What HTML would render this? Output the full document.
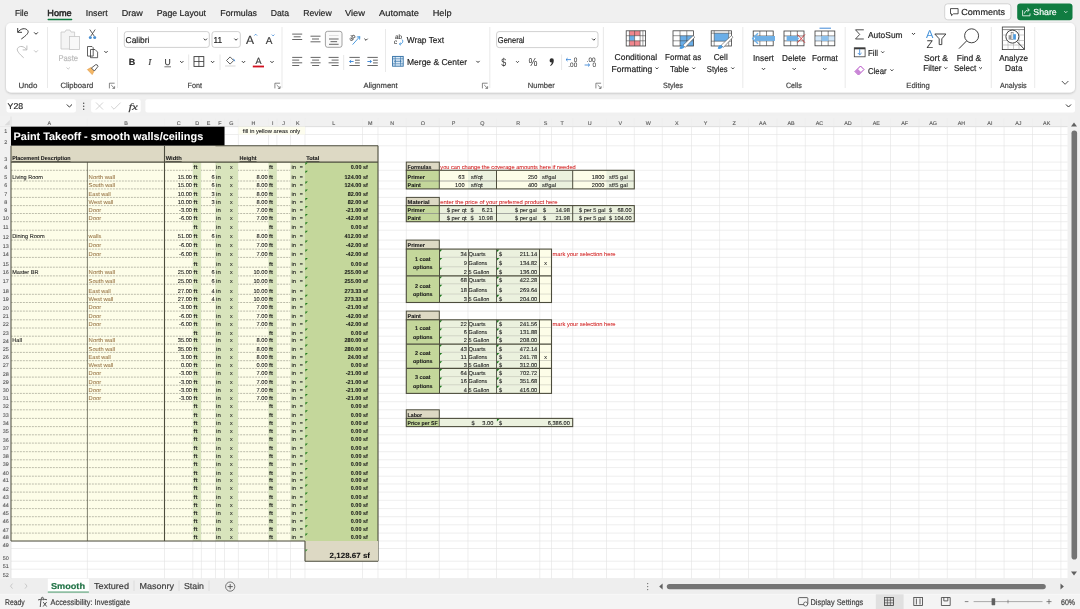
<!DOCTYPE html>
<html><head><meta charset="utf-8"><style>
html,body{margin:0;padding:0;width:1080px;height:609px;overflow:hidden;background:#f0f0f0;}
svg{display:block;font-family:'Liberation Sans', sans-serif;will-change:transform;text-rendering:geometricPrecision;}
</style></head><body>
<svg width="1080" height="609" viewBox="0 0 1080 609">
<rect x="0.00" y="0.00" width="1080.00" height="609.00" fill="#f0f0f0" />
<rect x="11.00" y="126.50" width="1056.50" height="452.20" fill="#ffffff" />
<line x1="87.40" y1="126.50" x2="87.40" y2="578.70" stroke="#e2e2e2" stroke-width="0.6" />
<line x1="164.50" y1="126.50" x2="164.50" y2="578.70" stroke="#e2e2e2" stroke-width="0.6" />
<line x1="192.80" y1="126.50" x2="192.80" y2="578.70" stroke="#e2e2e2" stroke-width="0.6" />
<line x1="201.40" y1="126.50" x2="201.40" y2="578.70" stroke="#e2e2e2" stroke-width="0.6" />
<line x1="215.50" y1="126.50" x2="215.50" y2="578.70" stroke="#e2e2e2" stroke-width="0.6" />
<line x1="224.50" y1="126.50" x2="224.50" y2="578.70" stroke="#e2e2e2" stroke-width="0.6" />
<line x1="238.40" y1="126.50" x2="238.40" y2="578.70" stroke="#e2e2e2" stroke-width="0.6" />
<line x1="268.50" y1="126.50" x2="268.50" y2="578.70" stroke="#e2e2e2" stroke-width="0.6" />
<line x1="276.90" y1="126.50" x2="276.90" y2="578.70" stroke="#e2e2e2" stroke-width="0.6" />
<line x1="290.50" y1="126.50" x2="290.50" y2="578.70" stroke="#e2e2e2" stroke-width="0.6" />
<line x1="305.00" y1="126.50" x2="305.00" y2="578.70" stroke="#e2e2e2" stroke-width="0.6" />
<line x1="362.50" y1="126.50" x2="362.50" y2="578.70" stroke="#e2e2e2" stroke-width="0.6" />
<line x1="378.00" y1="126.50" x2="378.00" y2="578.70" stroke="#e2e2e2" stroke-width="0.6" />
<line x1="406.30" y1="126.50" x2="406.30" y2="578.70" stroke="#e2e2e2" stroke-width="0.6" />
<line x1="439.30" y1="126.50" x2="439.30" y2="578.70" stroke="#e2e2e2" stroke-width="0.6" />
<line x1="468.00" y1="126.50" x2="468.00" y2="578.70" stroke="#e2e2e2" stroke-width="0.6" />
<line x1="496.50" y1="126.50" x2="496.50" y2="578.70" stroke="#e2e2e2" stroke-width="0.6" />
<line x1="539.80" y1="126.50" x2="539.80" y2="578.70" stroke="#e2e2e2" stroke-width="0.6" />
<line x1="551.50" y1="126.50" x2="551.50" y2="578.70" stroke="#e2e2e2" stroke-width="0.6" />
<line x1="572.70" y1="126.50" x2="572.70" y2="578.70" stroke="#e2e2e2" stroke-width="0.6" />
<line x1="606.50" y1="126.50" x2="606.50" y2="578.70" stroke="#e2e2e2" stroke-width="0.6" />
<line x1="634.30" y1="126.50" x2="634.30" y2="578.70" stroke="#e2e2e2" stroke-width="0.6" />
<line x1="662.30" y1="126.50" x2="662.30" y2="578.70" stroke="#e2e2e2" stroke-width="0.6" />
<line x1="691.50" y1="126.50" x2="691.50" y2="578.70" stroke="#e2e2e2" stroke-width="0.6" />
<line x1="719.60" y1="126.50" x2="719.60" y2="578.70" stroke="#e2e2e2" stroke-width="0.6" />
<line x1="748.50" y1="126.50" x2="748.50" y2="578.70" stroke="#e2e2e2" stroke-width="0.6" />
<line x1="776.90" y1="126.50" x2="776.90" y2="578.70" stroke="#e2e2e2" stroke-width="0.6" />
<line x1="805.30" y1="126.50" x2="805.30" y2="578.70" stroke="#e2e2e2" stroke-width="0.6" />
<line x1="833.70" y1="126.50" x2="833.70" y2="578.70" stroke="#e2e2e2" stroke-width="0.6" />
<line x1="862.10" y1="126.50" x2="862.10" y2="578.70" stroke="#e2e2e2" stroke-width="0.6" />
<line x1="890.50" y1="126.50" x2="890.50" y2="578.70" stroke="#e2e2e2" stroke-width="0.6" />
<line x1="918.90" y1="126.50" x2="918.90" y2="578.70" stroke="#e2e2e2" stroke-width="0.6" />
<line x1="947.30" y1="126.50" x2="947.30" y2="578.70" stroke="#e2e2e2" stroke-width="0.6" />
<line x1="975.70" y1="126.50" x2="975.70" y2="578.70" stroke="#e2e2e2" stroke-width="0.6" />
<line x1="1004.10" y1="126.50" x2="1004.10" y2="578.70" stroke="#e2e2e2" stroke-width="0.6" />
<line x1="1032.50" y1="126.50" x2="1032.50" y2="578.70" stroke="#e2e2e2" stroke-width="0.6" />
<line x1="1060.90" y1="126.50" x2="1060.90" y2="578.70" stroke="#e2e2e2" stroke-width="0.6" />
<line x1="11.00" y1="126.70" x2="1067.50" y2="126.70" stroke="#e2e2e2" stroke-width="0.6" />
<line x1="11.00" y1="134.50" x2="1067.50" y2="134.50" stroke="#e2e2e2" stroke-width="0.6" />
<line x1="11.00" y1="145.80" x2="1067.50" y2="145.80" stroke="#e2e2e2" stroke-width="0.6" />
<line x1="11.00" y1="162.10" x2="1067.50" y2="162.10" stroke="#e2e2e2" stroke-width="0.6" />
<line x1="11.00" y1="170.30" x2="1067.50" y2="170.30" stroke="#e2e2e2" stroke-width="0.6" />
<line x1="11.00" y1="181.00" x2="1067.50" y2="181.00" stroke="#e2e2e2" stroke-width="0.6" />
<line x1="11.00" y1="188.90" x2="1067.50" y2="188.90" stroke="#e2e2e2" stroke-width="0.6" />
<line x1="11.00" y1="197.40" x2="1067.50" y2="197.40" stroke="#e2e2e2" stroke-width="0.6" />
<line x1="11.00" y1="205.60" x2="1067.50" y2="205.60" stroke="#e2e2e2" stroke-width="0.6" />
<line x1="11.00" y1="213.50" x2="1067.50" y2="213.50" stroke="#e2e2e2" stroke-width="0.6" />
<line x1="11.00" y1="221.70" x2="1067.50" y2="221.70" stroke="#e2e2e2" stroke-width="0.6" />
<line x1="11.00" y1="230.20" x2="1067.50" y2="230.20" stroke="#e2e2e2" stroke-width="0.6" />
<line x1="11.00" y1="240.10" x2="1067.50" y2="240.10" stroke="#e2e2e2" stroke-width="0.6" />
<line x1="11.00" y1="249.10" x2="1067.50" y2="249.10" stroke="#e2e2e2" stroke-width="0.6" />
<line x1="11.00" y1="257.40" x2="1067.50" y2="257.40" stroke="#e2e2e2" stroke-width="0.6" />
<line x1="11.00" y1="267.20" x2="1067.50" y2="267.20" stroke="#e2e2e2" stroke-width="0.6" />
<line x1="11.00" y1="275.90" x2="1067.50" y2="275.90" stroke="#e2e2e2" stroke-width="0.6" />
<line x1="11.00" y1="284.20" x2="1067.50" y2="284.20" stroke="#e2e2e2" stroke-width="0.6" />
<line x1="11.00" y1="294.30" x2="1067.50" y2="294.30" stroke="#e2e2e2" stroke-width="0.6" />
<line x1="11.00" y1="302.50" x2="1067.50" y2="302.50" stroke="#e2e2e2" stroke-width="0.6" />
<line x1="11.00" y1="311.10" x2="1067.50" y2="311.10" stroke="#e2e2e2" stroke-width="0.6" />
<line x1="11.00" y1="319.80" x2="1067.50" y2="319.80" stroke="#e2e2e2" stroke-width="0.6" />
<line x1="11.00" y1="328.00" x2="1067.50" y2="328.00" stroke="#e2e2e2" stroke-width="0.6" />
<line x1="11.00" y1="336.20" x2="1067.50" y2="336.20" stroke="#e2e2e2" stroke-width="0.6" />
<line x1="11.00" y1="344.10" x2="1067.50" y2="344.10" stroke="#e2e2e2" stroke-width="0.6" />
<line x1="11.00" y1="352.40" x2="1067.50" y2="352.40" stroke="#e2e2e2" stroke-width="0.6" />
<line x1="11.00" y1="360.70" x2="1067.50" y2="360.70" stroke="#e2e2e2" stroke-width="0.6" />
<line x1="11.00" y1="368.40" x2="1067.50" y2="368.40" stroke="#e2e2e2" stroke-width="0.6" />
<line x1="11.00" y1="377.10" x2="1067.50" y2="377.10" stroke="#e2e2e2" stroke-width="0.6" />
<line x1="11.00" y1="385.20" x2="1067.50" y2="385.20" stroke="#e2e2e2" stroke-width="0.6" />
<line x1="11.00" y1="393.40" x2="1067.50" y2="393.40" stroke="#e2e2e2" stroke-width="0.6" />
<line x1="11.00" y1="401.70" x2="1067.50" y2="401.70" stroke="#e2e2e2" stroke-width="0.6" />
<line x1="11.00" y1="409.80" x2="1067.50" y2="409.80" stroke="#e2e2e2" stroke-width="0.6" />
<line x1="11.00" y1="418.40" x2="1067.50" y2="418.40" stroke="#e2e2e2" stroke-width="0.6" />
<line x1="11.00" y1="426.60" x2="1067.50" y2="426.60" stroke="#e2e2e2" stroke-width="0.6" />
<line x1="11.00" y1="434.80" x2="1067.50" y2="434.80" stroke="#e2e2e2" stroke-width="0.6" />
<line x1="11.00" y1="443.10" x2="1067.50" y2="443.10" stroke="#e2e2e2" stroke-width="0.6" />
<line x1="11.00" y1="451.70" x2="1067.50" y2="451.70" stroke="#e2e2e2" stroke-width="0.6" />
<line x1="11.00" y1="459.80" x2="1067.50" y2="459.80" stroke="#e2e2e2" stroke-width="0.6" />
<line x1="11.00" y1="467.60" x2="1067.50" y2="467.60" stroke="#e2e2e2" stroke-width="0.6" />
<line x1="11.00" y1="476.20" x2="1067.50" y2="476.20" stroke="#e2e2e2" stroke-width="0.6" />
<line x1="11.00" y1="484.00" x2="1067.50" y2="484.00" stroke="#e2e2e2" stroke-width="0.6" />
<line x1="11.00" y1="492.10" x2="1067.50" y2="492.10" stroke="#e2e2e2" stroke-width="0.6" />
<line x1="11.00" y1="500.30" x2="1067.50" y2="500.30" stroke="#e2e2e2" stroke-width="0.6" />
<line x1="11.00" y1="508.60" x2="1067.50" y2="508.60" stroke="#e2e2e2" stroke-width="0.6" />
<line x1="11.00" y1="516.70" x2="1067.50" y2="516.70" stroke="#e2e2e2" stroke-width="0.6" />
<line x1="11.00" y1="524.80" x2="1067.50" y2="524.80" stroke="#e2e2e2" stroke-width="0.6" />
<line x1="11.00" y1="533.10" x2="1067.50" y2="533.10" stroke="#e2e2e2" stroke-width="0.6" />
<line x1="11.00" y1="541.00" x2="1067.50" y2="541.00" stroke="#e2e2e2" stroke-width="0.6" />
<line x1="11.00" y1="548.50" x2="1067.50" y2="548.50" stroke="#e2e2e2" stroke-width="0.6" />
<line x1="11.00" y1="561.20" x2="1067.50" y2="561.20" stroke="#e2e2e2" stroke-width="0.6" />
<line x1="11.00" y1="569.20" x2="1067.50" y2="569.20" stroke="#e2e2e2" stroke-width="0.6" />
<line x1="11.00" y1="578.70" x2="1067.50" y2="578.70" stroke="#e2e2e2" stroke-width="0.6" />
<rect x="0.00" y="116.50" width="1067.50" height="10.00" fill="#f1f1f1" />
<line x1="0.00" y1="126.50" x2="1067.50" y2="126.50" stroke="#d6d6d6" stroke-width="0.6" />
<text x="49.20" y="124.60" font-size="5.4" fill="#5a5a5a" stroke="#5a5a5a" stroke-width="0.12" text-anchor="middle">A</text>
<line x1="87.40" y1="118.50" x2="87.40" y2="126.50" stroke="#ececec" stroke-width="0.5" />
<text x="125.95" y="124.60" font-size="5.4" fill="#5a5a5a" stroke="#5a5a5a" stroke-width="0.12" text-anchor="middle">B</text>
<line x1="164.50" y1="118.50" x2="164.50" y2="126.50" stroke="#ececec" stroke-width="0.5" />
<text x="178.65" y="124.60" font-size="5.4" fill="#5a5a5a" stroke="#5a5a5a" stroke-width="0.12" text-anchor="middle">C</text>
<line x1="192.80" y1="118.50" x2="192.80" y2="126.50" stroke="#ececec" stroke-width="0.5" />
<text x="197.10" y="124.60" font-size="5.4" fill="#5a5a5a" stroke="#5a5a5a" stroke-width="0.12" text-anchor="middle">D</text>
<line x1="201.40" y1="118.50" x2="201.40" y2="126.50" stroke="#ececec" stroke-width="0.5" />
<text x="208.45" y="124.60" font-size="5.4" fill="#5a5a5a" stroke="#5a5a5a" stroke-width="0.12" text-anchor="middle">E</text>
<line x1="215.50" y1="118.50" x2="215.50" y2="126.50" stroke="#ececec" stroke-width="0.5" />
<text x="220.00" y="124.60" font-size="5.4" fill="#5a5a5a" stroke="#5a5a5a" stroke-width="0.12" text-anchor="middle">F</text>
<line x1="224.50" y1="118.50" x2="224.50" y2="126.50" stroke="#ececec" stroke-width="0.5" />
<text x="231.45" y="124.60" font-size="5.4" fill="#5a5a5a" stroke="#5a5a5a" stroke-width="0.12" text-anchor="middle">G</text>
<line x1="238.40" y1="118.50" x2="238.40" y2="126.50" stroke="#ececec" stroke-width="0.5" />
<text x="253.45" y="124.60" font-size="5.4" fill="#5a5a5a" stroke="#5a5a5a" stroke-width="0.12" text-anchor="middle">H</text>
<line x1="268.50" y1="118.50" x2="268.50" y2="126.50" stroke="#ececec" stroke-width="0.5" />
<text x="272.70" y="124.60" font-size="5.4" fill="#5a5a5a" stroke="#5a5a5a" stroke-width="0.12" text-anchor="middle">I</text>
<line x1="276.90" y1="118.50" x2="276.90" y2="126.50" stroke="#ececec" stroke-width="0.5" />
<text x="283.70" y="124.60" font-size="5.4" fill="#5a5a5a" stroke="#5a5a5a" stroke-width="0.12" text-anchor="middle">J</text>
<line x1="290.50" y1="118.50" x2="290.50" y2="126.50" stroke="#ececec" stroke-width="0.5" />
<text x="297.75" y="124.60" font-size="5.4" fill="#5a5a5a" stroke="#5a5a5a" stroke-width="0.12" text-anchor="middle">K</text>
<line x1="305.00" y1="118.50" x2="305.00" y2="126.50" stroke="#ececec" stroke-width="0.5" />
<text x="333.75" y="124.60" font-size="5.4" fill="#5a5a5a" stroke="#5a5a5a" stroke-width="0.12" text-anchor="middle">L</text>
<line x1="362.50" y1="118.50" x2="362.50" y2="126.50" stroke="#ececec" stroke-width="0.5" />
<text x="370.25" y="124.60" font-size="5.4" fill="#5a5a5a" stroke="#5a5a5a" stroke-width="0.12" text-anchor="middle">M</text>
<line x1="378.00" y1="118.50" x2="378.00" y2="126.50" stroke="#ececec" stroke-width="0.5" />
<text x="392.15" y="124.60" font-size="5.4" fill="#5a5a5a" stroke="#5a5a5a" stroke-width="0.12" text-anchor="middle">N</text>
<line x1="406.30" y1="118.50" x2="406.30" y2="126.50" stroke="#ececec" stroke-width="0.5" />
<text x="422.80" y="124.60" font-size="5.4" fill="#5a5a5a" stroke="#5a5a5a" stroke-width="0.12" text-anchor="middle">O</text>
<line x1="439.30" y1="118.50" x2="439.30" y2="126.50" stroke="#ececec" stroke-width="0.5" />
<text x="453.65" y="124.60" font-size="5.4" fill="#5a5a5a" stroke="#5a5a5a" stroke-width="0.12" text-anchor="middle">P</text>
<line x1="468.00" y1="118.50" x2="468.00" y2="126.50" stroke="#ececec" stroke-width="0.5" />
<text x="482.25" y="124.60" font-size="5.4" fill="#5a5a5a" stroke="#5a5a5a" stroke-width="0.12" text-anchor="middle">Q</text>
<line x1="496.50" y1="118.50" x2="496.50" y2="126.50" stroke="#ececec" stroke-width="0.5" />
<text x="518.15" y="124.60" font-size="5.4" fill="#5a5a5a" stroke="#5a5a5a" stroke-width="0.12" text-anchor="middle">R</text>
<line x1="539.80" y1="118.50" x2="539.80" y2="126.50" stroke="#ececec" stroke-width="0.5" />
<text x="545.65" y="124.60" font-size="5.4" fill="#5a5a5a" stroke="#5a5a5a" stroke-width="0.12" text-anchor="middle">S</text>
<line x1="551.50" y1="118.50" x2="551.50" y2="126.50" stroke="#ececec" stroke-width="0.5" />
<text x="562.10" y="124.60" font-size="5.4" fill="#5a5a5a" stroke="#5a5a5a" stroke-width="0.12" text-anchor="middle">T</text>
<line x1="572.70" y1="118.50" x2="572.70" y2="126.50" stroke="#ececec" stroke-width="0.5" />
<text x="589.60" y="124.60" font-size="5.4" fill="#5a5a5a" stroke="#5a5a5a" stroke-width="0.12" text-anchor="middle">U</text>
<line x1="606.50" y1="118.50" x2="606.50" y2="126.50" stroke="#ececec" stroke-width="0.5" />
<text x="620.40" y="124.60" font-size="5.4" fill="#5a5a5a" stroke="#5a5a5a" stroke-width="0.12" text-anchor="middle">V</text>
<line x1="634.30" y1="118.50" x2="634.30" y2="126.50" stroke="#ececec" stroke-width="0.5" />
<text x="648.30" y="124.60" font-size="5.4" fill="#5a5a5a" stroke="#5a5a5a" stroke-width="0.12" text-anchor="middle">W</text>
<line x1="662.30" y1="118.50" x2="662.30" y2="126.50" stroke="#ececec" stroke-width="0.5" />
<text x="676.90" y="124.60" font-size="5.4" fill="#5a5a5a" stroke="#5a5a5a" stroke-width="0.12" text-anchor="middle">X</text>
<line x1="691.50" y1="118.50" x2="691.50" y2="126.50" stroke="#ececec" stroke-width="0.5" />
<text x="705.55" y="124.60" font-size="5.4" fill="#5a5a5a" stroke="#5a5a5a" stroke-width="0.12" text-anchor="middle">Y</text>
<line x1="719.60" y1="118.50" x2="719.60" y2="126.50" stroke="#ececec" stroke-width="0.5" />
<text x="734.05" y="124.60" font-size="5.4" fill="#5a5a5a" stroke="#5a5a5a" stroke-width="0.12" text-anchor="middle">Z</text>
<line x1="748.50" y1="118.50" x2="748.50" y2="126.50" stroke="#ececec" stroke-width="0.5" />
<text x="762.70" y="124.60" font-size="5.4" fill="#5a5a5a" stroke="#5a5a5a" stroke-width="0.12" text-anchor="middle">AA</text>
<line x1="776.90" y1="118.50" x2="776.90" y2="126.50" stroke="#ececec" stroke-width="0.5" />
<text x="791.10" y="124.60" font-size="5.4" fill="#5a5a5a" stroke="#5a5a5a" stroke-width="0.12" text-anchor="middle">AB</text>
<line x1="805.30" y1="118.50" x2="805.30" y2="126.50" stroke="#ececec" stroke-width="0.5" />
<text x="819.50" y="124.60" font-size="5.4" fill="#5a5a5a" stroke="#5a5a5a" stroke-width="0.12" text-anchor="middle">AC</text>
<line x1="833.70" y1="118.50" x2="833.70" y2="126.50" stroke="#ececec" stroke-width="0.5" />
<text x="847.90" y="124.60" font-size="5.4" fill="#5a5a5a" stroke="#5a5a5a" stroke-width="0.12" text-anchor="middle">AD</text>
<line x1="862.10" y1="118.50" x2="862.10" y2="126.50" stroke="#ececec" stroke-width="0.5" />
<text x="876.30" y="124.60" font-size="5.4" fill="#5a5a5a" stroke="#5a5a5a" stroke-width="0.12" text-anchor="middle">AE</text>
<line x1="890.50" y1="118.50" x2="890.50" y2="126.50" stroke="#ececec" stroke-width="0.5" />
<text x="904.70" y="124.60" font-size="5.4" fill="#5a5a5a" stroke="#5a5a5a" stroke-width="0.12" text-anchor="middle">AF</text>
<line x1="918.90" y1="118.50" x2="918.90" y2="126.50" stroke="#ececec" stroke-width="0.5" />
<text x="933.10" y="124.60" font-size="5.4" fill="#5a5a5a" stroke="#5a5a5a" stroke-width="0.12" text-anchor="middle">AG</text>
<line x1="947.30" y1="118.50" x2="947.30" y2="126.50" stroke="#ececec" stroke-width="0.5" />
<text x="961.50" y="124.60" font-size="5.4" fill="#5a5a5a" stroke="#5a5a5a" stroke-width="0.12" text-anchor="middle">AH</text>
<line x1="975.70" y1="118.50" x2="975.70" y2="126.50" stroke="#ececec" stroke-width="0.5" />
<text x="989.90" y="124.60" font-size="5.4" fill="#5a5a5a" stroke="#5a5a5a" stroke-width="0.12" text-anchor="middle">AI</text>
<line x1="1004.10" y1="118.50" x2="1004.10" y2="126.50" stroke="#ececec" stroke-width="0.5" />
<text x="1018.30" y="124.60" font-size="5.4" fill="#5a5a5a" stroke="#5a5a5a" stroke-width="0.12" text-anchor="middle">AJ</text>
<line x1="1032.50" y1="118.50" x2="1032.50" y2="126.50" stroke="#ececec" stroke-width="0.5" />
<text x="1046.70" y="124.60" font-size="5.4" fill="#5a5a5a" stroke="#5a5a5a" stroke-width="0.12" text-anchor="middle">AK</text>
<line x1="1060.90" y1="118.50" x2="1060.90" y2="126.50" stroke="#ececec" stroke-width="0.5" />
<rect x="0.00" y="126.50" width="11.00" height="452.20" fill="#f1f1f1" />
<line x1="11.00" y1="116.50" x2="11.00" y2="578.70" stroke="#d6d6d6" stroke-width="0.6" />
<text x="5.80" y="132.90" font-size="5.4" fill="#555555" stroke="#555555" stroke-width="0.1" text-anchor="middle">1</text>
<text x="5.80" y="144.20" font-size="5.4" fill="#555555" stroke="#555555" stroke-width="0.1" text-anchor="middle">2</text>
<text x="5.80" y="160.50" font-size="5.4" fill="#555555" stroke="#555555" stroke-width="0.1" text-anchor="middle">3</text>
<text x="5.80" y="168.70" font-size="5.4" fill="#555555" stroke="#555555" stroke-width="0.1" text-anchor="middle">4</text>
<text x="5.80" y="179.40" font-size="5.4" fill="#555555" stroke="#555555" stroke-width="0.1" text-anchor="middle">5</text>
<text x="5.80" y="187.30" font-size="5.4" fill="#555555" stroke="#555555" stroke-width="0.1" text-anchor="middle">6</text>
<text x="5.80" y="195.80" font-size="5.4" fill="#555555" stroke="#555555" stroke-width="0.1" text-anchor="middle">7</text>
<text x="5.80" y="204.00" font-size="5.4" fill="#555555" stroke="#555555" stroke-width="0.1" text-anchor="middle">8</text>
<text x="5.80" y="211.90" font-size="5.4" fill="#555555" stroke="#555555" stroke-width="0.1" text-anchor="middle">9</text>
<text x="5.80" y="220.10" font-size="5.4" fill="#555555" stroke="#555555" stroke-width="0.1" text-anchor="middle">10</text>
<text x="5.80" y="228.60" font-size="5.4" fill="#555555" stroke="#555555" stroke-width="0.1" text-anchor="middle">11</text>
<text x="5.80" y="238.50" font-size="5.4" fill="#555555" stroke="#555555" stroke-width="0.1" text-anchor="middle">12</text>
<text x="5.80" y="247.50" font-size="5.4" fill="#555555" stroke="#555555" stroke-width="0.1" text-anchor="middle">13</text>
<text x="5.80" y="255.80" font-size="5.4" fill="#555555" stroke="#555555" stroke-width="0.1" text-anchor="middle">14</text>
<text x="5.80" y="265.60" font-size="5.4" fill="#555555" stroke="#555555" stroke-width="0.1" text-anchor="middle">15</text>
<text x="5.80" y="274.30" font-size="5.4" fill="#555555" stroke="#555555" stroke-width="0.1" text-anchor="middle">16</text>
<text x="5.80" y="282.60" font-size="5.4" fill="#555555" stroke="#555555" stroke-width="0.1" text-anchor="middle">17</text>
<text x="5.80" y="292.70" font-size="5.4" fill="#555555" stroke="#555555" stroke-width="0.1" text-anchor="middle">18</text>
<text x="5.80" y="300.90" font-size="5.4" fill="#555555" stroke="#555555" stroke-width="0.1" text-anchor="middle">19</text>
<text x="5.80" y="309.50" font-size="5.4" fill="#555555" stroke="#555555" stroke-width="0.1" text-anchor="middle">20</text>
<text x="5.80" y="318.20" font-size="5.4" fill="#555555" stroke="#555555" stroke-width="0.1" text-anchor="middle">21</text>
<text x="5.80" y="326.40" font-size="5.4" fill="#555555" stroke="#555555" stroke-width="0.1" text-anchor="middle">22</text>
<text x="5.80" y="334.60" font-size="5.4" fill="#555555" stroke="#555555" stroke-width="0.1" text-anchor="middle">23</text>
<text x="5.80" y="342.50" font-size="5.4" fill="#555555" stroke="#555555" stroke-width="0.1" text-anchor="middle">24</text>
<text x="5.80" y="350.80" font-size="5.4" fill="#555555" stroke="#555555" stroke-width="0.1" text-anchor="middle">25</text>
<text x="5.80" y="359.10" font-size="5.4" fill="#555555" stroke="#555555" stroke-width="0.1" text-anchor="middle">26</text>
<text x="5.80" y="366.80" font-size="5.4" fill="#555555" stroke="#555555" stroke-width="0.1" text-anchor="middle">27</text>
<text x="5.80" y="375.50" font-size="5.4" fill="#555555" stroke="#555555" stroke-width="0.1" text-anchor="middle">28</text>
<text x="5.80" y="383.60" font-size="5.4" fill="#555555" stroke="#555555" stroke-width="0.1" text-anchor="middle">29</text>
<text x="5.80" y="391.80" font-size="5.4" fill="#555555" stroke="#555555" stroke-width="0.1" text-anchor="middle">30</text>
<text x="5.80" y="400.10" font-size="5.4" fill="#555555" stroke="#555555" stroke-width="0.1" text-anchor="middle">31</text>
<text x="5.80" y="408.20" font-size="5.4" fill="#555555" stroke="#555555" stroke-width="0.1" text-anchor="middle">32</text>
<text x="5.80" y="416.80" font-size="5.4" fill="#555555" stroke="#555555" stroke-width="0.1" text-anchor="middle">33</text>
<text x="5.80" y="425.00" font-size="5.4" fill="#555555" stroke="#555555" stroke-width="0.1" text-anchor="middle">34</text>
<text x="5.80" y="433.20" font-size="5.4" fill="#555555" stroke="#555555" stroke-width="0.1" text-anchor="middle">35</text>
<text x="5.80" y="441.50" font-size="5.4" fill="#555555" stroke="#555555" stroke-width="0.1" text-anchor="middle">36</text>
<text x="5.80" y="450.10" font-size="5.4" fill="#555555" stroke="#555555" stroke-width="0.1" text-anchor="middle">37</text>
<text x="5.80" y="458.20" font-size="5.4" fill="#555555" stroke="#555555" stroke-width="0.1" text-anchor="middle">38</text>
<text x="5.80" y="466.00" font-size="5.4" fill="#555555" stroke="#555555" stroke-width="0.1" text-anchor="middle">39</text>
<text x="5.80" y="474.60" font-size="5.4" fill="#555555" stroke="#555555" stroke-width="0.1" text-anchor="middle">40</text>
<text x="5.80" y="482.40" font-size="5.4" fill="#555555" stroke="#555555" stroke-width="0.1" text-anchor="middle">41</text>
<text x="5.80" y="490.50" font-size="5.4" fill="#555555" stroke="#555555" stroke-width="0.1" text-anchor="middle">42</text>
<text x="5.80" y="498.70" font-size="5.4" fill="#555555" stroke="#555555" stroke-width="0.1" text-anchor="middle">43</text>
<text x="5.80" y="507.00" font-size="5.4" fill="#555555" stroke="#555555" stroke-width="0.1" text-anchor="middle">44</text>
<text x="5.80" y="515.10" font-size="5.4" fill="#555555" stroke="#555555" stroke-width="0.1" text-anchor="middle">45</text>
<text x="5.80" y="523.20" font-size="5.4" fill="#555555" stroke="#555555" stroke-width="0.1" text-anchor="middle">46</text>
<text x="5.80" y="531.50" font-size="5.4" fill="#555555" stroke="#555555" stroke-width="0.1" text-anchor="middle">47</text>
<text x="5.80" y="539.40" font-size="5.4" fill="#555555" stroke="#555555" stroke-width="0.1" text-anchor="middle">48</text>
<text x="5.80" y="546.90" font-size="5.4" fill="#555555" stroke="#555555" stroke-width="0.1" text-anchor="middle">49</text>
<text x="5.80" y="559.60" font-size="5.4" fill="#555555" stroke="#555555" stroke-width="0.1" text-anchor="middle">50</text>
<text x="5.80" y="567.60" font-size="5.4" fill="#555555" stroke="#555555" stroke-width="0.1" text-anchor="middle">51</text>
<text x="5.80" y="577.10" font-size="5.4" fill="#555555" stroke="#555555" stroke-width="0.1" text-anchor="middle">52</text>
<path d="M9.8 120 L9.8 125.2 L4.6 125.2 Z" fill="#dcdcdc"/>
<rect x="11.00" y="126.70" width="213.50" height="19.10" fill="#000000" />
<text x="13.60" y="140.00" font-size="10.9" fill="#ffffff" stroke="#ffffff" stroke-width="0.05" font-weight="bold" textLength="189.6" lengthAdjust="spacingAndGlyphs">Paint Takeoff - smooth walls/ceilings</text>
<rect x="238.40" y="126.70" width="66.60" height="7.80" fill="#fdfdee" />
<text x="242.80" y="133.30" font-size="5.5" fill="#222" stroke="#222" stroke-width="0.08" textLength="57.42" lengthAdjust="spacingAndGlyphs">fill in yellow areas only</text>
<rect x="11.00" y="145.80" width="367.00" height="16.30" fill="#ddd9c4" />
<text x="12.20" y="160.30" font-size="5.6" fill="#1a1a1a" stroke="#1a1a1a" stroke-width="0.08" font-weight="bold" textLength="58.31" lengthAdjust="spacingAndGlyphs" text-decoration="underline">Placement Description</text>
<text x="165.70" y="160.30" font-size="5.6" fill="#1a1a1a" stroke="#1a1a1a" stroke-width="0.08" font-weight="bold" textLength="16.0" lengthAdjust="spacingAndGlyphs" text-decoration="underline">Width</text>
<text x="239.60" y="160.30" font-size="5.6" fill="#1a1a1a" stroke="#1a1a1a" stroke-width="0.08" font-weight="bold" textLength="17.03" lengthAdjust="spacingAndGlyphs" text-decoration="underline">Height</text>
<text x="306.20" y="160.30" font-size="5.6" fill="#1a1a1a" stroke="#1a1a1a" stroke-width="0.08" font-weight="bold" textLength="13.19" lengthAdjust="spacingAndGlyphs" text-decoration="underline">Total</text>
<rect x="11.00" y="162.10" width="181.80" height="378.90" fill="#fdfde8" />
<rect x="192.80" y="162.10" width="8.60" height="378.90" fill="#d8e4bc" />
<rect x="201.40" y="162.10" width="14.10" height="378.90" fill="#fdfde8" />
<rect x="215.50" y="162.10" width="22.90" height="378.90" fill="#d8e4bc" />
<rect x="238.40" y="162.10" width="30.10" height="378.90" fill="#fdfde8" />
<rect x="268.50" y="162.10" width="8.40" height="378.90" fill="#d8e4bc" />
<rect x="276.90" y="162.10" width="13.60" height="378.90" fill="#fdfde8" />
<rect x="290.50" y="162.10" width="14.50" height="378.90" fill="#d8e4bc" />
<rect x="305.00" y="162.10" width="73.00" height="378.90" fill="#c4d79b" />
<line x1="11.00" y1="170.30" x2="192.80" y2="170.30" stroke="#6e6e60" stroke-width="0.75" stroke-dasharray="0.6 0.9"/>
<line x1="201.40" y1="170.30" x2="215.50" y2="170.30" stroke="#6e6e60" stroke-width="0.75" stroke-dasharray="0.6 0.9"/>
<line x1="238.40" y1="170.30" x2="268.50" y2="170.30" stroke="#6e6e60" stroke-width="0.75" stroke-dasharray="0.6 0.9"/>
<line x1="276.90" y1="170.30" x2="290.50" y2="170.30" stroke="#6e6e60" stroke-width="0.75" stroke-dasharray="0.6 0.9"/>
<line x1="11.00" y1="181.00" x2="192.80" y2="181.00" stroke="#6e6e60" stroke-width="0.75" stroke-dasharray="0.6 0.9"/>
<line x1="201.40" y1="181.00" x2="215.50" y2="181.00" stroke="#6e6e60" stroke-width="0.75" stroke-dasharray="0.6 0.9"/>
<line x1="238.40" y1="181.00" x2="268.50" y2="181.00" stroke="#6e6e60" stroke-width="0.75" stroke-dasharray="0.6 0.9"/>
<line x1="276.90" y1="181.00" x2="290.50" y2="181.00" stroke="#6e6e60" stroke-width="0.75" stroke-dasharray="0.6 0.9"/>
<line x1="11.00" y1="188.90" x2="192.80" y2="188.90" stroke="#6e6e60" stroke-width="0.75" stroke-dasharray="0.6 0.9"/>
<line x1="201.40" y1="188.90" x2="215.50" y2="188.90" stroke="#6e6e60" stroke-width="0.75" stroke-dasharray="0.6 0.9"/>
<line x1="238.40" y1="188.90" x2="268.50" y2="188.90" stroke="#6e6e60" stroke-width="0.75" stroke-dasharray="0.6 0.9"/>
<line x1="276.90" y1="188.90" x2="290.50" y2="188.90" stroke="#6e6e60" stroke-width="0.75" stroke-dasharray="0.6 0.9"/>
<line x1="11.00" y1="197.40" x2="192.80" y2="197.40" stroke="#6e6e60" stroke-width="0.75" stroke-dasharray="0.6 0.9"/>
<line x1="201.40" y1="197.40" x2="215.50" y2="197.40" stroke="#6e6e60" stroke-width="0.75" stroke-dasharray="0.6 0.9"/>
<line x1="238.40" y1="197.40" x2="268.50" y2="197.40" stroke="#6e6e60" stroke-width="0.75" stroke-dasharray="0.6 0.9"/>
<line x1="276.90" y1="197.40" x2="290.50" y2="197.40" stroke="#6e6e60" stroke-width="0.75" stroke-dasharray="0.6 0.9"/>
<line x1="11.00" y1="205.60" x2="192.80" y2="205.60" stroke="#6e6e60" stroke-width="0.75" stroke-dasharray="0.6 0.9"/>
<line x1="201.40" y1="205.60" x2="215.50" y2="205.60" stroke="#6e6e60" stroke-width="0.75" stroke-dasharray="0.6 0.9"/>
<line x1="238.40" y1="205.60" x2="268.50" y2="205.60" stroke="#6e6e60" stroke-width="0.75" stroke-dasharray="0.6 0.9"/>
<line x1="276.90" y1="205.60" x2="290.50" y2="205.60" stroke="#6e6e60" stroke-width="0.75" stroke-dasharray="0.6 0.9"/>
<line x1="11.00" y1="213.50" x2="192.80" y2="213.50" stroke="#6e6e60" stroke-width="0.75" stroke-dasharray="0.6 0.9"/>
<line x1="201.40" y1="213.50" x2="215.50" y2="213.50" stroke="#6e6e60" stroke-width="0.75" stroke-dasharray="0.6 0.9"/>
<line x1="238.40" y1="213.50" x2="268.50" y2="213.50" stroke="#6e6e60" stroke-width="0.75" stroke-dasharray="0.6 0.9"/>
<line x1="276.90" y1="213.50" x2="290.50" y2="213.50" stroke="#6e6e60" stroke-width="0.75" stroke-dasharray="0.6 0.9"/>
<line x1="11.00" y1="221.70" x2="192.80" y2="221.70" stroke="#6e6e60" stroke-width="0.75" stroke-dasharray="0.6 0.9"/>
<line x1="201.40" y1="221.70" x2="215.50" y2="221.70" stroke="#6e6e60" stroke-width="0.75" stroke-dasharray="0.6 0.9"/>
<line x1="238.40" y1="221.70" x2="268.50" y2="221.70" stroke="#6e6e60" stroke-width="0.75" stroke-dasharray="0.6 0.9"/>
<line x1="276.90" y1="221.70" x2="290.50" y2="221.70" stroke="#6e6e60" stroke-width="0.75" stroke-dasharray="0.6 0.9"/>
<line x1="11.00" y1="230.20" x2="192.80" y2="230.20" stroke="#6e6e60" stroke-width="0.75" stroke-dasharray="0.6 0.9"/>
<line x1="201.40" y1="230.20" x2="215.50" y2="230.20" stroke="#6e6e60" stroke-width="0.75" stroke-dasharray="0.6 0.9"/>
<line x1="238.40" y1="230.20" x2="268.50" y2="230.20" stroke="#6e6e60" stroke-width="0.75" stroke-dasharray="0.6 0.9"/>
<line x1="276.90" y1="230.20" x2="290.50" y2="230.20" stroke="#6e6e60" stroke-width="0.75" stroke-dasharray="0.6 0.9"/>
<line x1="11.00" y1="240.10" x2="192.80" y2="240.10" stroke="#6e6e60" stroke-width="0.75" stroke-dasharray="0.6 0.9"/>
<line x1="201.40" y1="240.10" x2="215.50" y2="240.10" stroke="#6e6e60" stroke-width="0.75" stroke-dasharray="0.6 0.9"/>
<line x1="238.40" y1="240.10" x2="268.50" y2="240.10" stroke="#6e6e60" stroke-width="0.75" stroke-dasharray="0.6 0.9"/>
<line x1="276.90" y1="240.10" x2="290.50" y2="240.10" stroke="#6e6e60" stroke-width="0.75" stroke-dasharray="0.6 0.9"/>
<line x1="11.00" y1="249.10" x2="192.80" y2="249.10" stroke="#6e6e60" stroke-width="0.75" stroke-dasharray="0.6 0.9"/>
<line x1="201.40" y1="249.10" x2="215.50" y2="249.10" stroke="#6e6e60" stroke-width="0.75" stroke-dasharray="0.6 0.9"/>
<line x1="238.40" y1="249.10" x2="268.50" y2="249.10" stroke="#6e6e60" stroke-width="0.75" stroke-dasharray="0.6 0.9"/>
<line x1="276.90" y1="249.10" x2="290.50" y2="249.10" stroke="#6e6e60" stroke-width="0.75" stroke-dasharray="0.6 0.9"/>
<line x1="11.00" y1="257.40" x2="192.80" y2="257.40" stroke="#6e6e60" stroke-width="0.75" stroke-dasharray="0.6 0.9"/>
<line x1="201.40" y1="257.40" x2="215.50" y2="257.40" stroke="#6e6e60" stroke-width="0.75" stroke-dasharray="0.6 0.9"/>
<line x1="238.40" y1="257.40" x2="268.50" y2="257.40" stroke="#6e6e60" stroke-width="0.75" stroke-dasharray="0.6 0.9"/>
<line x1="276.90" y1="257.40" x2="290.50" y2="257.40" stroke="#6e6e60" stroke-width="0.75" stroke-dasharray="0.6 0.9"/>
<line x1="11.00" y1="267.20" x2="192.80" y2="267.20" stroke="#6e6e60" stroke-width="0.75" stroke-dasharray="0.6 0.9"/>
<line x1="201.40" y1="267.20" x2="215.50" y2="267.20" stroke="#6e6e60" stroke-width="0.75" stroke-dasharray="0.6 0.9"/>
<line x1="238.40" y1="267.20" x2="268.50" y2="267.20" stroke="#6e6e60" stroke-width="0.75" stroke-dasharray="0.6 0.9"/>
<line x1="276.90" y1="267.20" x2="290.50" y2="267.20" stroke="#6e6e60" stroke-width="0.75" stroke-dasharray="0.6 0.9"/>
<line x1="11.00" y1="275.90" x2="192.80" y2="275.90" stroke="#6e6e60" stroke-width="0.75" stroke-dasharray="0.6 0.9"/>
<line x1="201.40" y1="275.90" x2="215.50" y2="275.90" stroke="#6e6e60" stroke-width="0.75" stroke-dasharray="0.6 0.9"/>
<line x1="238.40" y1="275.90" x2="268.50" y2="275.90" stroke="#6e6e60" stroke-width="0.75" stroke-dasharray="0.6 0.9"/>
<line x1="276.90" y1="275.90" x2="290.50" y2="275.90" stroke="#6e6e60" stroke-width="0.75" stroke-dasharray="0.6 0.9"/>
<line x1="11.00" y1="284.20" x2="192.80" y2="284.20" stroke="#6e6e60" stroke-width="0.75" stroke-dasharray="0.6 0.9"/>
<line x1="201.40" y1="284.20" x2="215.50" y2="284.20" stroke="#6e6e60" stroke-width="0.75" stroke-dasharray="0.6 0.9"/>
<line x1="238.40" y1="284.20" x2="268.50" y2="284.20" stroke="#6e6e60" stroke-width="0.75" stroke-dasharray="0.6 0.9"/>
<line x1="276.90" y1="284.20" x2="290.50" y2="284.20" stroke="#6e6e60" stroke-width="0.75" stroke-dasharray="0.6 0.9"/>
<line x1="11.00" y1="294.30" x2="192.80" y2="294.30" stroke="#6e6e60" stroke-width="0.75" stroke-dasharray="0.6 0.9"/>
<line x1="201.40" y1="294.30" x2="215.50" y2="294.30" stroke="#6e6e60" stroke-width="0.75" stroke-dasharray="0.6 0.9"/>
<line x1="238.40" y1="294.30" x2="268.50" y2="294.30" stroke="#6e6e60" stroke-width="0.75" stroke-dasharray="0.6 0.9"/>
<line x1="276.90" y1="294.30" x2="290.50" y2="294.30" stroke="#6e6e60" stroke-width="0.75" stroke-dasharray="0.6 0.9"/>
<line x1="11.00" y1="302.50" x2="192.80" y2="302.50" stroke="#6e6e60" stroke-width="0.75" stroke-dasharray="0.6 0.9"/>
<line x1="201.40" y1="302.50" x2="215.50" y2="302.50" stroke="#6e6e60" stroke-width="0.75" stroke-dasharray="0.6 0.9"/>
<line x1="238.40" y1="302.50" x2="268.50" y2="302.50" stroke="#6e6e60" stroke-width="0.75" stroke-dasharray="0.6 0.9"/>
<line x1="276.90" y1="302.50" x2="290.50" y2="302.50" stroke="#6e6e60" stroke-width="0.75" stroke-dasharray="0.6 0.9"/>
<line x1="11.00" y1="311.10" x2="192.80" y2="311.10" stroke="#6e6e60" stroke-width="0.75" stroke-dasharray="0.6 0.9"/>
<line x1="201.40" y1="311.10" x2="215.50" y2="311.10" stroke="#6e6e60" stroke-width="0.75" stroke-dasharray="0.6 0.9"/>
<line x1="238.40" y1="311.10" x2="268.50" y2="311.10" stroke="#6e6e60" stroke-width="0.75" stroke-dasharray="0.6 0.9"/>
<line x1="276.90" y1="311.10" x2="290.50" y2="311.10" stroke="#6e6e60" stroke-width="0.75" stroke-dasharray="0.6 0.9"/>
<line x1="11.00" y1="319.80" x2="192.80" y2="319.80" stroke="#6e6e60" stroke-width="0.75" stroke-dasharray="0.6 0.9"/>
<line x1="201.40" y1="319.80" x2="215.50" y2="319.80" stroke="#6e6e60" stroke-width="0.75" stroke-dasharray="0.6 0.9"/>
<line x1="238.40" y1="319.80" x2="268.50" y2="319.80" stroke="#6e6e60" stroke-width="0.75" stroke-dasharray="0.6 0.9"/>
<line x1="276.90" y1="319.80" x2="290.50" y2="319.80" stroke="#6e6e60" stroke-width="0.75" stroke-dasharray="0.6 0.9"/>
<line x1="11.00" y1="328.00" x2="192.80" y2="328.00" stroke="#6e6e60" stroke-width="0.75" stroke-dasharray="0.6 0.9"/>
<line x1="201.40" y1="328.00" x2="215.50" y2="328.00" stroke="#6e6e60" stroke-width="0.75" stroke-dasharray="0.6 0.9"/>
<line x1="238.40" y1="328.00" x2="268.50" y2="328.00" stroke="#6e6e60" stroke-width="0.75" stroke-dasharray="0.6 0.9"/>
<line x1="276.90" y1="328.00" x2="290.50" y2="328.00" stroke="#6e6e60" stroke-width="0.75" stroke-dasharray="0.6 0.9"/>
<line x1="11.00" y1="336.20" x2="192.80" y2="336.20" stroke="#6e6e60" stroke-width="0.75" stroke-dasharray="0.6 0.9"/>
<line x1="201.40" y1="336.20" x2="215.50" y2="336.20" stroke="#6e6e60" stroke-width="0.75" stroke-dasharray="0.6 0.9"/>
<line x1="238.40" y1="336.20" x2="268.50" y2="336.20" stroke="#6e6e60" stroke-width="0.75" stroke-dasharray="0.6 0.9"/>
<line x1="276.90" y1="336.20" x2="290.50" y2="336.20" stroke="#6e6e60" stroke-width="0.75" stroke-dasharray="0.6 0.9"/>
<line x1="11.00" y1="344.10" x2="192.80" y2="344.10" stroke="#6e6e60" stroke-width="0.75" stroke-dasharray="0.6 0.9"/>
<line x1="201.40" y1="344.10" x2="215.50" y2="344.10" stroke="#6e6e60" stroke-width="0.75" stroke-dasharray="0.6 0.9"/>
<line x1="238.40" y1="344.10" x2="268.50" y2="344.10" stroke="#6e6e60" stroke-width="0.75" stroke-dasharray="0.6 0.9"/>
<line x1="276.90" y1="344.10" x2="290.50" y2="344.10" stroke="#6e6e60" stroke-width="0.75" stroke-dasharray="0.6 0.9"/>
<line x1="11.00" y1="352.40" x2="192.80" y2="352.40" stroke="#6e6e60" stroke-width="0.75" stroke-dasharray="0.6 0.9"/>
<line x1="201.40" y1="352.40" x2="215.50" y2="352.40" stroke="#6e6e60" stroke-width="0.75" stroke-dasharray="0.6 0.9"/>
<line x1="238.40" y1="352.40" x2="268.50" y2="352.40" stroke="#6e6e60" stroke-width="0.75" stroke-dasharray="0.6 0.9"/>
<line x1="276.90" y1="352.40" x2="290.50" y2="352.40" stroke="#6e6e60" stroke-width="0.75" stroke-dasharray="0.6 0.9"/>
<line x1="11.00" y1="360.70" x2="192.80" y2="360.70" stroke="#6e6e60" stroke-width="0.75" stroke-dasharray="0.6 0.9"/>
<line x1="201.40" y1="360.70" x2="215.50" y2="360.70" stroke="#6e6e60" stroke-width="0.75" stroke-dasharray="0.6 0.9"/>
<line x1="238.40" y1="360.70" x2="268.50" y2="360.70" stroke="#6e6e60" stroke-width="0.75" stroke-dasharray="0.6 0.9"/>
<line x1="276.90" y1="360.70" x2="290.50" y2="360.70" stroke="#6e6e60" stroke-width="0.75" stroke-dasharray="0.6 0.9"/>
<line x1="11.00" y1="368.40" x2="192.80" y2="368.40" stroke="#6e6e60" stroke-width="0.75" stroke-dasharray="0.6 0.9"/>
<line x1="201.40" y1="368.40" x2="215.50" y2="368.40" stroke="#6e6e60" stroke-width="0.75" stroke-dasharray="0.6 0.9"/>
<line x1="238.40" y1="368.40" x2="268.50" y2="368.40" stroke="#6e6e60" stroke-width="0.75" stroke-dasharray="0.6 0.9"/>
<line x1="276.90" y1="368.40" x2="290.50" y2="368.40" stroke="#6e6e60" stroke-width="0.75" stroke-dasharray="0.6 0.9"/>
<line x1="11.00" y1="377.10" x2="192.80" y2="377.10" stroke="#6e6e60" stroke-width="0.75" stroke-dasharray="0.6 0.9"/>
<line x1="201.40" y1="377.10" x2="215.50" y2="377.10" stroke="#6e6e60" stroke-width="0.75" stroke-dasharray="0.6 0.9"/>
<line x1="238.40" y1="377.10" x2="268.50" y2="377.10" stroke="#6e6e60" stroke-width="0.75" stroke-dasharray="0.6 0.9"/>
<line x1="276.90" y1="377.10" x2="290.50" y2="377.10" stroke="#6e6e60" stroke-width="0.75" stroke-dasharray="0.6 0.9"/>
<line x1="11.00" y1="385.20" x2="192.80" y2="385.20" stroke="#6e6e60" stroke-width="0.75" stroke-dasharray="0.6 0.9"/>
<line x1="201.40" y1="385.20" x2="215.50" y2="385.20" stroke="#6e6e60" stroke-width="0.75" stroke-dasharray="0.6 0.9"/>
<line x1="238.40" y1="385.20" x2="268.50" y2="385.20" stroke="#6e6e60" stroke-width="0.75" stroke-dasharray="0.6 0.9"/>
<line x1="276.90" y1="385.20" x2="290.50" y2="385.20" stroke="#6e6e60" stroke-width="0.75" stroke-dasharray="0.6 0.9"/>
<line x1="11.00" y1="393.40" x2="192.80" y2="393.40" stroke="#6e6e60" stroke-width="0.75" stroke-dasharray="0.6 0.9"/>
<line x1="201.40" y1="393.40" x2="215.50" y2="393.40" stroke="#6e6e60" stroke-width="0.75" stroke-dasharray="0.6 0.9"/>
<line x1="238.40" y1="393.40" x2="268.50" y2="393.40" stroke="#6e6e60" stroke-width="0.75" stroke-dasharray="0.6 0.9"/>
<line x1="276.90" y1="393.40" x2="290.50" y2="393.40" stroke="#6e6e60" stroke-width="0.75" stroke-dasharray="0.6 0.9"/>
<line x1="11.00" y1="401.70" x2="192.80" y2="401.70" stroke="#6e6e60" stroke-width="0.75" stroke-dasharray="0.6 0.9"/>
<line x1="201.40" y1="401.70" x2="215.50" y2="401.70" stroke="#6e6e60" stroke-width="0.75" stroke-dasharray="0.6 0.9"/>
<line x1="238.40" y1="401.70" x2="268.50" y2="401.70" stroke="#6e6e60" stroke-width="0.75" stroke-dasharray="0.6 0.9"/>
<line x1="276.90" y1="401.70" x2="290.50" y2="401.70" stroke="#6e6e60" stroke-width="0.75" stroke-dasharray="0.6 0.9"/>
<line x1="11.00" y1="409.80" x2="192.80" y2="409.80" stroke="#6e6e60" stroke-width="0.75" stroke-dasharray="0.6 0.9"/>
<line x1="201.40" y1="409.80" x2="215.50" y2="409.80" stroke="#6e6e60" stroke-width="0.75" stroke-dasharray="0.6 0.9"/>
<line x1="238.40" y1="409.80" x2="268.50" y2="409.80" stroke="#6e6e60" stroke-width="0.75" stroke-dasharray="0.6 0.9"/>
<line x1="276.90" y1="409.80" x2="290.50" y2="409.80" stroke="#6e6e60" stroke-width="0.75" stroke-dasharray="0.6 0.9"/>
<line x1="11.00" y1="418.40" x2="192.80" y2="418.40" stroke="#6e6e60" stroke-width="0.75" stroke-dasharray="0.6 0.9"/>
<line x1="201.40" y1="418.40" x2="215.50" y2="418.40" stroke="#6e6e60" stroke-width="0.75" stroke-dasharray="0.6 0.9"/>
<line x1="238.40" y1="418.40" x2="268.50" y2="418.40" stroke="#6e6e60" stroke-width="0.75" stroke-dasharray="0.6 0.9"/>
<line x1="276.90" y1="418.40" x2="290.50" y2="418.40" stroke="#6e6e60" stroke-width="0.75" stroke-dasharray="0.6 0.9"/>
<line x1="11.00" y1="426.60" x2="192.80" y2="426.60" stroke="#6e6e60" stroke-width="0.75" stroke-dasharray="0.6 0.9"/>
<line x1="201.40" y1="426.60" x2="215.50" y2="426.60" stroke="#6e6e60" stroke-width="0.75" stroke-dasharray="0.6 0.9"/>
<line x1="238.40" y1="426.60" x2="268.50" y2="426.60" stroke="#6e6e60" stroke-width="0.75" stroke-dasharray="0.6 0.9"/>
<line x1="276.90" y1="426.60" x2="290.50" y2="426.60" stroke="#6e6e60" stroke-width="0.75" stroke-dasharray="0.6 0.9"/>
<line x1="11.00" y1="434.80" x2="192.80" y2="434.80" stroke="#6e6e60" stroke-width="0.75" stroke-dasharray="0.6 0.9"/>
<line x1="201.40" y1="434.80" x2="215.50" y2="434.80" stroke="#6e6e60" stroke-width="0.75" stroke-dasharray="0.6 0.9"/>
<line x1="238.40" y1="434.80" x2="268.50" y2="434.80" stroke="#6e6e60" stroke-width="0.75" stroke-dasharray="0.6 0.9"/>
<line x1="276.90" y1="434.80" x2="290.50" y2="434.80" stroke="#6e6e60" stroke-width="0.75" stroke-dasharray="0.6 0.9"/>
<line x1="11.00" y1="443.10" x2="192.80" y2="443.10" stroke="#6e6e60" stroke-width="0.75" stroke-dasharray="0.6 0.9"/>
<line x1="201.40" y1="443.10" x2="215.50" y2="443.10" stroke="#6e6e60" stroke-width="0.75" stroke-dasharray="0.6 0.9"/>
<line x1="238.40" y1="443.10" x2="268.50" y2="443.10" stroke="#6e6e60" stroke-width="0.75" stroke-dasharray="0.6 0.9"/>
<line x1="276.90" y1="443.10" x2="290.50" y2="443.10" stroke="#6e6e60" stroke-width="0.75" stroke-dasharray="0.6 0.9"/>
<line x1="11.00" y1="451.70" x2="192.80" y2="451.70" stroke="#6e6e60" stroke-width="0.75" stroke-dasharray="0.6 0.9"/>
<line x1="201.40" y1="451.70" x2="215.50" y2="451.70" stroke="#6e6e60" stroke-width="0.75" stroke-dasharray="0.6 0.9"/>
<line x1="238.40" y1="451.70" x2="268.50" y2="451.70" stroke="#6e6e60" stroke-width="0.75" stroke-dasharray="0.6 0.9"/>
<line x1="276.90" y1="451.70" x2="290.50" y2="451.70" stroke="#6e6e60" stroke-width="0.75" stroke-dasharray="0.6 0.9"/>
<line x1="11.00" y1="459.80" x2="192.80" y2="459.80" stroke="#6e6e60" stroke-width="0.75" stroke-dasharray="0.6 0.9"/>
<line x1="201.40" y1="459.80" x2="215.50" y2="459.80" stroke="#6e6e60" stroke-width="0.75" stroke-dasharray="0.6 0.9"/>
<line x1="238.40" y1="459.80" x2="268.50" y2="459.80" stroke="#6e6e60" stroke-width="0.75" stroke-dasharray="0.6 0.9"/>
<line x1="276.90" y1="459.80" x2="290.50" y2="459.80" stroke="#6e6e60" stroke-width="0.75" stroke-dasharray="0.6 0.9"/>
<line x1="11.00" y1="467.60" x2="192.80" y2="467.60" stroke="#6e6e60" stroke-width="0.75" stroke-dasharray="0.6 0.9"/>
<line x1="201.40" y1="467.60" x2="215.50" y2="467.60" stroke="#6e6e60" stroke-width="0.75" stroke-dasharray="0.6 0.9"/>
<line x1="238.40" y1="467.60" x2="268.50" y2="467.60" stroke="#6e6e60" stroke-width="0.75" stroke-dasharray="0.6 0.9"/>
<line x1="276.90" y1="467.60" x2="290.50" y2="467.60" stroke="#6e6e60" stroke-width="0.75" stroke-dasharray="0.6 0.9"/>
<line x1="11.00" y1="476.20" x2="192.80" y2="476.20" stroke="#6e6e60" stroke-width="0.75" stroke-dasharray="0.6 0.9"/>
<line x1="201.40" y1="476.20" x2="215.50" y2="476.20" stroke="#6e6e60" stroke-width="0.75" stroke-dasharray="0.6 0.9"/>
<line x1="238.40" y1="476.20" x2="268.50" y2="476.20" stroke="#6e6e60" stroke-width="0.75" stroke-dasharray="0.6 0.9"/>
<line x1="276.90" y1="476.20" x2="290.50" y2="476.20" stroke="#6e6e60" stroke-width="0.75" stroke-dasharray="0.6 0.9"/>
<line x1="11.00" y1="484.00" x2="192.80" y2="484.00" stroke="#6e6e60" stroke-width="0.75" stroke-dasharray="0.6 0.9"/>
<line x1="201.40" y1="484.00" x2="215.50" y2="484.00" stroke="#6e6e60" stroke-width="0.75" stroke-dasharray="0.6 0.9"/>
<line x1="238.40" y1="484.00" x2="268.50" y2="484.00" stroke="#6e6e60" stroke-width="0.75" stroke-dasharray="0.6 0.9"/>
<line x1="276.90" y1="484.00" x2="290.50" y2="484.00" stroke="#6e6e60" stroke-width="0.75" stroke-dasharray="0.6 0.9"/>
<line x1="11.00" y1="492.10" x2="192.80" y2="492.10" stroke="#6e6e60" stroke-width="0.75" stroke-dasharray="0.6 0.9"/>
<line x1="201.40" y1="492.10" x2="215.50" y2="492.10" stroke="#6e6e60" stroke-width="0.75" stroke-dasharray="0.6 0.9"/>
<line x1="238.40" y1="492.10" x2="268.50" y2="492.10" stroke="#6e6e60" stroke-width="0.75" stroke-dasharray="0.6 0.9"/>
<line x1="276.90" y1="492.10" x2="290.50" y2="492.10" stroke="#6e6e60" stroke-width="0.75" stroke-dasharray="0.6 0.9"/>
<line x1="11.00" y1="500.30" x2="192.80" y2="500.30" stroke="#6e6e60" stroke-width="0.75" stroke-dasharray="0.6 0.9"/>
<line x1="201.40" y1="500.30" x2="215.50" y2="500.30" stroke="#6e6e60" stroke-width="0.75" stroke-dasharray="0.6 0.9"/>
<line x1="238.40" y1="500.30" x2="268.50" y2="500.30" stroke="#6e6e60" stroke-width="0.75" stroke-dasharray="0.6 0.9"/>
<line x1="276.90" y1="500.30" x2="290.50" y2="500.30" stroke="#6e6e60" stroke-width="0.75" stroke-dasharray="0.6 0.9"/>
<line x1="11.00" y1="508.60" x2="192.80" y2="508.60" stroke="#6e6e60" stroke-width="0.75" stroke-dasharray="0.6 0.9"/>
<line x1="201.40" y1="508.60" x2="215.50" y2="508.60" stroke="#6e6e60" stroke-width="0.75" stroke-dasharray="0.6 0.9"/>
<line x1="238.40" y1="508.60" x2="268.50" y2="508.60" stroke="#6e6e60" stroke-width="0.75" stroke-dasharray="0.6 0.9"/>
<line x1="276.90" y1="508.60" x2="290.50" y2="508.60" stroke="#6e6e60" stroke-width="0.75" stroke-dasharray="0.6 0.9"/>
<line x1="11.00" y1="516.70" x2="192.80" y2="516.70" stroke="#6e6e60" stroke-width="0.75" stroke-dasharray="0.6 0.9"/>
<line x1="201.40" y1="516.70" x2="215.50" y2="516.70" stroke="#6e6e60" stroke-width="0.75" stroke-dasharray="0.6 0.9"/>
<line x1="238.40" y1="516.70" x2="268.50" y2="516.70" stroke="#6e6e60" stroke-width="0.75" stroke-dasharray="0.6 0.9"/>
<line x1="276.90" y1="516.70" x2="290.50" y2="516.70" stroke="#6e6e60" stroke-width="0.75" stroke-dasharray="0.6 0.9"/>
<line x1="11.00" y1="524.80" x2="192.80" y2="524.80" stroke="#6e6e60" stroke-width="0.75" stroke-dasharray="0.6 0.9"/>
<line x1="201.40" y1="524.80" x2="215.50" y2="524.80" stroke="#6e6e60" stroke-width="0.75" stroke-dasharray="0.6 0.9"/>
<line x1="238.40" y1="524.80" x2="268.50" y2="524.80" stroke="#6e6e60" stroke-width="0.75" stroke-dasharray="0.6 0.9"/>
<line x1="276.90" y1="524.80" x2="290.50" y2="524.80" stroke="#6e6e60" stroke-width="0.75" stroke-dasharray="0.6 0.9"/>
<line x1="11.00" y1="533.10" x2="192.80" y2="533.10" stroke="#6e6e60" stroke-width="0.75" stroke-dasharray="0.6 0.9"/>
<line x1="201.40" y1="533.10" x2="215.50" y2="533.10" stroke="#6e6e60" stroke-width="0.75" stroke-dasharray="0.6 0.9"/>
<line x1="238.40" y1="533.10" x2="268.50" y2="533.10" stroke="#6e6e60" stroke-width="0.75" stroke-dasharray="0.6 0.9"/>
<line x1="276.90" y1="533.10" x2="290.50" y2="533.10" stroke="#6e6e60" stroke-width="0.75" stroke-dasharray="0.6 0.9"/>
<line x1="87.40" y1="162.10" x2="87.40" y2="541.00" stroke="#4d4d3d" stroke-width="0.7" />
<line x1="164.50" y1="145.80" x2="164.50" y2="541.00" stroke="#4d4d3d" stroke-width="1.1" />
<line x1="11.00" y1="145.80" x2="11.00" y2="541.00" stroke="#4d4d3d" stroke-width="1.0" />
<line x1="215.50" y1="145.80" x2="378.00" y2="145.80" stroke="#4d4d3d" stroke-width="1.1" />
<line x1="11.00" y1="162.10" x2="378.00" y2="162.10" stroke="#4d4d3d" stroke-width="1.1" />
<line x1="378.00" y1="145.80" x2="378.00" y2="561.20" stroke="#4d4d3d" stroke-width="1.1" />
<line x1="11.00" y1="541.00" x2="305.00" y2="541.00" stroke="#4d4d3d" stroke-width="1.1" />
<rect x="305.00" y="541.00" width="73.00" height="20.20" fill="#ddd9c4" />
<line x1="305.00" y1="541.00" x2="305.00" y2="561.20" stroke="#4d4d3d" stroke-width="1.1" />
<line x1="305.00" y1="561.20" x2="378.00" y2="561.20" stroke="#4d4d3d" stroke-width="1.1" />
<text x="370.00" y="557.70" font-size="7.6" fill="#111" stroke="#111" stroke-width="0.08" font-weight="bold" text-anchor="end" textLength="40.4" lengthAdjust="spacingAndGlyphs">2,128.67 sf</text>
<path d="M305.50 549.50 l2.2 0 l-2.2 2.2z" fill="#2a8a2a"/>
<text x="193.60" y="168.65" font-size="5.6" fill="#1a1a1a" stroke="#1a1a1a" stroke-width="0.08" textLength="3.98" lengthAdjust="spacingAndGlyphs">ft</text>
<text x="216.10" y="168.65" font-size="5.6" fill="#1a1a1a" stroke="#1a1a1a" stroke-width="0.08" textLength="4.69" lengthAdjust="spacingAndGlyphs">in</text>
<text x="231.30" y="168.65" font-size="5.6" fill="#1a1a1a" stroke="#1a1a1a" stroke-width="0.08" text-anchor="middle" textLength="2.69" lengthAdjust="spacingAndGlyphs">x</text>
<text x="269.10" y="168.65" font-size="5.6" fill="#1a1a1a" stroke="#1a1a1a" stroke-width="0.08" textLength="3.98" lengthAdjust="spacingAndGlyphs">ft</text>
<text x="291.40" y="168.65" font-size="5.6" fill="#1a1a1a" stroke="#1a1a1a" stroke-width="0.08" textLength="4.69" lengthAdjust="spacingAndGlyphs">in</text>
<text x="299.70" y="168.65" font-size="5.6" fill="#1a1a1a" stroke="#1a1a1a" stroke-width="0.08" textLength="3.1" lengthAdjust="spacingAndGlyphs">=</text>
<text x="367.80" y="168.65" font-size="5.6" fill="#1a1a1a" stroke="#1a1a1a" stroke-width="0.08" font-weight="bold" text-anchor="end" textLength="16.97" lengthAdjust="spacingAndGlyphs">0.00 sf</text>
<path d="M305.40 162.60 l2.5 0 l-2.5 2.5z" fill="#1f7a1f"/>
<text x="12.20" y="179.35" font-size="5.6" fill="#1a1a1a" stroke="#1a1a1a" stroke-width="0.08" textLength="30.78" lengthAdjust="spacingAndGlyphs">Living Room</text>
<text x="88.60" y="179.35" font-size="5.6" fill="#9c7a4c" stroke="#9c7a4c" stroke-width="0.08" textLength="26.5" lengthAdjust="spacingAndGlyphs">North wall</text>
<text x="192.00" y="179.35" font-size="5.6" fill="#1a1a1a" stroke="#1a1a1a" stroke-width="0.08" text-anchor="end" textLength="14.18" lengthAdjust="spacingAndGlyphs">15.00</text>
<text x="193.60" y="179.35" font-size="5.6" fill="#1a1a1a" stroke="#1a1a1a" stroke-width="0.08" textLength="3.98" lengthAdjust="spacingAndGlyphs">ft</text>
<text x="214.70" y="179.35" font-size="5.6" fill="#1a1a1a" stroke="#1a1a1a" stroke-width="0.08" text-anchor="end" textLength="3.15" lengthAdjust="spacingAndGlyphs">6</text>
<text x="216.10" y="179.35" font-size="5.6" fill="#1a1a1a" stroke="#1a1a1a" stroke-width="0.08" textLength="4.69" lengthAdjust="spacingAndGlyphs">in</text>
<text x="231.30" y="179.35" font-size="5.6" fill="#1a1a1a" stroke="#1a1a1a" stroke-width="0.08" text-anchor="middle" textLength="2.69" lengthAdjust="spacingAndGlyphs">x</text>
<text x="267.60" y="179.35" font-size="5.6" fill="#1a1a1a" stroke="#1a1a1a" stroke-width="0.08" text-anchor="end" textLength="11.03" lengthAdjust="spacingAndGlyphs">8.00</text>
<text x="269.10" y="179.35" font-size="5.6" fill="#1a1a1a" stroke="#1a1a1a" stroke-width="0.08" textLength="3.98" lengthAdjust="spacingAndGlyphs">ft</text>
<text x="291.40" y="179.35" font-size="5.6" fill="#1a1a1a" stroke="#1a1a1a" stroke-width="0.08" textLength="4.69" lengthAdjust="spacingAndGlyphs">in</text>
<text x="299.70" y="179.35" font-size="5.6" fill="#1a1a1a" stroke="#1a1a1a" stroke-width="0.08" textLength="3.1" lengthAdjust="spacingAndGlyphs">=</text>
<text x="367.80" y="179.35" font-size="5.6" fill="#1a1a1a" stroke="#1a1a1a" stroke-width="0.08" font-weight="bold" text-anchor="end" textLength="23.28" lengthAdjust="spacingAndGlyphs">124.00 sf</text>
<path d="M305.40 170.80 l2.5 0 l-2.5 2.5z" fill="#1f7a1f"/>
<text x="88.60" y="187.25" font-size="5.6" fill="#9c7a4c" stroke="#9c7a4c" stroke-width="0.08" textLength="26.43" lengthAdjust="spacingAndGlyphs">South wall</text>
<text x="192.00" y="187.25" font-size="5.6" fill="#1a1a1a" stroke="#1a1a1a" stroke-width="0.08" text-anchor="end" textLength="14.18" lengthAdjust="spacingAndGlyphs">15.00</text>
<text x="193.60" y="187.25" font-size="5.6" fill="#1a1a1a" stroke="#1a1a1a" stroke-width="0.08" textLength="3.98" lengthAdjust="spacingAndGlyphs">ft</text>
<text x="214.70" y="187.25" font-size="5.6" fill="#1a1a1a" stroke="#1a1a1a" stroke-width="0.08" text-anchor="end" textLength="3.15" lengthAdjust="spacingAndGlyphs">6</text>
<text x="216.10" y="187.25" font-size="5.6" fill="#1a1a1a" stroke="#1a1a1a" stroke-width="0.08" textLength="4.69" lengthAdjust="spacingAndGlyphs">in</text>
<text x="231.30" y="187.25" font-size="5.6" fill="#1a1a1a" stroke="#1a1a1a" stroke-width="0.08" text-anchor="middle" textLength="2.69" lengthAdjust="spacingAndGlyphs">x</text>
<text x="267.60" y="187.25" font-size="5.6" fill="#1a1a1a" stroke="#1a1a1a" stroke-width="0.08" text-anchor="end" textLength="11.03" lengthAdjust="spacingAndGlyphs">8.00</text>
<text x="269.10" y="187.25" font-size="5.6" fill="#1a1a1a" stroke="#1a1a1a" stroke-width="0.08" textLength="3.98" lengthAdjust="spacingAndGlyphs">ft</text>
<text x="291.40" y="187.25" font-size="5.6" fill="#1a1a1a" stroke="#1a1a1a" stroke-width="0.08" textLength="4.69" lengthAdjust="spacingAndGlyphs">in</text>
<text x="299.70" y="187.25" font-size="5.6" fill="#1a1a1a" stroke="#1a1a1a" stroke-width="0.08" textLength="3.1" lengthAdjust="spacingAndGlyphs">=</text>
<text x="367.80" y="187.25" font-size="5.6" fill="#1a1a1a" stroke="#1a1a1a" stroke-width="0.08" font-weight="bold" text-anchor="end" textLength="23.28" lengthAdjust="spacingAndGlyphs">124.00 sf</text>
<path d="M305.40 181.50 l2.5 0 l-2.5 2.5z" fill="#1f7a1f"/>
<text x="88.60" y="195.75" font-size="5.6" fill="#9c7a4c" stroke="#9c7a4c" stroke-width="0.08" textLength="22.21" lengthAdjust="spacingAndGlyphs">East wall</text>
<text x="192.00" y="195.75" font-size="5.6" fill="#1a1a1a" stroke="#1a1a1a" stroke-width="0.08" text-anchor="end" textLength="14.18" lengthAdjust="spacingAndGlyphs">10.00</text>
<text x="193.60" y="195.75" font-size="5.6" fill="#1a1a1a" stroke="#1a1a1a" stroke-width="0.08" textLength="3.98" lengthAdjust="spacingAndGlyphs">ft</text>
<text x="214.70" y="195.75" font-size="5.6" fill="#1a1a1a" stroke="#1a1a1a" stroke-width="0.08" text-anchor="end" textLength="3.15" lengthAdjust="spacingAndGlyphs">3</text>
<text x="216.10" y="195.75" font-size="5.6" fill="#1a1a1a" stroke="#1a1a1a" stroke-width="0.08" textLength="4.69" lengthAdjust="spacingAndGlyphs">in</text>
<text x="231.30" y="195.75" font-size="5.6" fill="#1a1a1a" stroke="#1a1a1a" stroke-width="0.08" text-anchor="middle" textLength="2.69" lengthAdjust="spacingAndGlyphs">x</text>
<text x="267.60" y="195.75" font-size="5.6" fill="#1a1a1a" stroke="#1a1a1a" stroke-width="0.08" text-anchor="end" textLength="11.03" lengthAdjust="spacingAndGlyphs">8.00</text>
<text x="269.10" y="195.75" font-size="5.6" fill="#1a1a1a" stroke="#1a1a1a" stroke-width="0.08" textLength="3.98" lengthAdjust="spacingAndGlyphs">ft</text>
<text x="291.40" y="195.75" font-size="5.6" fill="#1a1a1a" stroke="#1a1a1a" stroke-width="0.08" textLength="4.69" lengthAdjust="spacingAndGlyphs">in</text>
<text x="299.70" y="195.75" font-size="5.6" fill="#1a1a1a" stroke="#1a1a1a" stroke-width="0.08" textLength="3.1" lengthAdjust="spacingAndGlyphs">=</text>
<text x="367.80" y="195.75" font-size="5.6" fill="#1a1a1a" stroke="#1a1a1a" stroke-width="0.08" font-weight="bold" text-anchor="end" textLength="20.13" lengthAdjust="spacingAndGlyphs">82.00 sf</text>
<path d="M305.40 189.40 l2.5 0 l-2.5 2.5z" fill="#1f7a1f"/>
<text x="88.60" y="203.95" font-size="5.6" fill="#9c7a4c" stroke="#9c7a4c" stroke-width="0.08" textLength="24.83" lengthAdjust="spacingAndGlyphs">West wall</text>
<text x="192.00" y="203.95" font-size="5.6" fill="#1a1a1a" stroke="#1a1a1a" stroke-width="0.08" text-anchor="end" textLength="14.18" lengthAdjust="spacingAndGlyphs">10.00</text>
<text x="193.60" y="203.95" font-size="5.6" fill="#1a1a1a" stroke="#1a1a1a" stroke-width="0.08" textLength="3.98" lengthAdjust="spacingAndGlyphs">ft</text>
<text x="214.70" y="203.95" font-size="5.6" fill="#1a1a1a" stroke="#1a1a1a" stroke-width="0.08" text-anchor="end" textLength="3.15" lengthAdjust="spacingAndGlyphs">3</text>
<text x="216.10" y="203.95" font-size="5.6" fill="#1a1a1a" stroke="#1a1a1a" stroke-width="0.08" textLength="4.69" lengthAdjust="spacingAndGlyphs">in</text>
<text x="231.30" y="203.95" font-size="5.6" fill="#1a1a1a" stroke="#1a1a1a" stroke-width="0.08" text-anchor="middle" textLength="2.69" lengthAdjust="spacingAndGlyphs">x</text>
<text x="267.60" y="203.95" font-size="5.6" fill="#1a1a1a" stroke="#1a1a1a" stroke-width="0.08" text-anchor="end" textLength="11.03" lengthAdjust="spacingAndGlyphs">8.00</text>
<text x="269.10" y="203.95" font-size="5.6" fill="#1a1a1a" stroke="#1a1a1a" stroke-width="0.08" textLength="3.98" lengthAdjust="spacingAndGlyphs">ft</text>
<text x="291.40" y="203.95" font-size="5.6" fill="#1a1a1a" stroke="#1a1a1a" stroke-width="0.08" textLength="4.69" lengthAdjust="spacingAndGlyphs">in</text>
<text x="299.70" y="203.95" font-size="5.6" fill="#1a1a1a" stroke="#1a1a1a" stroke-width="0.08" textLength="3.1" lengthAdjust="spacingAndGlyphs">=</text>
<text x="367.80" y="203.95" font-size="5.6" fill="#1a1a1a" stroke="#1a1a1a" stroke-width="0.08" font-weight="bold" text-anchor="end" textLength="20.13" lengthAdjust="spacingAndGlyphs">82.00 sf</text>
<path d="M305.40 197.90 l2.5 0 l-2.5 2.5z" fill="#1f7a1f"/>
<text x="88.60" y="211.85" font-size="5.6" fill="#9c7a4c" stroke="#9c7a4c" stroke-width="0.08" textLength="12.55" lengthAdjust="spacingAndGlyphs">Door</text>
<text x="192.00" y="211.85" font-size="5.6" fill="#1a1a1a" stroke="#1a1a1a" stroke-width="0.08" text-anchor="end" textLength="12.93" lengthAdjust="spacingAndGlyphs">-3.00</text>
<text x="193.60" y="211.85" font-size="5.6" fill="#1a1a1a" stroke="#1a1a1a" stroke-width="0.08" textLength="3.98" lengthAdjust="spacingAndGlyphs">ft</text>
<text x="216.10" y="211.85" font-size="5.6" fill="#1a1a1a" stroke="#1a1a1a" stroke-width="0.08" textLength="4.69" lengthAdjust="spacingAndGlyphs">in</text>
<text x="231.30" y="211.85" font-size="5.6" fill="#1a1a1a" stroke="#1a1a1a" stroke-width="0.08" text-anchor="middle" textLength="2.69" lengthAdjust="spacingAndGlyphs">x</text>
<text x="267.60" y="211.85" font-size="5.6" fill="#1a1a1a" stroke="#1a1a1a" stroke-width="0.08" text-anchor="end" textLength="11.03" lengthAdjust="spacingAndGlyphs">7.00</text>
<text x="269.10" y="211.85" font-size="5.6" fill="#1a1a1a" stroke="#1a1a1a" stroke-width="0.08" textLength="3.98" lengthAdjust="spacingAndGlyphs">ft</text>
<text x="291.40" y="211.85" font-size="5.6" fill="#1a1a1a" stroke="#1a1a1a" stroke-width="0.08" textLength="4.69" lengthAdjust="spacingAndGlyphs">in</text>
<text x="299.70" y="211.85" font-size="5.6" fill="#1a1a1a" stroke="#1a1a1a" stroke-width="0.08" textLength="3.1" lengthAdjust="spacingAndGlyphs">=</text>
<text x="367.80" y="211.85" font-size="5.6" fill="#1a1a1a" stroke="#1a1a1a" stroke-width="0.08" font-weight="bold" text-anchor="end" textLength="22.03" lengthAdjust="spacingAndGlyphs">-21.00 sf</text>
<path d="M305.40 206.10 l2.5 0 l-2.5 2.5z" fill="#1f7a1f"/>
<text x="88.60" y="220.05" font-size="5.6" fill="#9c7a4c" stroke="#9c7a4c" stroke-width="0.08" textLength="12.55" lengthAdjust="spacingAndGlyphs">Door</text>
<text x="192.00" y="220.05" font-size="5.6" fill="#1a1a1a" stroke="#1a1a1a" stroke-width="0.08" text-anchor="end" textLength="12.93" lengthAdjust="spacingAndGlyphs">-6.00</text>
<text x="193.60" y="220.05" font-size="5.6" fill="#1a1a1a" stroke="#1a1a1a" stroke-width="0.08" textLength="3.98" lengthAdjust="spacingAndGlyphs">ft</text>
<text x="216.10" y="220.05" font-size="5.6" fill="#1a1a1a" stroke="#1a1a1a" stroke-width="0.08" textLength="4.69" lengthAdjust="spacingAndGlyphs">in</text>
<text x="231.30" y="220.05" font-size="5.6" fill="#1a1a1a" stroke="#1a1a1a" stroke-width="0.08" text-anchor="middle" textLength="2.69" lengthAdjust="spacingAndGlyphs">x</text>
<text x="267.60" y="220.05" font-size="5.6" fill="#1a1a1a" stroke="#1a1a1a" stroke-width="0.08" text-anchor="end" textLength="11.03" lengthAdjust="spacingAndGlyphs">7.00</text>
<text x="269.10" y="220.05" font-size="5.6" fill="#1a1a1a" stroke="#1a1a1a" stroke-width="0.08" textLength="3.98" lengthAdjust="spacingAndGlyphs">ft</text>
<text x="291.40" y="220.05" font-size="5.6" fill="#1a1a1a" stroke="#1a1a1a" stroke-width="0.08" textLength="4.69" lengthAdjust="spacingAndGlyphs">in</text>
<text x="299.70" y="220.05" font-size="5.6" fill="#1a1a1a" stroke="#1a1a1a" stroke-width="0.08" textLength="3.1" lengthAdjust="spacingAndGlyphs">=</text>
<text x="367.80" y="220.05" font-size="5.6" fill="#1a1a1a" stroke="#1a1a1a" stroke-width="0.08" font-weight="bold" text-anchor="end" textLength="22.03" lengthAdjust="spacingAndGlyphs">-42.00 sf</text>
<path d="M305.40 214.00 l2.5 0 l-2.5 2.5z" fill="#1f7a1f"/>
<text x="193.60" y="228.55" font-size="5.6" fill="#1a1a1a" stroke="#1a1a1a" stroke-width="0.08" textLength="3.98" lengthAdjust="spacingAndGlyphs">ft</text>
<text x="216.10" y="228.55" font-size="5.6" fill="#1a1a1a" stroke="#1a1a1a" stroke-width="0.08" textLength="4.69" lengthAdjust="spacingAndGlyphs">in</text>
<text x="231.30" y="228.55" font-size="5.6" fill="#1a1a1a" stroke="#1a1a1a" stroke-width="0.08" text-anchor="middle" textLength="2.69" lengthAdjust="spacingAndGlyphs">x</text>
<text x="269.10" y="228.55" font-size="5.6" fill="#1a1a1a" stroke="#1a1a1a" stroke-width="0.08" textLength="3.98" lengthAdjust="spacingAndGlyphs">ft</text>
<text x="291.40" y="228.55" font-size="5.6" fill="#1a1a1a" stroke="#1a1a1a" stroke-width="0.08" textLength="4.69" lengthAdjust="spacingAndGlyphs">in</text>
<text x="299.70" y="228.55" font-size="5.6" fill="#1a1a1a" stroke="#1a1a1a" stroke-width="0.08" textLength="3.1" lengthAdjust="spacingAndGlyphs">=</text>
<text x="367.80" y="228.55" font-size="5.6" fill="#1a1a1a" stroke="#1a1a1a" stroke-width="0.08" font-weight="bold" text-anchor="end" textLength="16.97" lengthAdjust="spacingAndGlyphs">0.00 sf</text>
<path d="M305.40 222.20 l2.5 0 l-2.5 2.5z" fill="#1f7a1f"/>
<text x="12.20" y="238.45" font-size="5.6" fill="#1a1a1a" stroke="#1a1a1a" stroke-width="0.08" textLength="32.44" lengthAdjust="spacingAndGlyphs">Dining Room</text>
<text x="88.60" y="238.45" font-size="5.6" fill="#9c7a4c" stroke="#9c7a4c" stroke-width="0.08" textLength="12.71" lengthAdjust="spacingAndGlyphs">walls</text>
<text x="192.00" y="238.45" font-size="5.6" fill="#1a1a1a" stroke="#1a1a1a" stroke-width="0.08" text-anchor="end" textLength="14.18" lengthAdjust="spacingAndGlyphs">51.00</text>
<text x="193.60" y="238.45" font-size="5.6" fill="#1a1a1a" stroke="#1a1a1a" stroke-width="0.08" textLength="3.98" lengthAdjust="spacingAndGlyphs">ft</text>
<text x="214.70" y="238.45" font-size="5.6" fill="#1a1a1a" stroke="#1a1a1a" stroke-width="0.08" text-anchor="end" textLength="3.15" lengthAdjust="spacingAndGlyphs">6</text>
<text x="216.10" y="238.45" font-size="5.6" fill="#1a1a1a" stroke="#1a1a1a" stroke-width="0.08" textLength="4.69" lengthAdjust="spacingAndGlyphs">in</text>
<text x="231.30" y="238.45" font-size="5.6" fill="#1a1a1a" stroke="#1a1a1a" stroke-width="0.08" text-anchor="middle" textLength="2.69" lengthAdjust="spacingAndGlyphs">x</text>
<text x="267.60" y="238.45" font-size="5.6" fill="#1a1a1a" stroke="#1a1a1a" stroke-width="0.08" text-anchor="end" textLength="11.03" lengthAdjust="spacingAndGlyphs">8.00</text>
<text x="269.10" y="238.45" font-size="5.6" fill="#1a1a1a" stroke="#1a1a1a" stroke-width="0.08" textLength="3.98" lengthAdjust="spacingAndGlyphs">ft</text>
<text x="291.40" y="238.45" font-size="5.6" fill="#1a1a1a" stroke="#1a1a1a" stroke-width="0.08" textLength="4.69" lengthAdjust="spacingAndGlyphs">in</text>
<text x="299.70" y="238.45" font-size="5.6" fill="#1a1a1a" stroke="#1a1a1a" stroke-width="0.08" textLength="3.1" lengthAdjust="spacingAndGlyphs">=</text>
<text x="367.80" y="238.45" font-size="5.6" fill="#1a1a1a" stroke="#1a1a1a" stroke-width="0.08" font-weight="bold" text-anchor="end" textLength="23.28" lengthAdjust="spacingAndGlyphs">412.00 sf</text>
<path d="M305.40 230.70 l2.5 0 l-2.5 2.5z" fill="#1f7a1f"/>
<text x="88.60" y="247.45" font-size="5.6" fill="#9c7a4c" stroke="#9c7a4c" stroke-width="0.08" textLength="12.55" lengthAdjust="spacingAndGlyphs">Door</text>
<text x="192.00" y="247.45" font-size="5.6" fill="#1a1a1a" stroke="#1a1a1a" stroke-width="0.08" text-anchor="end" textLength="12.93" lengthAdjust="spacingAndGlyphs">-6.00</text>
<text x="193.60" y="247.45" font-size="5.6" fill="#1a1a1a" stroke="#1a1a1a" stroke-width="0.08" textLength="3.98" lengthAdjust="spacingAndGlyphs">ft</text>
<text x="216.10" y="247.45" font-size="5.6" fill="#1a1a1a" stroke="#1a1a1a" stroke-width="0.08" textLength="4.69" lengthAdjust="spacingAndGlyphs">in</text>
<text x="231.30" y="247.45" font-size="5.6" fill="#1a1a1a" stroke="#1a1a1a" stroke-width="0.08" text-anchor="middle" textLength="2.69" lengthAdjust="spacingAndGlyphs">x</text>
<text x="267.60" y="247.45" font-size="5.6" fill="#1a1a1a" stroke="#1a1a1a" stroke-width="0.08" text-anchor="end" textLength="11.03" lengthAdjust="spacingAndGlyphs">7.00</text>
<text x="269.10" y="247.45" font-size="5.6" fill="#1a1a1a" stroke="#1a1a1a" stroke-width="0.08" textLength="3.98" lengthAdjust="spacingAndGlyphs">ft</text>
<text x="291.40" y="247.45" font-size="5.6" fill="#1a1a1a" stroke="#1a1a1a" stroke-width="0.08" textLength="4.69" lengthAdjust="spacingAndGlyphs">in</text>
<text x="299.70" y="247.45" font-size="5.6" fill="#1a1a1a" stroke="#1a1a1a" stroke-width="0.08" textLength="3.1" lengthAdjust="spacingAndGlyphs">=</text>
<text x="367.80" y="247.45" font-size="5.6" fill="#1a1a1a" stroke="#1a1a1a" stroke-width="0.08" font-weight="bold" text-anchor="end" textLength="22.03" lengthAdjust="spacingAndGlyphs">-42.00 sf</text>
<path d="M305.40 240.60 l2.5 0 l-2.5 2.5z" fill="#1f7a1f"/>
<text x="88.60" y="255.75" font-size="5.6" fill="#9c7a4c" stroke="#9c7a4c" stroke-width="0.08" textLength="12.55" lengthAdjust="spacingAndGlyphs">Door</text>
<text x="192.00" y="255.75" font-size="5.6" fill="#1a1a1a" stroke="#1a1a1a" stroke-width="0.08" text-anchor="end" textLength="12.93" lengthAdjust="spacingAndGlyphs">-6.00</text>
<text x="193.60" y="255.75" font-size="5.6" fill="#1a1a1a" stroke="#1a1a1a" stroke-width="0.08" textLength="3.98" lengthAdjust="spacingAndGlyphs">ft</text>
<text x="216.10" y="255.75" font-size="5.6" fill="#1a1a1a" stroke="#1a1a1a" stroke-width="0.08" textLength="4.69" lengthAdjust="spacingAndGlyphs">in</text>
<text x="231.30" y="255.75" font-size="5.6" fill="#1a1a1a" stroke="#1a1a1a" stroke-width="0.08" text-anchor="middle" textLength="2.69" lengthAdjust="spacingAndGlyphs">x</text>
<text x="267.60" y="255.75" font-size="5.6" fill="#1a1a1a" stroke="#1a1a1a" stroke-width="0.08" text-anchor="end" textLength="11.03" lengthAdjust="spacingAndGlyphs">7.00</text>
<text x="269.10" y="255.75" font-size="5.6" fill="#1a1a1a" stroke="#1a1a1a" stroke-width="0.08" textLength="3.98" lengthAdjust="spacingAndGlyphs">ft</text>
<text x="291.40" y="255.75" font-size="5.6" fill="#1a1a1a" stroke="#1a1a1a" stroke-width="0.08" textLength="4.69" lengthAdjust="spacingAndGlyphs">in</text>
<text x="299.70" y="255.75" font-size="5.6" fill="#1a1a1a" stroke="#1a1a1a" stroke-width="0.08" textLength="3.1" lengthAdjust="spacingAndGlyphs">=</text>
<text x="367.80" y="255.75" font-size="5.6" fill="#1a1a1a" stroke="#1a1a1a" stroke-width="0.08" font-weight="bold" text-anchor="end" textLength="22.03" lengthAdjust="spacingAndGlyphs">-42.00 sf</text>
<path d="M305.40 249.60 l2.5 0 l-2.5 2.5z" fill="#1f7a1f"/>
<text x="193.60" y="265.55" font-size="5.6" fill="#1a1a1a" stroke="#1a1a1a" stroke-width="0.08" textLength="3.98" lengthAdjust="spacingAndGlyphs">ft</text>
<text x="216.10" y="265.55" font-size="5.6" fill="#1a1a1a" stroke="#1a1a1a" stroke-width="0.08" textLength="4.69" lengthAdjust="spacingAndGlyphs">in</text>
<text x="231.30" y="265.55" font-size="5.6" fill="#1a1a1a" stroke="#1a1a1a" stroke-width="0.08" text-anchor="middle" textLength="2.69" lengthAdjust="spacingAndGlyphs">x</text>
<text x="269.10" y="265.55" font-size="5.6" fill="#1a1a1a" stroke="#1a1a1a" stroke-width="0.08" textLength="3.98" lengthAdjust="spacingAndGlyphs">ft</text>
<text x="291.40" y="265.55" font-size="5.6" fill="#1a1a1a" stroke="#1a1a1a" stroke-width="0.08" textLength="4.69" lengthAdjust="spacingAndGlyphs">in</text>
<text x="299.70" y="265.55" font-size="5.6" fill="#1a1a1a" stroke="#1a1a1a" stroke-width="0.08" textLength="3.1" lengthAdjust="spacingAndGlyphs">=</text>
<text x="367.80" y="265.55" font-size="5.6" fill="#1a1a1a" stroke="#1a1a1a" stroke-width="0.08" font-weight="bold" text-anchor="end" textLength="16.97" lengthAdjust="spacingAndGlyphs">0.00 sf</text>
<path d="M305.40 257.90 l2.5 0 l-2.5 2.5z" fill="#1f7a1f"/>
<text x="12.20" y="274.25" font-size="5.6" fill="#1a1a1a" stroke="#1a1a1a" stroke-width="0.08" textLength="26.25" lengthAdjust="spacingAndGlyphs">Master BR</text>
<text x="88.60" y="274.25" font-size="5.6" fill="#9c7a4c" stroke="#9c7a4c" stroke-width="0.08" textLength="26.5" lengthAdjust="spacingAndGlyphs">North wall</text>
<text x="192.00" y="274.25" font-size="5.6" fill="#1a1a1a" stroke="#1a1a1a" stroke-width="0.08" text-anchor="end" textLength="14.18" lengthAdjust="spacingAndGlyphs">25.00</text>
<text x="193.60" y="274.25" font-size="5.6" fill="#1a1a1a" stroke="#1a1a1a" stroke-width="0.08" textLength="3.98" lengthAdjust="spacingAndGlyphs">ft</text>
<text x="214.70" y="274.25" font-size="5.6" fill="#1a1a1a" stroke="#1a1a1a" stroke-width="0.08" text-anchor="end" textLength="3.15" lengthAdjust="spacingAndGlyphs">6</text>
<text x="216.10" y="274.25" font-size="5.6" fill="#1a1a1a" stroke="#1a1a1a" stroke-width="0.08" textLength="4.69" lengthAdjust="spacingAndGlyphs">in</text>
<text x="231.30" y="274.25" font-size="5.6" fill="#1a1a1a" stroke="#1a1a1a" stroke-width="0.08" text-anchor="middle" textLength="2.69" lengthAdjust="spacingAndGlyphs">x</text>
<text x="267.60" y="274.25" font-size="5.6" fill="#1a1a1a" stroke="#1a1a1a" stroke-width="0.08" text-anchor="end" textLength="14.18" lengthAdjust="spacingAndGlyphs">10.00</text>
<text x="269.10" y="274.25" font-size="5.6" fill="#1a1a1a" stroke="#1a1a1a" stroke-width="0.08" textLength="3.98" lengthAdjust="spacingAndGlyphs">ft</text>
<text x="291.40" y="274.25" font-size="5.6" fill="#1a1a1a" stroke="#1a1a1a" stroke-width="0.08" textLength="4.69" lengthAdjust="spacingAndGlyphs">in</text>
<text x="299.70" y="274.25" font-size="5.6" fill="#1a1a1a" stroke="#1a1a1a" stroke-width="0.08" textLength="3.1" lengthAdjust="spacingAndGlyphs">=</text>
<text x="367.80" y="274.25" font-size="5.6" fill="#1a1a1a" stroke="#1a1a1a" stroke-width="0.08" font-weight="bold" text-anchor="end" textLength="23.28" lengthAdjust="spacingAndGlyphs">255.00 sf</text>
<path d="M305.40 267.70 l2.5 0 l-2.5 2.5z" fill="#1f7a1f"/>
<text x="88.60" y="282.55" font-size="5.6" fill="#9c7a4c" stroke="#9c7a4c" stroke-width="0.08" textLength="26.43" lengthAdjust="spacingAndGlyphs">South wall</text>
<text x="192.00" y="282.55" font-size="5.6" fill="#1a1a1a" stroke="#1a1a1a" stroke-width="0.08" text-anchor="end" textLength="14.18" lengthAdjust="spacingAndGlyphs">25.00</text>
<text x="193.60" y="282.55" font-size="5.6" fill="#1a1a1a" stroke="#1a1a1a" stroke-width="0.08" textLength="3.98" lengthAdjust="spacingAndGlyphs">ft</text>
<text x="214.70" y="282.55" font-size="5.6" fill="#1a1a1a" stroke="#1a1a1a" stroke-width="0.08" text-anchor="end" textLength="3.15" lengthAdjust="spacingAndGlyphs">6</text>
<text x="216.10" y="282.55" font-size="5.6" fill="#1a1a1a" stroke="#1a1a1a" stroke-width="0.08" textLength="4.69" lengthAdjust="spacingAndGlyphs">in</text>
<text x="231.30" y="282.55" font-size="5.6" fill="#1a1a1a" stroke="#1a1a1a" stroke-width="0.08" text-anchor="middle" textLength="2.69" lengthAdjust="spacingAndGlyphs">x</text>
<text x="267.60" y="282.55" font-size="5.6" fill="#1a1a1a" stroke="#1a1a1a" stroke-width="0.08" text-anchor="end" textLength="14.18" lengthAdjust="spacingAndGlyphs">10.00</text>
<text x="269.10" y="282.55" font-size="5.6" fill="#1a1a1a" stroke="#1a1a1a" stroke-width="0.08" textLength="3.98" lengthAdjust="spacingAndGlyphs">ft</text>
<text x="291.40" y="282.55" font-size="5.6" fill="#1a1a1a" stroke="#1a1a1a" stroke-width="0.08" textLength="4.69" lengthAdjust="spacingAndGlyphs">in</text>
<text x="299.70" y="282.55" font-size="5.6" fill="#1a1a1a" stroke="#1a1a1a" stroke-width="0.08" textLength="3.1" lengthAdjust="spacingAndGlyphs">=</text>
<text x="367.80" y="282.55" font-size="5.6" fill="#1a1a1a" stroke="#1a1a1a" stroke-width="0.08" font-weight="bold" text-anchor="end" textLength="23.28" lengthAdjust="spacingAndGlyphs">255.00 sf</text>
<path d="M305.40 276.40 l2.5 0 l-2.5 2.5z" fill="#1f7a1f"/>
<text x="88.60" y="292.65" font-size="5.6" fill="#9c7a4c" stroke="#9c7a4c" stroke-width="0.08" textLength="22.21" lengthAdjust="spacingAndGlyphs">East wall</text>
<text x="192.00" y="292.65" font-size="5.6" fill="#1a1a1a" stroke="#1a1a1a" stroke-width="0.08" text-anchor="end" textLength="14.18" lengthAdjust="spacingAndGlyphs">27.00</text>
<text x="193.60" y="292.65" font-size="5.6" fill="#1a1a1a" stroke="#1a1a1a" stroke-width="0.08" textLength="3.98" lengthAdjust="spacingAndGlyphs">ft</text>
<text x="214.70" y="292.65" font-size="5.6" fill="#1a1a1a" stroke="#1a1a1a" stroke-width="0.08" text-anchor="end" textLength="3.15" lengthAdjust="spacingAndGlyphs">4</text>
<text x="216.10" y="292.65" font-size="5.6" fill="#1a1a1a" stroke="#1a1a1a" stroke-width="0.08" textLength="4.69" lengthAdjust="spacingAndGlyphs">in</text>
<text x="231.30" y="292.65" font-size="5.6" fill="#1a1a1a" stroke="#1a1a1a" stroke-width="0.08" text-anchor="middle" textLength="2.69" lengthAdjust="spacingAndGlyphs">x</text>
<text x="267.60" y="292.65" font-size="5.6" fill="#1a1a1a" stroke="#1a1a1a" stroke-width="0.08" text-anchor="end" textLength="14.18" lengthAdjust="spacingAndGlyphs">10.00</text>
<text x="269.10" y="292.65" font-size="5.6" fill="#1a1a1a" stroke="#1a1a1a" stroke-width="0.08" textLength="3.98" lengthAdjust="spacingAndGlyphs">ft</text>
<text x="291.40" y="292.65" font-size="5.6" fill="#1a1a1a" stroke="#1a1a1a" stroke-width="0.08" textLength="4.69" lengthAdjust="spacingAndGlyphs">in</text>
<text x="299.70" y="292.65" font-size="5.6" fill="#1a1a1a" stroke="#1a1a1a" stroke-width="0.08" textLength="3.1" lengthAdjust="spacingAndGlyphs">=</text>
<text x="367.80" y="292.65" font-size="5.6" fill="#1a1a1a" stroke="#1a1a1a" stroke-width="0.08" font-weight="bold" text-anchor="end" textLength="23.28" lengthAdjust="spacingAndGlyphs">273.33 sf</text>
<path d="M305.40 284.70 l2.5 0 l-2.5 2.5z" fill="#1f7a1f"/>
<text x="88.60" y="300.85" font-size="5.6" fill="#9c7a4c" stroke="#9c7a4c" stroke-width="0.08" textLength="24.83" lengthAdjust="spacingAndGlyphs">West wall</text>
<text x="192.00" y="300.85" font-size="5.6" fill="#1a1a1a" stroke="#1a1a1a" stroke-width="0.08" text-anchor="end" textLength="14.18" lengthAdjust="spacingAndGlyphs">27.00</text>
<text x="193.60" y="300.85" font-size="5.6" fill="#1a1a1a" stroke="#1a1a1a" stroke-width="0.08" textLength="3.98" lengthAdjust="spacingAndGlyphs">ft</text>
<text x="214.70" y="300.85" font-size="5.6" fill="#1a1a1a" stroke="#1a1a1a" stroke-width="0.08" text-anchor="end" textLength="3.15" lengthAdjust="spacingAndGlyphs">4</text>
<text x="216.10" y="300.85" font-size="5.6" fill="#1a1a1a" stroke="#1a1a1a" stroke-width="0.08" textLength="4.69" lengthAdjust="spacingAndGlyphs">in</text>
<text x="231.30" y="300.85" font-size="5.6" fill="#1a1a1a" stroke="#1a1a1a" stroke-width="0.08" text-anchor="middle" textLength="2.69" lengthAdjust="spacingAndGlyphs">x</text>
<text x="267.60" y="300.85" font-size="5.6" fill="#1a1a1a" stroke="#1a1a1a" stroke-width="0.08" text-anchor="end" textLength="14.18" lengthAdjust="spacingAndGlyphs">10.00</text>
<text x="269.10" y="300.85" font-size="5.6" fill="#1a1a1a" stroke="#1a1a1a" stroke-width="0.08" textLength="3.98" lengthAdjust="spacingAndGlyphs">ft</text>
<text x="291.40" y="300.85" font-size="5.6" fill="#1a1a1a" stroke="#1a1a1a" stroke-width="0.08" textLength="4.69" lengthAdjust="spacingAndGlyphs">in</text>
<text x="299.70" y="300.85" font-size="5.6" fill="#1a1a1a" stroke="#1a1a1a" stroke-width="0.08" textLength="3.1" lengthAdjust="spacingAndGlyphs">=</text>
<text x="367.80" y="300.85" font-size="5.6" fill="#1a1a1a" stroke="#1a1a1a" stroke-width="0.08" font-weight="bold" text-anchor="end" textLength="23.28" lengthAdjust="spacingAndGlyphs">273.33 sf</text>
<path d="M305.40 294.80 l2.5 0 l-2.5 2.5z" fill="#1f7a1f"/>
<text x="88.60" y="309.45" font-size="5.6" fill="#9c7a4c" stroke="#9c7a4c" stroke-width="0.08" textLength="12.55" lengthAdjust="spacingAndGlyphs">Door</text>
<text x="192.00" y="309.45" font-size="5.6" fill="#1a1a1a" stroke="#1a1a1a" stroke-width="0.08" text-anchor="end" textLength="12.93" lengthAdjust="spacingAndGlyphs">-3.00</text>
<text x="193.60" y="309.45" font-size="5.6" fill="#1a1a1a" stroke="#1a1a1a" stroke-width="0.08" textLength="3.98" lengthAdjust="spacingAndGlyphs">ft</text>
<text x="216.10" y="309.45" font-size="5.6" fill="#1a1a1a" stroke="#1a1a1a" stroke-width="0.08" textLength="4.69" lengthAdjust="spacingAndGlyphs">in</text>
<text x="231.30" y="309.45" font-size="5.6" fill="#1a1a1a" stroke="#1a1a1a" stroke-width="0.08" text-anchor="middle" textLength="2.69" lengthAdjust="spacingAndGlyphs">x</text>
<text x="267.60" y="309.45" font-size="5.6" fill="#1a1a1a" stroke="#1a1a1a" stroke-width="0.08" text-anchor="end" textLength="11.03" lengthAdjust="spacingAndGlyphs">7.00</text>
<text x="269.10" y="309.45" font-size="5.6" fill="#1a1a1a" stroke="#1a1a1a" stroke-width="0.08" textLength="3.98" lengthAdjust="spacingAndGlyphs">ft</text>
<text x="291.40" y="309.45" font-size="5.6" fill="#1a1a1a" stroke="#1a1a1a" stroke-width="0.08" textLength="4.69" lengthAdjust="spacingAndGlyphs">in</text>
<text x="299.70" y="309.45" font-size="5.6" fill="#1a1a1a" stroke="#1a1a1a" stroke-width="0.08" textLength="3.1" lengthAdjust="spacingAndGlyphs">=</text>
<text x="367.80" y="309.45" font-size="5.6" fill="#1a1a1a" stroke="#1a1a1a" stroke-width="0.08" font-weight="bold" text-anchor="end" textLength="22.03" lengthAdjust="spacingAndGlyphs">-21.00 sf</text>
<path d="M305.40 303.00 l2.5 0 l-2.5 2.5z" fill="#1f7a1f"/>
<text x="88.60" y="318.15" font-size="5.6" fill="#9c7a4c" stroke="#9c7a4c" stroke-width="0.08" textLength="12.55" lengthAdjust="spacingAndGlyphs">Door</text>
<text x="192.00" y="318.15" font-size="5.6" fill="#1a1a1a" stroke="#1a1a1a" stroke-width="0.08" text-anchor="end" textLength="12.93" lengthAdjust="spacingAndGlyphs">-6.00</text>
<text x="193.60" y="318.15" font-size="5.6" fill="#1a1a1a" stroke="#1a1a1a" stroke-width="0.08" textLength="3.98" lengthAdjust="spacingAndGlyphs">ft</text>
<text x="216.10" y="318.15" font-size="5.6" fill="#1a1a1a" stroke="#1a1a1a" stroke-width="0.08" textLength="4.69" lengthAdjust="spacingAndGlyphs">in</text>
<text x="231.30" y="318.15" font-size="5.6" fill="#1a1a1a" stroke="#1a1a1a" stroke-width="0.08" text-anchor="middle" textLength="2.69" lengthAdjust="spacingAndGlyphs">x</text>
<text x="267.60" y="318.15" font-size="5.6" fill="#1a1a1a" stroke="#1a1a1a" stroke-width="0.08" text-anchor="end" textLength="11.03" lengthAdjust="spacingAndGlyphs">7.00</text>
<text x="269.10" y="318.15" font-size="5.6" fill="#1a1a1a" stroke="#1a1a1a" stroke-width="0.08" textLength="3.98" lengthAdjust="spacingAndGlyphs">ft</text>
<text x="291.40" y="318.15" font-size="5.6" fill="#1a1a1a" stroke="#1a1a1a" stroke-width="0.08" textLength="4.69" lengthAdjust="spacingAndGlyphs">in</text>
<text x="299.70" y="318.15" font-size="5.6" fill="#1a1a1a" stroke="#1a1a1a" stroke-width="0.08" textLength="3.1" lengthAdjust="spacingAndGlyphs">=</text>
<text x="367.80" y="318.15" font-size="5.6" fill="#1a1a1a" stroke="#1a1a1a" stroke-width="0.08" font-weight="bold" text-anchor="end" textLength="22.03" lengthAdjust="spacingAndGlyphs">-42.00 sf</text>
<path d="M305.40 311.60 l2.5 0 l-2.5 2.5z" fill="#1f7a1f"/>
<text x="88.60" y="326.35" font-size="5.6" fill="#9c7a4c" stroke="#9c7a4c" stroke-width="0.08" textLength="12.55" lengthAdjust="spacingAndGlyphs">Door</text>
<text x="192.00" y="326.35" font-size="5.6" fill="#1a1a1a" stroke="#1a1a1a" stroke-width="0.08" text-anchor="end" textLength="12.93" lengthAdjust="spacingAndGlyphs">-6.00</text>
<text x="193.60" y="326.35" font-size="5.6" fill="#1a1a1a" stroke="#1a1a1a" stroke-width="0.08" textLength="3.98" lengthAdjust="spacingAndGlyphs">ft</text>
<text x="216.10" y="326.35" font-size="5.6" fill="#1a1a1a" stroke="#1a1a1a" stroke-width="0.08" textLength="4.69" lengthAdjust="spacingAndGlyphs">in</text>
<text x="231.30" y="326.35" font-size="5.6" fill="#1a1a1a" stroke="#1a1a1a" stroke-width="0.08" text-anchor="middle" textLength="2.69" lengthAdjust="spacingAndGlyphs">x</text>
<text x="267.60" y="326.35" font-size="5.6" fill="#1a1a1a" stroke="#1a1a1a" stroke-width="0.08" text-anchor="end" textLength="11.03" lengthAdjust="spacingAndGlyphs">7.00</text>
<text x="269.10" y="326.35" font-size="5.6" fill="#1a1a1a" stroke="#1a1a1a" stroke-width="0.08" textLength="3.98" lengthAdjust="spacingAndGlyphs">ft</text>
<text x="291.40" y="326.35" font-size="5.6" fill="#1a1a1a" stroke="#1a1a1a" stroke-width="0.08" textLength="4.69" lengthAdjust="spacingAndGlyphs">in</text>
<text x="299.70" y="326.35" font-size="5.6" fill="#1a1a1a" stroke="#1a1a1a" stroke-width="0.08" textLength="3.1" lengthAdjust="spacingAndGlyphs">=</text>
<text x="367.80" y="326.35" font-size="5.6" fill="#1a1a1a" stroke="#1a1a1a" stroke-width="0.08" font-weight="bold" text-anchor="end" textLength="22.03" lengthAdjust="spacingAndGlyphs">-42.00 sf</text>
<path d="M305.40 320.30 l2.5 0 l-2.5 2.5z" fill="#1f7a1f"/>
<text x="193.60" y="334.55" font-size="5.6" fill="#1a1a1a" stroke="#1a1a1a" stroke-width="0.08" textLength="3.98" lengthAdjust="spacingAndGlyphs">ft</text>
<text x="216.10" y="334.55" font-size="5.6" fill="#1a1a1a" stroke="#1a1a1a" stroke-width="0.08" textLength="4.69" lengthAdjust="spacingAndGlyphs">in</text>
<text x="231.30" y="334.55" font-size="5.6" fill="#1a1a1a" stroke="#1a1a1a" stroke-width="0.08" text-anchor="middle" textLength="2.69" lengthAdjust="spacingAndGlyphs">x</text>
<text x="269.10" y="334.55" font-size="5.6" fill="#1a1a1a" stroke="#1a1a1a" stroke-width="0.08" textLength="3.98" lengthAdjust="spacingAndGlyphs">ft</text>
<text x="291.40" y="334.55" font-size="5.6" fill="#1a1a1a" stroke="#1a1a1a" stroke-width="0.08" textLength="4.69" lengthAdjust="spacingAndGlyphs">in</text>
<text x="299.70" y="334.55" font-size="5.6" fill="#1a1a1a" stroke="#1a1a1a" stroke-width="0.08" textLength="3.1" lengthAdjust="spacingAndGlyphs">=</text>
<text x="367.80" y="334.55" font-size="5.6" fill="#1a1a1a" stroke="#1a1a1a" stroke-width="0.08" font-weight="bold" text-anchor="end" textLength="16.97" lengthAdjust="spacingAndGlyphs">0.00 sf</text>
<path d="M305.40 328.50 l2.5 0 l-2.5 2.5z" fill="#1f7a1f"/>
<text x="12.20" y="342.45" font-size="5.6" fill="#1a1a1a" stroke="#1a1a1a" stroke-width="0.08" textLength="9.7" lengthAdjust="spacingAndGlyphs">Hall</text>
<text x="88.60" y="342.45" font-size="5.6" fill="#9c7a4c" stroke="#9c7a4c" stroke-width="0.08" textLength="26.5" lengthAdjust="spacingAndGlyphs">North wall</text>
<text x="192.00" y="342.45" font-size="5.6" fill="#1a1a1a" stroke="#1a1a1a" stroke-width="0.08" text-anchor="end" textLength="14.18" lengthAdjust="spacingAndGlyphs">35.00</text>
<text x="193.60" y="342.45" font-size="5.6" fill="#1a1a1a" stroke="#1a1a1a" stroke-width="0.08" textLength="3.98" lengthAdjust="spacingAndGlyphs">ft</text>
<text x="216.10" y="342.45" font-size="5.6" fill="#1a1a1a" stroke="#1a1a1a" stroke-width="0.08" textLength="4.69" lengthAdjust="spacingAndGlyphs">in</text>
<text x="231.30" y="342.45" font-size="5.6" fill="#1a1a1a" stroke="#1a1a1a" stroke-width="0.08" text-anchor="middle" textLength="2.69" lengthAdjust="spacingAndGlyphs">x</text>
<text x="267.60" y="342.45" font-size="5.6" fill="#1a1a1a" stroke="#1a1a1a" stroke-width="0.08" text-anchor="end" textLength="11.03" lengthAdjust="spacingAndGlyphs">8.00</text>
<text x="269.10" y="342.45" font-size="5.6" fill="#1a1a1a" stroke="#1a1a1a" stroke-width="0.08" textLength="3.98" lengthAdjust="spacingAndGlyphs">ft</text>
<text x="291.40" y="342.45" font-size="5.6" fill="#1a1a1a" stroke="#1a1a1a" stroke-width="0.08" textLength="4.69" lengthAdjust="spacingAndGlyphs">in</text>
<text x="299.70" y="342.45" font-size="5.6" fill="#1a1a1a" stroke="#1a1a1a" stroke-width="0.08" textLength="3.1" lengthAdjust="spacingAndGlyphs">=</text>
<text x="367.80" y="342.45" font-size="5.6" fill="#1a1a1a" stroke="#1a1a1a" stroke-width="0.08" font-weight="bold" text-anchor="end" textLength="23.28" lengthAdjust="spacingAndGlyphs">280.00 sf</text>
<path d="M305.40 336.70 l2.5 0 l-2.5 2.5z" fill="#1f7a1f"/>
<text x="88.60" y="350.75" font-size="5.6" fill="#9c7a4c" stroke="#9c7a4c" stroke-width="0.08" textLength="26.43" lengthAdjust="spacingAndGlyphs">South wall</text>
<text x="192.00" y="350.75" font-size="5.6" fill="#1a1a1a" stroke="#1a1a1a" stroke-width="0.08" text-anchor="end" textLength="14.18" lengthAdjust="spacingAndGlyphs">35.00</text>
<text x="193.60" y="350.75" font-size="5.6" fill="#1a1a1a" stroke="#1a1a1a" stroke-width="0.08" textLength="3.98" lengthAdjust="spacingAndGlyphs">ft</text>
<text x="216.10" y="350.75" font-size="5.6" fill="#1a1a1a" stroke="#1a1a1a" stroke-width="0.08" textLength="4.69" lengthAdjust="spacingAndGlyphs">in</text>
<text x="231.30" y="350.75" font-size="5.6" fill="#1a1a1a" stroke="#1a1a1a" stroke-width="0.08" text-anchor="middle" textLength="2.69" lengthAdjust="spacingAndGlyphs">x</text>
<text x="267.60" y="350.75" font-size="5.6" fill="#1a1a1a" stroke="#1a1a1a" stroke-width="0.08" text-anchor="end" textLength="11.03" lengthAdjust="spacingAndGlyphs">8.00</text>
<text x="269.10" y="350.75" font-size="5.6" fill="#1a1a1a" stroke="#1a1a1a" stroke-width="0.08" textLength="3.98" lengthAdjust="spacingAndGlyphs">ft</text>
<text x="291.40" y="350.75" font-size="5.6" fill="#1a1a1a" stroke="#1a1a1a" stroke-width="0.08" textLength="4.69" lengthAdjust="spacingAndGlyphs">in</text>
<text x="299.70" y="350.75" font-size="5.6" fill="#1a1a1a" stroke="#1a1a1a" stroke-width="0.08" textLength="3.1" lengthAdjust="spacingAndGlyphs">=</text>
<text x="367.80" y="350.75" font-size="5.6" fill="#1a1a1a" stroke="#1a1a1a" stroke-width="0.08" font-weight="bold" text-anchor="end" textLength="23.28" lengthAdjust="spacingAndGlyphs">280.00 sf</text>
<path d="M305.40 344.60 l2.5 0 l-2.5 2.5z" fill="#1f7a1f"/>
<text x="88.60" y="359.05" font-size="5.6" fill="#9c7a4c" stroke="#9c7a4c" stroke-width="0.08" textLength="22.21" lengthAdjust="spacingAndGlyphs">East wall</text>
<text x="192.00" y="359.05" font-size="5.6" fill="#1a1a1a" stroke="#1a1a1a" stroke-width="0.08" text-anchor="end" textLength="11.03" lengthAdjust="spacingAndGlyphs">3.00</text>
<text x="193.60" y="359.05" font-size="5.6" fill="#1a1a1a" stroke="#1a1a1a" stroke-width="0.08" textLength="3.98" lengthAdjust="spacingAndGlyphs">ft</text>
<text x="216.10" y="359.05" font-size="5.6" fill="#1a1a1a" stroke="#1a1a1a" stroke-width="0.08" textLength="4.69" lengthAdjust="spacingAndGlyphs">in</text>
<text x="231.30" y="359.05" font-size="5.6" fill="#1a1a1a" stroke="#1a1a1a" stroke-width="0.08" text-anchor="middle" textLength="2.69" lengthAdjust="spacingAndGlyphs">x</text>
<text x="267.60" y="359.05" font-size="5.6" fill="#1a1a1a" stroke="#1a1a1a" stroke-width="0.08" text-anchor="end" textLength="11.03" lengthAdjust="spacingAndGlyphs">8.00</text>
<text x="269.10" y="359.05" font-size="5.6" fill="#1a1a1a" stroke="#1a1a1a" stroke-width="0.08" textLength="3.98" lengthAdjust="spacingAndGlyphs">ft</text>
<text x="291.40" y="359.05" font-size="5.6" fill="#1a1a1a" stroke="#1a1a1a" stroke-width="0.08" textLength="4.69" lengthAdjust="spacingAndGlyphs">in</text>
<text x="299.70" y="359.05" font-size="5.6" fill="#1a1a1a" stroke="#1a1a1a" stroke-width="0.08" textLength="3.1" lengthAdjust="spacingAndGlyphs">=</text>
<text x="367.80" y="359.05" font-size="5.6" fill="#1a1a1a" stroke="#1a1a1a" stroke-width="0.08" font-weight="bold" text-anchor="end" textLength="20.13" lengthAdjust="spacingAndGlyphs">24.00 sf</text>
<path d="M305.40 352.90 l2.5 0 l-2.5 2.5z" fill="#1f7a1f"/>
<text x="88.60" y="366.75" font-size="5.6" fill="#9c7a4c" stroke="#9c7a4c" stroke-width="0.08" textLength="24.83" lengthAdjust="spacingAndGlyphs">West wall</text>
<text x="192.00" y="366.75" font-size="5.6" fill="#1a1a1a" stroke="#1a1a1a" stroke-width="0.08" text-anchor="end" textLength="11.03" lengthAdjust="spacingAndGlyphs">0.00</text>
<text x="193.60" y="366.75" font-size="5.6" fill="#1a1a1a" stroke="#1a1a1a" stroke-width="0.08" textLength="3.98" lengthAdjust="spacingAndGlyphs">ft</text>
<text x="216.10" y="366.75" font-size="5.6" fill="#1a1a1a" stroke="#1a1a1a" stroke-width="0.08" textLength="4.69" lengthAdjust="spacingAndGlyphs">in</text>
<text x="231.30" y="366.75" font-size="5.6" fill="#1a1a1a" stroke="#1a1a1a" stroke-width="0.08" text-anchor="middle" textLength="2.69" lengthAdjust="spacingAndGlyphs">x</text>
<text x="267.60" y="366.75" font-size="5.6" fill="#1a1a1a" stroke="#1a1a1a" stroke-width="0.08" text-anchor="end" textLength="11.03" lengthAdjust="spacingAndGlyphs">0.00</text>
<text x="269.10" y="366.75" font-size="5.6" fill="#1a1a1a" stroke="#1a1a1a" stroke-width="0.08" textLength="3.98" lengthAdjust="spacingAndGlyphs">ft</text>
<text x="291.40" y="366.75" font-size="5.6" fill="#1a1a1a" stroke="#1a1a1a" stroke-width="0.08" textLength="4.69" lengthAdjust="spacingAndGlyphs">in</text>
<text x="299.70" y="366.75" font-size="5.6" fill="#1a1a1a" stroke="#1a1a1a" stroke-width="0.08" textLength="3.1" lengthAdjust="spacingAndGlyphs">=</text>
<text x="367.80" y="366.75" font-size="5.6" fill="#1a1a1a" stroke="#1a1a1a" stroke-width="0.08" font-weight="bold" text-anchor="end" textLength="16.97" lengthAdjust="spacingAndGlyphs">0.00 sf</text>
<path d="M305.40 361.20 l2.5 0 l-2.5 2.5z" fill="#1f7a1f"/>
<text x="88.60" y="375.45" font-size="5.6" fill="#9c7a4c" stroke="#9c7a4c" stroke-width="0.08" textLength="12.55" lengthAdjust="spacingAndGlyphs">Door</text>
<text x="192.00" y="375.45" font-size="5.6" fill="#1a1a1a" stroke="#1a1a1a" stroke-width="0.08" text-anchor="end" textLength="12.93" lengthAdjust="spacingAndGlyphs">-3.00</text>
<text x="193.60" y="375.45" font-size="5.6" fill="#1a1a1a" stroke="#1a1a1a" stroke-width="0.08" textLength="3.98" lengthAdjust="spacingAndGlyphs">ft</text>
<text x="216.10" y="375.45" font-size="5.6" fill="#1a1a1a" stroke="#1a1a1a" stroke-width="0.08" textLength="4.69" lengthAdjust="spacingAndGlyphs">in</text>
<text x="231.30" y="375.45" font-size="5.6" fill="#1a1a1a" stroke="#1a1a1a" stroke-width="0.08" text-anchor="middle" textLength="2.69" lengthAdjust="spacingAndGlyphs">x</text>
<text x="267.60" y="375.45" font-size="5.6" fill="#1a1a1a" stroke="#1a1a1a" stroke-width="0.08" text-anchor="end" textLength="11.03" lengthAdjust="spacingAndGlyphs">7.00</text>
<text x="269.10" y="375.45" font-size="5.6" fill="#1a1a1a" stroke="#1a1a1a" stroke-width="0.08" textLength="3.98" lengthAdjust="spacingAndGlyphs">ft</text>
<text x="291.40" y="375.45" font-size="5.6" fill="#1a1a1a" stroke="#1a1a1a" stroke-width="0.08" textLength="4.69" lengthAdjust="spacingAndGlyphs">in</text>
<text x="299.70" y="375.45" font-size="5.6" fill="#1a1a1a" stroke="#1a1a1a" stroke-width="0.08" textLength="3.1" lengthAdjust="spacingAndGlyphs">=</text>
<text x="367.80" y="375.45" font-size="5.6" fill="#1a1a1a" stroke="#1a1a1a" stroke-width="0.08" font-weight="bold" text-anchor="end" textLength="22.03" lengthAdjust="spacingAndGlyphs">-21.00 sf</text>
<path d="M305.40 368.90 l2.5 0 l-2.5 2.5z" fill="#1f7a1f"/>
<text x="88.60" y="383.55" font-size="5.6" fill="#9c7a4c" stroke="#9c7a4c" stroke-width="0.08" textLength="12.55" lengthAdjust="spacingAndGlyphs">Door</text>
<text x="192.00" y="383.55" font-size="5.6" fill="#1a1a1a" stroke="#1a1a1a" stroke-width="0.08" text-anchor="end" textLength="12.93" lengthAdjust="spacingAndGlyphs">-3.00</text>
<text x="193.60" y="383.55" font-size="5.6" fill="#1a1a1a" stroke="#1a1a1a" stroke-width="0.08" textLength="3.98" lengthAdjust="spacingAndGlyphs">ft</text>
<text x="216.10" y="383.55" font-size="5.6" fill="#1a1a1a" stroke="#1a1a1a" stroke-width="0.08" textLength="4.69" lengthAdjust="spacingAndGlyphs">in</text>
<text x="231.30" y="383.55" font-size="5.6" fill="#1a1a1a" stroke="#1a1a1a" stroke-width="0.08" text-anchor="middle" textLength="2.69" lengthAdjust="spacingAndGlyphs">x</text>
<text x="267.60" y="383.55" font-size="5.6" fill="#1a1a1a" stroke="#1a1a1a" stroke-width="0.08" text-anchor="end" textLength="11.03" lengthAdjust="spacingAndGlyphs">7.00</text>
<text x="269.10" y="383.55" font-size="5.6" fill="#1a1a1a" stroke="#1a1a1a" stroke-width="0.08" textLength="3.98" lengthAdjust="spacingAndGlyphs">ft</text>
<text x="291.40" y="383.55" font-size="5.6" fill="#1a1a1a" stroke="#1a1a1a" stroke-width="0.08" textLength="4.69" lengthAdjust="spacingAndGlyphs">in</text>
<text x="299.70" y="383.55" font-size="5.6" fill="#1a1a1a" stroke="#1a1a1a" stroke-width="0.08" textLength="3.1" lengthAdjust="spacingAndGlyphs">=</text>
<text x="367.80" y="383.55" font-size="5.6" fill="#1a1a1a" stroke="#1a1a1a" stroke-width="0.08" font-weight="bold" text-anchor="end" textLength="22.03" lengthAdjust="spacingAndGlyphs">-21.00 sf</text>
<path d="M305.40 377.60 l2.5 0 l-2.5 2.5z" fill="#1f7a1f"/>
<text x="88.60" y="391.75" font-size="5.6" fill="#9c7a4c" stroke="#9c7a4c" stroke-width="0.08" textLength="12.55" lengthAdjust="spacingAndGlyphs">Door</text>
<text x="192.00" y="391.75" font-size="5.6" fill="#1a1a1a" stroke="#1a1a1a" stroke-width="0.08" text-anchor="end" textLength="12.93" lengthAdjust="spacingAndGlyphs">-3.00</text>
<text x="193.60" y="391.75" font-size="5.6" fill="#1a1a1a" stroke="#1a1a1a" stroke-width="0.08" textLength="3.98" lengthAdjust="spacingAndGlyphs">ft</text>
<text x="216.10" y="391.75" font-size="5.6" fill="#1a1a1a" stroke="#1a1a1a" stroke-width="0.08" textLength="4.69" lengthAdjust="spacingAndGlyphs">in</text>
<text x="231.30" y="391.75" font-size="5.6" fill="#1a1a1a" stroke="#1a1a1a" stroke-width="0.08" text-anchor="middle" textLength="2.69" lengthAdjust="spacingAndGlyphs">x</text>
<text x="267.60" y="391.75" font-size="5.6" fill="#1a1a1a" stroke="#1a1a1a" stroke-width="0.08" text-anchor="end" textLength="11.03" lengthAdjust="spacingAndGlyphs">7.00</text>
<text x="269.10" y="391.75" font-size="5.6" fill="#1a1a1a" stroke="#1a1a1a" stroke-width="0.08" textLength="3.98" lengthAdjust="spacingAndGlyphs">ft</text>
<text x="291.40" y="391.75" font-size="5.6" fill="#1a1a1a" stroke="#1a1a1a" stroke-width="0.08" textLength="4.69" lengthAdjust="spacingAndGlyphs">in</text>
<text x="299.70" y="391.75" font-size="5.6" fill="#1a1a1a" stroke="#1a1a1a" stroke-width="0.08" textLength="3.1" lengthAdjust="spacingAndGlyphs">=</text>
<text x="367.80" y="391.75" font-size="5.6" fill="#1a1a1a" stroke="#1a1a1a" stroke-width="0.08" font-weight="bold" text-anchor="end" textLength="22.03" lengthAdjust="spacingAndGlyphs">-21.00 sf</text>
<path d="M305.40 385.70 l2.5 0 l-2.5 2.5z" fill="#1f7a1f"/>
<text x="88.60" y="400.05" font-size="5.6" fill="#9c7a4c" stroke="#9c7a4c" stroke-width="0.08" textLength="12.55" lengthAdjust="spacingAndGlyphs">Door</text>
<text x="192.00" y="400.05" font-size="5.6" fill="#1a1a1a" stroke="#1a1a1a" stroke-width="0.08" text-anchor="end" textLength="12.93" lengthAdjust="spacingAndGlyphs">-3.00</text>
<text x="193.60" y="400.05" font-size="5.6" fill="#1a1a1a" stroke="#1a1a1a" stroke-width="0.08" textLength="3.98" lengthAdjust="spacingAndGlyphs">ft</text>
<text x="216.10" y="400.05" font-size="5.6" fill="#1a1a1a" stroke="#1a1a1a" stroke-width="0.08" textLength="4.69" lengthAdjust="spacingAndGlyphs">in</text>
<text x="231.30" y="400.05" font-size="5.6" fill="#1a1a1a" stroke="#1a1a1a" stroke-width="0.08" text-anchor="middle" textLength="2.69" lengthAdjust="spacingAndGlyphs">x</text>
<text x="267.60" y="400.05" font-size="5.6" fill="#1a1a1a" stroke="#1a1a1a" stroke-width="0.08" text-anchor="end" textLength="11.03" lengthAdjust="spacingAndGlyphs">7.00</text>
<text x="269.10" y="400.05" font-size="5.6" fill="#1a1a1a" stroke="#1a1a1a" stroke-width="0.08" textLength="3.98" lengthAdjust="spacingAndGlyphs">ft</text>
<text x="291.40" y="400.05" font-size="5.6" fill="#1a1a1a" stroke="#1a1a1a" stroke-width="0.08" textLength="4.69" lengthAdjust="spacingAndGlyphs">in</text>
<text x="299.70" y="400.05" font-size="5.6" fill="#1a1a1a" stroke="#1a1a1a" stroke-width="0.08" textLength="3.1" lengthAdjust="spacingAndGlyphs">=</text>
<text x="367.80" y="400.05" font-size="5.6" fill="#1a1a1a" stroke="#1a1a1a" stroke-width="0.08" font-weight="bold" text-anchor="end" textLength="22.03" lengthAdjust="spacingAndGlyphs">-21.00 sf</text>
<path d="M305.40 393.90 l2.5 0 l-2.5 2.5z" fill="#1f7a1f"/>
<text x="193.60" y="408.15" font-size="5.6" fill="#1a1a1a" stroke="#1a1a1a" stroke-width="0.08" textLength="3.98" lengthAdjust="spacingAndGlyphs">ft</text>
<text x="216.10" y="408.15" font-size="5.6" fill="#1a1a1a" stroke="#1a1a1a" stroke-width="0.08" textLength="4.69" lengthAdjust="spacingAndGlyphs">in</text>
<text x="231.30" y="408.15" font-size="5.6" fill="#1a1a1a" stroke="#1a1a1a" stroke-width="0.08" text-anchor="middle" textLength="2.69" lengthAdjust="spacingAndGlyphs">x</text>
<text x="269.10" y="408.15" font-size="5.6" fill="#1a1a1a" stroke="#1a1a1a" stroke-width="0.08" textLength="3.98" lengthAdjust="spacingAndGlyphs">ft</text>
<text x="291.40" y="408.15" font-size="5.6" fill="#1a1a1a" stroke="#1a1a1a" stroke-width="0.08" textLength="4.69" lengthAdjust="spacingAndGlyphs">in</text>
<text x="299.70" y="408.15" font-size="5.6" fill="#1a1a1a" stroke="#1a1a1a" stroke-width="0.08" textLength="3.1" lengthAdjust="spacingAndGlyphs">=</text>
<text x="367.80" y="408.15" font-size="5.6" fill="#1a1a1a" stroke="#1a1a1a" stroke-width="0.08" font-weight="bold" text-anchor="end" textLength="16.97" lengthAdjust="spacingAndGlyphs">0.00 sf</text>
<path d="M305.40 402.20 l2.5 0 l-2.5 2.5z" fill="#1f7a1f"/>
<text x="193.60" y="416.75" font-size="5.6" fill="#1a1a1a" stroke="#1a1a1a" stroke-width="0.08" textLength="3.98" lengthAdjust="spacingAndGlyphs">ft</text>
<text x="216.10" y="416.75" font-size="5.6" fill="#1a1a1a" stroke="#1a1a1a" stroke-width="0.08" textLength="4.69" lengthAdjust="spacingAndGlyphs">in</text>
<text x="231.30" y="416.75" font-size="5.6" fill="#1a1a1a" stroke="#1a1a1a" stroke-width="0.08" text-anchor="middle" textLength="2.69" lengthAdjust="spacingAndGlyphs">x</text>
<text x="269.10" y="416.75" font-size="5.6" fill="#1a1a1a" stroke="#1a1a1a" stroke-width="0.08" textLength="3.98" lengthAdjust="spacingAndGlyphs">ft</text>
<text x="291.40" y="416.75" font-size="5.6" fill="#1a1a1a" stroke="#1a1a1a" stroke-width="0.08" textLength="4.69" lengthAdjust="spacingAndGlyphs">in</text>
<text x="299.70" y="416.75" font-size="5.6" fill="#1a1a1a" stroke="#1a1a1a" stroke-width="0.08" textLength="3.1" lengthAdjust="spacingAndGlyphs">=</text>
<text x="367.80" y="416.75" font-size="5.6" fill="#1a1a1a" stroke="#1a1a1a" stroke-width="0.08" font-weight="bold" text-anchor="end" textLength="16.97" lengthAdjust="spacingAndGlyphs">0.00 sf</text>
<path d="M305.40 410.30 l2.5 0 l-2.5 2.5z" fill="#1f7a1f"/>
<text x="193.60" y="424.95" font-size="5.6" fill="#1a1a1a" stroke="#1a1a1a" stroke-width="0.08" textLength="3.98" lengthAdjust="spacingAndGlyphs">ft</text>
<text x="216.10" y="424.95" font-size="5.6" fill="#1a1a1a" stroke="#1a1a1a" stroke-width="0.08" textLength="4.69" lengthAdjust="spacingAndGlyphs">in</text>
<text x="231.30" y="424.95" font-size="5.6" fill="#1a1a1a" stroke="#1a1a1a" stroke-width="0.08" text-anchor="middle" textLength="2.69" lengthAdjust="spacingAndGlyphs">x</text>
<text x="269.10" y="424.95" font-size="5.6" fill="#1a1a1a" stroke="#1a1a1a" stroke-width="0.08" textLength="3.98" lengthAdjust="spacingAndGlyphs">ft</text>
<text x="291.40" y="424.95" font-size="5.6" fill="#1a1a1a" stroke="#1a1a1a" stroke-width="0.08" textLength="4.69" lengthAdjust="spacingAndGlyphs">in</text>
<text x="299.70" y="424.95" font-size="5.6" fill="#1a1a1a" stroke="#1a1a1a" stroke-width="0.08" textLength="3.1" lengthAdjust="spacingAndGlyphs">=</text>
<text x="367.80" y="424.95" font-size="5.6" fill="#1a1a1a" stroke="#1a1a1a" stroke-width="0.08" font-weight="bold" text-anchor="end" textLength="16.97" lengthAdjust="spacingAndGlyphs">0.00 sf</text>
<path d="M305.40 418.90 l2.5 0 l-2.5 2.5z" fill="#1f7a1f"/>
<text x="193.60" y="433.15" font-size="5.6" fill="#1a1a1a" stroke="#1a1a1a" stroke-width="0.08" textLength="3.98" lengthAdjust="spacingAndGlyphs">ft</text>
<text x="216.10" y="433.15" font-size="5.6" fill="#1a1a1a" stroke="#1a1a1a" stroke-width="0.08" textLength="4.69" lengthAdjust="spacingAndGlyphs">in</text>
<text x="231.30" y="433.15" font-size="5.6" fill="#1a1a1a" stroke="#1a1a1a" stroke-width="0.08" text-anchor="middle" textLength="2.69" lengthAdjust="spacingAndGlyphs">x</text>
<text x="269.10" y="433.15" font-size="5.6" fill="#1a1a1a" stroke="#1a1a1a" stroke-width="0.08" textLength="3.98" lengthAdjust="spacingAndGlyphs">ft</text>
<text x="291.40" y="433.15" font-size="5.6" fill="#1a1a1a" stroke="#1a1a1a" stroke-width="0.08" textLength="4.69" lengthAdjust="spacingAndGlyphs">in</text>
<text x="299.70" y="433.15" font-size="5.6" fill="#1a1a1a" stroke="#1a1a1a" stroke-width="0.08" textLength="3.1" lengthAdjust="spacingAndGlyphs">=</text>
<text x="367.80" y="433.15" font-size="5.6" fill="#1a1a1a" stroke="#1a1a1a" stroke-width="0.08" font-weight="bold" text-anchor="end" textLength="16.97" lengthAdjust="spacingAndGlyphs">0.00 sf</text>
<path d="M305.40 427.10 l2.5 0 l-2.5 2.5z" fill="#1f7a1f"/>
<text x="193.60" y="441.45" font-size="5.6" fill="#1a1a1a" stroke="#1a1a1a" stroke-width="0.08" textLength="3.98" lengthAdjust="spacingAndGlyphs">ft</text>
<text x="216.10" y="441.45" font-size="5.6" fill="#1a1a1a" stroke="#1a1a1a" stroke-width="0.08" textLength="4.69" lengthAdjust="spacingAndGlyphs">in</text>
<text x="231.30" y="441.45" font-size="5.6" fill="#1a1a1a" stroke="#1a1a1a" stroke-width="0.08" text-anchor="middle" textLength="2.69" lengthAdjust="spacingAndGlyphs">x</text>
<text x="269.10" y="441.45" font-size="5.6" fill="#1a1a1a" stroke="#1a1a1a" stroke-width="0.08" textLength="3.98" lengthAdjust="spacingAndGlyphs">ft</text>
<text x="291.40" y="441.45" font-size="5.6" fill="#1a1a1a" stroke="#1a1a1a" stroke-width="0.08" textLength="4.69" lengthAdjust="spacingAndGlyphs">in</text>
<text x="299.70" y="441.45" font-size="5.6" fill="#1a1a1a" stroke="#1a1a1a" stroke-width="0.08" textLength="3.1" lengthAdjust="spacingAndGlyphs">=</text>
<text x="367.80" y="441.45" font-size="5.6" fill="#1a1a1a" stroke="#1a1a1a" stroke-width="0.08" font-weight="bold" text-anchor="end" textLength="16.97" lengthAdjust="spacingAndGlyphs">0.00 sf</text>
<path d="M305.40 435.30 l2.5 0 l-2.5 2.5z" fill="#1f7a1f"/>
<text x="193.60" y="450.05" font-size="5.6" fill="#1a1a1a" stroke="#1a1a1a" stroke-width="0.08" textLength="3.98" lengthAdjust="spacingAndGlyphs">ft</text>
<text x="216.10" y="450.05" font-size="5.6" fill="#1a1a1a" stroke="#1a1a1a" stroke-width="0.08" textLength="4.69" lengthAdjust="spacingAndGlyphs">in</text>
<text x="231.30" y="450.05" font-size="5.6" fill="#1a1a1a" stroke="#1a1a1a" stroke-width="0.08" text-anchor="middle" textLength="2.69" lengthAdjust="spacingAndGlyphs">x</text>
<text x="269.10" y="450.05" font-size="5.6" fill="#1a1a1a" stroke="#1a1a1a" stroke-width="0.08" textLength="3.98" lengthAdjust="spacingAndGlyphs">ft</text>
<text x="291.40" y="450.05" font-size="5.6" fill="#1a1a1a" stroke="#1a1a1a" stroke-width="0.08" textLength="4.69" lengthAdjust="spacingAndGlyphs">in</text>
<text x="299.70" y="450.05" font-size="5.6" fill="#1a1a1a" stroke="#1a1a1a" stroke-width="0.08" textLength="3.1" lengthAdjust="spacingAndGlyphs">=</text>
<text x="367.80" y="450.05" font-size="5.6" fill="#1a1a1a" stroke="#1a1a1a" stroke-width="0.08" font-weight="bold" text-anchor="end" textLength="16.97" lengthAdjust="spacingAndGlyphs">0.00 sf</text>
<path d="M305.40 443.60 l2.5 0 l-2.5 2.5z" fill="#1f7a1f"/>
<text x="193.60" y="458.15" font-size="5.6" fill="#1a1a1a" stroke="#1a1a1a" stroke-width="0.08" textLength="3.98" lengthAdjust="spacingAndGlyphs">ft</text>
<text x="216.10" y="458.15" font-size="5.6" fill="#1a1a1a" stroke="#1a1a1a" stroke-width="0.08" textLength="4.69" lengthAdjust="spacingAndGlyphs">in</text>
<text x="231.30" y="458.15" font-size="5.6" fill="#1a1a1a" stroke="#1a1a1a" stroke-width="0.08" text-anchor="middle" textLength="2.69" lengthAdjust="spacingAndGlyphs">x</text>
<text x="269.10" y="458.15" font-size="5.6" fill="#1a1a1a" stroke="#1a1a1a" stroke-width="0.08" textLength="3.98" lengthAdjust="spacingAndGlyphs">ft</text>
<text x="291.40" y="458.15" font-size="5.6" fill="#1a1a1a" stroke="#1a1a1a" stroke-width="0.08" textLength="4.69" lengthAdjust="spacingAndGlyphs">in</text>
<text x="299.70" y="458.15" font-size="5.6" fill="#1a1a1a" stroke="#1a1a1a" stroke-width="0.08" textLength="3.1" lengthAdjust="spacingAndGlyphs">=</text>
<text x="367.80" y="458.15" font-size="5.6" fill="#1a1a1a" stroke="#1a1a1a" stroke-width="0.08" font-weight="bold" text-anchor="end" textLength="16.97" lengthAdjust="spacingAndGlyphs">0.00 sf</text>
<path d="M305.40 452.20 l2.5 0 l-2.5 2.5z" fill="#1f7a1f"/>
<text x="193.60" y="465.95" font-size="5.6" fill="#1a1a1a" stroke="#1a1a1a" stroke-width="0.08" textLength="3.98" lengthAdjust="spacingAndGlyphs">ft</text>
<text x="216.10" y="465.95" font-size="5.6" fill="#1a1a1a" stroke="#1a1a1a" stroke-width="0.08" textLength="4.69" lengthAdjust="spacingAndGlyphs">in</text>
<text x="231.30" y="465.95" font-size="5.6" fill="#1a1a1a" stroke="#1a1a1a" stroke-width="0.08" text-anchor="middle" textLength="2.69" lengthAdjust="spacingAndGlyphs">x</text>
<text x="269.10" y="465.95" font-size="5.6" fill="#1a1a1a" stroke="#1a1a1a" stroke-width="0.08" textLength="3.98" lengthAdjust="spacingAndGlyphs">ft</text>
<text x="291.40" y="465.95" font-size="5.6" fill="#1a1a1a" stroke="#1a1a1a" stroke-width="0.08" textLength="4.69" lengthAdjust="spacingAndGlyphs">in</text>
<text x="299.70" y="465.95" font-size="5.6" fill="#1a1a1a" stroke="#1a1a1a" stroke-width="0.08" textLength="3.1" lengthAdjust="spacingAndGlyphs">=</text>
<text x="367.80" y="465.95" font-size="5.6" fill="#1a1a1a" stroke="#1a1a1a" stroke-width="0.08" font-weight="bold" text-anchor="end" textLength="16.97" lengthAdjust="spacingAndGlyphs">0.00 sf</text>
<path d="M305.40 460.30 l2.5 0 l-2.5 2.5z" fill="#1f7a1f"/>
<text x="193.60" y="474.55" font-size="5.6" fill="#1a1a1a" stroke="#1a1a1a" stroke-width="0.08" textLength="3.98" lengthAdjust="spacingAndGlyphs">ft</text>
<text x="216.10" y="474.55" font-size="5.6" fill="#1a1a1a" stroke="#1a1a1a" stroke-width="0.08" textLength="4.69" lengthAdjust="spacingAndGlyphs">in</text>
<text x="231.30" y="474.55" font-size="5.6" fill="#1a1a1a" stroke="#1a1a1a" stroke-width="0.08" text-anchor="middle" textLength="2.69" lengthAdjust="spacingAndGlyphs">x</text>
<text x="269.10" y="474.55" font-size="5.6" fill="#1a1a1a" stroke="#1a1a1a" stroke-width="0.08" textLength="3.98" lengthAdjust="spacingAndGlyphs">ft</text>
<text x="291.40" y="474.55" font-size="5.6" fill="#1a1a1a" stroke="#1a1a1a" stroke-width="0.08" textLength="4.69" lengthAdjust="spacingAndGlyphs">in</text>
<text x="299.70" y="474.55" font-size="5.6" fill="#1a1a1a" stroke="#1a1a1a" stroke-width="0.08" textLength="3.1" lengthAdjust="spacingAndGlyphs">=</text>
<text x="367.80" y="474.55" font-size="5.6" fill="#1a1a1a" stroke="#1a1a1a" stroke-width="0.08" font-weight="bold" text-anchor="end" textLength="16.97" lengthAdjust="spacingAndGlyphs">0.00 sf</text>
<path d="M305.40 468.10 l2.5 0 l-2.5 2.5z" fill="#1f7a1f"/>
<text x="193.60" y="482.35" font-size="5.6" fill="#1a1a1a" stroke="#1a1a1a" stroke-width="0.08" textLength="3.98" lengthAdjust="spacingAndGlyphs">ft</text>
<text x="216.10" y="482.35" font-size="5.6" fill="#1a1a1a" stroke="#1a1a1a" stroke-width="0.08" textLength="4.69" lengthAdjust="spacingAndGlyphs">in</text>
<text x="231.30" y="482.35" font-size="5.6" fill="#1a1a1a" stroke="#1a1a1a" stroke-width="0.08" text-anchor="middle" textLength="2.69" lengthAdjust="spacingAndGlyphs">x</text>
<text x="269.10" y="482.35" font-size="5.6" fill="#1a1a1a" stroke="#1a1a1a" stroke-width="0.08" textLength="3.98" lengthAdjust="spacingAndGlyphs">ft</text>
<text x="291.40" y="482.35" font-size="5.6" fill="#1a1a1a" stroke="#1a1a1a" stroke-width="0.08" textLength="4.69" lengthAdjust="spacingAndGlyphs">in</text>
<text x="299.70" y="482.35" font-size="5.6" fill="#1a1a1a" stroke="#1a1a1a" stroke-width="0.08" textLength="3.1" lengthAdjust="spacingAndGlyphs">=</text>
<text x="367.80" y="482.35" font-size="5.6" fill="#1a1a1a" stroke="#1a1a1a" stroke-width="0.08" font-weight="bold" text-anchor="end" textLength="16.97" lengthAdjust="spacingAndGlyphs">0.00 sf</text>
<path d="M305.40 476.70 l2.5 0 l-2.5 2.5z" fill="#1f7a1f"/>
<text x="193.60" y="490.45" font-size="5.6" fill="#1a1a1a" stroke="#1a1a1a" stroke-width="0.08" textLength="3.98" lengthAdjust="spacingAndGlyphs">ft</text>
<text x="216.10" y="490.45" font-size="5.6" fill="#1a1a1a" stroke="#1a1a1a" stroke-width="0.08" textLength="4.69" lengthAdjust="spacingAndGlyphs">in</text>
<text x="231.30" y="490.45" font-size="5.6" fill="#1a1a1a" stroke="#1a1a1a" stroke-width="0.08" text-anchor="middle" textLength="2.69" lengthAdjust="spacingAndGlyphs">x</text>
<text x="269.10" y="490.45" font-size="5.6" fill="#1a1a1a" stroke="#1a1a1a" stroke-width="0.08" textLength="3.98" lengthAdjust="spacingAndGlyphs">ft</text>
<text x="291.40" y="490.45" font-size="5.6" fill="#1a1a1a" stroke="#1a1a1a" stroke-width="0.08" textLength="4.69" lengthAdjust="spacingAndGlyphs">in</text>
<text x="299.70" y="490.45" font-size="5.6" fill="#1a1a1a" stroke="#1a1a1a" stroke-width="0.08" textLength="3.1" lengthAdjust="spacingAndGlyphs">=</text>
<text x="367.80" y="490.45" font-size="5.6" fill="#1a1a1a" stroke="#1a1a1a" stroke-width="0.08" font-weight="bold" text-anchor="end" textLength="16.97" lengthAdjust="spacingAndGlyphs">0.00 sf</text>
<path d="M305.40 484.50 l2.5 0 l-2.5 2.5z" fill="#1f7a1f"/>
<text x="193.60" y="498.65" font-size="5.6" fill="#1a1a1a" stroke="#1a1a1a" stroke-width="0.08" textLength="3.98" lengthAdjust="spacingAndGlyphs">ft</text>
<text x="216.10" y="498.65" font-size="5.6" fill="#1a1a1a" stroke="#1a1a1a" stroke-width="0.08" textLength="4.69" lengthAdjust="spacingAndGlyphs">in</text>
<text x="231.30" y="498.65" font-size="5.6" fill="#1a1a1a" stroke="#1a1a1a" stroke-width="0.08" text-anchor="middle" textLength="2.69" lengthAdjust="spacingAndGlyphs">x</text>
<text x="269.10" y="498.65" font-size="5.6" fill="#1a1a1a" stroke="#1a1a1a" stroke-width="0.08" textLength="3.98" lengthAdjust="spacingAndGlyphs">ft</text>
<text x="291.40" y="498.65" font-size="5.6" fill="#1a1a1a" stroke="#1a1a1a" stroke-width="0.08" textLength="4.69" lengthAdjust="spacingAndGlyphs">in</text>
<text x="299.70" y="498.65" font-size="5.6" fill="#1a1a1a" stroke="#1a1a1a" stroke-width="0.08" textLength="3.1" lengthAdjust="spacingAndGlyphs">=</text>
<text x="367.80" y="498.65" font-size="5.6" fill="#1a1a1a" stroke="#1a1a1a" stroke-width="0.08" font-weight="bold" text-anchor="end" textLength="16.97" lengthAdjust="spacingAndGlyphs">0.00 sf</text>
<path d="M305.40 492.60 l2.5 0 l-2.5 2.5z" fill="#1f7a1f"/>
<text x="193.60" y="506.95" font-size="5.6" fill="#1a1a1a" stroke="#1a1a1a" stroke-width="0.08" textLength="3.98" lengthAdjust="spacingAndGlyphs">ft</text>
<text x="216.10" y="506.95" font-size="5.6" fill="#1a1a1a" stroke="#1a1a1a" stroke-width="0.08" textLength="4.69" lengthAdjust="spacingAndGlyphs">in</text>
<text x="231.30" y="506.95" font-size="5.6" fill="#1a1a1a" stroke="#1a1a1a" stroke-width="0.08" text-anchor="middle" textLength="2.69" lengthAdjust="spacingAndGlyphs">x</text>
<text x="269.10" y="506.95" font-size="5.6" fill="#1a1a1a" stroke="#1a1a1a" stroke-width="0.08" textLength="3.98" lengthAdjust="spacingAndGlyphs">ft</text>
<text x="291.40" y="506.95" font-size="5.6" fill="#1a1a1a" stroke="#1a1a1a" stroke-width="0.08" textLength="4.69" lengthAdjust="spacingAndGlyphs">in</text>
<text x="299.70" y="506.95" font-size="5.6" fill="#1a1a1a" stroke="#1a1a1a" stroke-width="0.08" textLength="3.1" lengthAdjust="spacingAndGlyphs">=</text>
<text x="367.80" y="506.95" font-size="5.6" fill="#1a1a1a" stroke="#1a1a1a" stroke-width="0.08" font-weight="bold" text-anchor="end" textLength="16.97" lengthAdjust="spacingAndGlyphs">0.00 sf</text>
<path d="M305.40 500.80 l2.5 0 l-2.5 2.5z" fill="#1f7a1f"/>
<text x="193.60" y="515.05" font-size="5.6" fill="#1a1a1a" stroke="#1a1a1a" stroke-width="0.08" textLength="3.98" lengthAdjust="spacingAndGlyphs">ft</text>
<text x="216.10" y="515.05" font-size="5.6" fill="#1a1a1a" stroke="#1a1a1a" stroke-width="0.08" textLength="4.69" lengthAdjust="spacingAndGlyphs">in</text>
<text x="231.30" y="515.05" font-size="5.6" fill="#1a1a1a" stroke="#1a1a1a" stroke-width="0.08" text-anchor="middle" textLength="2.69" lengthAdjust="spacingAndGlyphs">x</text>
<text x="269.10" y="515.05" font-size="5.6" fill="#1a1a1a" stroke="#1a1a1a" stroke-width="0.08" textLength="3.98" lengthAdjust="spacingAndGlyphs">ft</text>
<text x="291.40" y="515.05" font-size="5.6" fill="#1a1a1a" stroke="#1a1a1a" stroke-width="0.08" textLength="4.69" lengthAdjust="spacingAndGlyphs">in</text>
<text x="299.70" y="515.05" font-size="5.6" fill="#1a1a1a" stroke="#1a1a1a" stroke-width="0.08" textLength="3.1" lengthAdjust="spacingAndGlyphs">=</text>
<text x="367.80" y="515.05" font-size="5.6" fill="#1a1a1a" stroke="#1a1a1a" stroke-width="0.08" font-weight="bold" text-anchor="end" textLength="16.97" lengthAdjust="spacingAndGlyphs">0.00 sf</text>
<path d="M305.40 509.10 l2.5 0 l-2.5 2.5z" fill="#1f7a1f"/>
<text x="193.60" y="523.15" font-size="5.6" fill="#1a1a1a" stroke="#1a1a1a" stroke-width="0.08" textLength="3.98" lengthAdjust="spacingAndGlyphs">ft</text>
<text x="216.10" y="523.15" font-size="5.6" fill="#1a1a1a" stroke="#1a1a1a" stroke-width="0.08" textLength="4.69" lengthAdjust="spacingAndGlyphs">in</text>
<text x="231.30" y="523.15" font-size="5.6" fill="#1a1a1a" stroke="#1a1a1a" stroke-width="0.08" text-anchor="middle" textLength="2.69" lengthAdjust="spacingAndGlyphs">x</text>
<text x="269.10" y="523.15" font-size="5.6" fill="#1a1a1a" stroke="#1a1a1a" stroke-width="0.08" textLength="3.98" lengthAdjust="spacingAndGlyphs">ft</text>
<text x="291.40" y="523.15" font-size="5.6" fill="#1a1a1a" stroke="#1a1a1a" stroke-width="0.08" textLength="4.69" lengthAdjust="spacingAndGlyphs">in</text>
<text x="299.70" y="523.15" font-size="5.6" fill="#1a1a1a" stroke="#1a1a1a" stroke-width="0.08" textLength="3.1" lengthAdjust="spacingAndGlyphs">=</text>
<text x="367.80" y="523.15" font-size="5.6" fill="#1a1a1a" stroke="#1a1a1a" stroke-width="0.08" font-weight="bold" text-anchor="end" textLength="16.97" lengthAdjust="spacingAndGlyphs">0.00 sf</text>
<path d="M305.40 517.20 l2.5 0 l-2.5 2.5z" fill="#1f7a1f"/>
<text x="193.60" y="531.45" font-size="5.6" fill="#1a1a1a" stroke="#1a1a1a" stroke-width="0.08" textLength="3.98" lengthAdjust="spacingAndGlyphs">ft</text>
<text x="216.10" y="531.45" font-size="5.6" fill="#1a1a1a" stroke="#1a1a1a" stroke-width="0.08" textLength="4.69" lengthAdjust="spacingAndGlyphs">in</text>
<text x="231.30" y="531.45" font-size="5.6" fill="#1a1a1a" stroke="#1a1a1a" stroke-width="0.08" text-anchor="middle" textLength="2.69" lengthAdjust="spacingAndGlyphs">x</text>
<text x="269.10" y="531.45" font-size="5.6" fill="#1a1a1a" stroke="#1a1a1a" stroke-width="0.08" textLength="3.98" lengthAdjust="spacingAndGlyphs">ft</text>
<text x="291.40" y="531.45" font-size="5.6" fill="#1a1a1a" stroke="#1a1a1a" stroke-width="0.08" textLength="4.69" lengthAdjust="spacingAndGlyphs">in</text>
<text x="299.70" y="531.45" font-size="5.6" fill="#1a1a1a" stroke="#1a1a1a" stroke-width="0.08" textLength="3.1" lengthAdjust="spacingAndGlyphs">=</text>
<text x="367.80" y="531.45" font-size="5.6" fill="#1a1a1a" stroke="#1a1a1a" stroke-width="0.08" font-weight="bold" text-anchor="end" textLength="16.97" lengthAdjust="spacingAndGlyphs">0.00 sf</text>
<path d="M305.40 525.30 l2.5 0 l-2.5 2.5z" fill="#1f7a1f"/>
<text x="193.60" y="539.35" font-size="5.6" fill="#1a1a1a" stroke="#1a1a1a" stroke-width="0.08" textLength="3.98" lengthAdjust="spacingAndGlyphs">ft</text>
<text x="216.10" y="539.35" font-size="5.6" fill="#1a1a1a" stroke="#1a1a1a" stroke-width="0.08" textLength="4.69" lengthAdjust="spacingAndGlyphs">in</text>
<text x="231.30" y="539.35" font-size="5.6" fill="#1a1a1a" stroke="#1a1a1a" stroke-width="0.08" text-anchor="middle" textLength="2.69" lengthAdjust="spacingAndGlyphs">x</text>
<text x="269.10" y="539.35" font-size="5.6" fill="#1a1a1a" stroke="#1a1a1a" stroke-width="0.08" textLength="3.98" lengthAdjust="spacingAndGlyphs">ft</text>
<text x="291.40" y="539.35" font-size="5.6" fill="#1a1a1a" stroke="#1a1a1a" stroke-width="0.08" textLength="4.69" lengthAdjust="spacingAndGlyphs">in</text>
<text x="299.70" y="539.35" font-size="5.6" fill="#1a1a1a" stroke="#1a1a1a" stroke-width="0.08" textLength="3.1" lengthAdjust="spacingAndGlyphs">=</text>
<text x="367.80" y="539.35" font-size="5.6" fill="#1a1a1a" stroke="#1a1a1a" stroke-width="0.08" font-weight="bold" text-anchor="end" textLength="16.97" lengthAdjust="spacingAndGlyphs">0.00 sf</text>
<path d="M305.40 533.60 l2.5 0 l-2.5 2.5z" fill="#1f7a1f"/>
<rect x="406.30" y="162.10" width="33.00" height="8.20" fill="#ddd9c4" />
<rect x="406.30" y="162.10" width="33.00" height="8.20" fill="none" stroke="#4d4d3d" stroke-width="1.0"/>
<text x="407.50" y="168.50" font-size="5.6" fill="#1a1a1a" stroke="#1a1a1a" stroke-width="0.08" font-weight="bold" textLength="23.89" lengthAdjust="spacingAndGlyphs">Formulas</text>
<text x="440.30" y="168.90" font-size="5.6" fill="#d42a2a" stroke="#d42a2a" stroke-width="0.08" textLength="135.41" lengthAdjust="spacingAndGlyphs">you can change the coverage amounts here if needed</text>
<rect x="406.30" y="170.30" width="33.00" height="10.70" fill="#c4d79b" />
<rect x="439.30" y="170.30" width="28.70" height="10.70" fill="#fdfde8" />
<rect x="468.00" y="170.30" width="28.50" height="10.70" fill="#ebf1de" />
<rect x="496.50" y="170.30" width="43.30" height="10.70" fill="#fdfde8" />
<rect x="539.80" y="170.30" width="32.90" height="10.70" fill="#ebf1de" />
<rect x="572.70" y="170.30" width="33.80" height="10.70" fill="#fdfde8" />
<rect x="606.50" y="170.30" width="27.80" height="10.70" fill="#ebf1de" />
<text x="407.50" y="179.10" font-size="5.6" fill="#1a1a1a" stroke="#1a1a1a" stroke-width="0.08" font-weight="bold" textLength="17.44" lengthAdjust="spacingAndGlyphs">Primer</text>
<text x="464.60" y="179.10" font-size="5.6" fill="#1a1a1a" stroke="#1a1a1a" stroke-width="0.08" text-anchor="end" textLength="6.31" lengthAdjust="spacingAndGlyphs">63</text>
<text x="470.80" y="179.10" font-size="5.6" fill="#1a1a1a" stroke="#1a1a1a" stroke-width="0.08" textLength="12.08" lengthAdjust="spacingAndGlyphs">sf/qt</text>
<text x="537.40" y="179.10" font-size="5.6" fill="#1a1a1a" stroke="#1a1a1a" stroke-width="0.08" text-anchor="end" textLength="9.46" lengthAdjust="spacingAndGlyphs">250</text>
<text x="542.00" y="179.10" font-size="5.6" fill="#1a1a1a" stroke="#1a1a1a" stroke-width="0.08" textLength="14.06" lengthAdjust="spacingAndGlyphs">sf/gal</text>
<text x="604.50" y="179.10" font-size="5.6" fill="#1a1a1a" stroke="#1a1a1a" stroke-width="0.08" text-anchor="end" textLength="12.61" lengthAdjust="spacingAndGlyphs">1800</text>
<text x="609.10" y="179.10" font-size="5.6" fill="#1a1a1a" stroke="#1a1a1a" stroke-width="0.08" textLength="18.62" lengthAdjust="spacingAndGlyphs">sf/5 gal</text>
<rect x="406.30" y="181.00" width="33.00" height="7.90" fill="#c4d79b" />
<rect x="439.30" y="181.00" width="28.70" height="7.90" fill="#fdfde8" />
<rect x="468.00" y="181.00" width="28.50" height="7.90" fill="#ebf1de" />
<rect x="496.50" y="181.00" width="43.30" height="7.90" fill="#fdfde8" />
<rect x="539.80" y="181.00" width="32.90" height="7.90" fill="#ebf1de" />
<rect x="572.70" y="181.00" width="33.80" height="7.90" fill="#fdfde8" />
<rect x="606.50" y="181.00" width="27.80" height="7.90" fill="#ebf1de" />
<text x="407.50" y="187.00" font-size="5.6" fill="#1a1a1a" stroke="#1a1a1a" stroke-width="0.08" font-weight="bold" textLength="13.41" lengthAdjust="spacingAndGlyphs">Paint</text>
<text x="464.60" y="187.00" font-size="5.6" fill="#1a1a1a" stroke="#1a1a1a" stroke-width="0.08" text-anchor="end" textLength="9.46" lengthAdjust="spacingAndGlyphs">100</text>
<text x="470.80" y="187.00" font-size="5.6" fill="#1a1a1a" stroke="#1a1a1a" stroke-width="0.08" textLength="12.08" lengthAdjust="spacingAndGlyphs">sf/qt</text>
<text x="537.40" y="187.00" font-size="5.6" fill="#1a1a1a" stroke="#1a1a1a" stroke-width="0.08" text-anchor="end" textLength="9.46" lengthAdjust="spacingAndGlyphs">400</text>
<text x="542.00" y="187.00" font-size="5.6" fill="#1a1a1a" stroke="#1a1a1a" stroke-width="0.08" textLength="14.06" lengthAdjust="spacingAndGlyphs">sf/gal</text>
<text x="604.50" y="187.00" font-size="5.6" fill="#1a1a1a" stroke="#1a1a1a" stroke-width="0.08" text-anchor="end" textLength="12.61" lengthAdjust="spacingAndGlyphs">2000</text>
<text x="609.10" y="187.00" font-size="5.6" fill="#1a1a1a" stroke="#1a1a1a" stroke-width="0.08" textLength="18.62" lengthAdjust="spacingAndGlyphs">sf/5 gal</text>
<line x1="406.30" y1="181.00" x2="634.30" y2="181.00" stroke="#777" stroke-width="0.6" />
<line x1="439.30" y1="170.30" x2="439.30" y2="188.90" stroke="#4d4d3d" stroke-width="1.0" />
<line x1="496.50" y1="170.30" x2="496.50" y2="188.90" stroke="#4d4d3d" stroke-width="1.0" />
<line x1="572.70" y1="170.30" x2="572.70" y2="188.90" stroke="#4d4d3d" stroke-width="1.0" />
<rect x="406.30" y="170.30" width="228.00" height="18.60" fill="none" stroke="#4d4d3d" stroke-width="1.1"/>
<rect x="406.30" y="197.40" width="33.00" height="8.20" fill="#ddd9c4" />
<rect x="406.30" y="197.40" width="33.00" height="8.20" fill="none" stroke="#4d4d3d" stroke-width="1.0"/>
<text x="407.50" y="203.80" font-size="5.6" fill="#1a1a1a" stroke="#1a1a1a" stroke-width="0.08" font-weight="bold" textLength="22.14" lengthAdjust="spacingAndGlyphs">Material</text>
<text x="440.30" y="204.20" font-size="5.6" fill="#d42a2a" stroke="#d42a2a" stroke-width="0.08" textLength="117.12" lengthAdjust="spacingAndGlyphs">enter the price of your preferred product here</text>
<rect x="406.30" y="205.60" width="33.00" height="7.90" fill="#c4d79b" />
<rect x="439.30" y="205.60" width="195.00" height="7.90" fill="#ebf1de" />
<text x="407.50" y="211.60" font-size="5.6" fill="#1a1a1a" stroke="#1a1a1a" stroke-width="0.08" font-weight="bold" textLength="17.44" lengthAdjust="spacingAndGlyphs">Primer</text>
<text x="446.70" y="211.60" font-size="5.6" fill="#1a1a1a" stroke="#1a1a1a" stroke-width="0.08" textLength="19.85" lengthAdjust="spacingAndGlyphs">$ per qt</text>
<text x="470.60" y="211.60" font-size="5.6" fill="#1a1a1a" stroke="#1a1a1a" stroke-width="0.08" textLength="3.15" lengthAdjust="spacingAndGlyphs">$</text>
<text x="492.80" y="211.60" font-size="5.6" fill="#1a1a1a" stroke="#1a1a1a" stroke-width="0.08" text-anchor="end" textLength="11.03" lengthAdjust="spacingAndGlyphs">6.21</text>
<text x="515.00" y="211.60" font-size="5.6" fill="#1a1a1a" stroke="#1a1a1a" stroke-width="0.08" textLength="21.83" lengthAdjust="spacingAndGlyphs">$ per gal</text>
<text x="543.00" y="211.60" font-size="5.6" fill="#1a1a1a" stroke="#1a1a1a" stroke-width="0.08" textLength="3.15" lengthAdjust="spacingAndGlyphs">$</text>
<text x="569.80" y="211.60" font-size="5.6" fill="#1a1a1a" stroke="#1a1a1a" stroke-width="0.08" text-anchor="end" textLength="14.18" lengthAdjust="spacingAndGlyphs">14.98</text>
<text x="579.00" y="211.60" font-size="5.6" fill="#1a1a1a" stroke="#1a1a1a" stroke-width="0.08" textLength="26.39" lengthAdjust="spacingAndGlyphs">$ per 5 gal</text>
<text x="609.00" y="211.60" font-size="5.6" fill="#1a1a1a" stroke="#1a1a1a" stroke-width="0.08" textLength="3.15" lengthAdjust="spacingAndGlyphs">$</text>
<text x="631.60" y="211.60" font-size="5.6" fill="#1a1a1a" stroke="#1a1a1a" stroke-width="0.08" text-anchor="end" textLength="14.18" lengthAdjust="spacingAndGlyphs">68.00</text>
<rect x="406.30" y="213.50" width="33.00" height="8.20" fill="#c4d79b" />
<rect x="439.30" y="213.50" width="195.00" height="8.20" fill="#ebf1de" />
<text x="407.50" y="219.80" font-size="5.6" fill="#1a1a1a" stroke="#1a1a1a" stroke-width="0.08" font-weight="bold" textLength="13.41" lengthAdjust="spacingAndGlyphs">Paint</text>
<text x="446.70" y="219.80" font-size="5.6" fill="#1a1a1a" stroke="#1a1a1a" stroke-width="0.08" textLength="19.85" lengthAdjust="spacingAndGlyphs">$ per qt</text>
<text x="470.60" y="219.80" font-size="5.6" fill="#1a1a1a" stroke="#1a1a1a" stroke-width="0.08" textLength="3.15" lengthAdjust="spacingAndGlyphs">$</text>
<text x="492.80" y="219.80" font-size="5.6" fill="#1a1a1a" stroke="#1a1a1a" stroke-width="0.08" text-anchor="end" textLength="14.18" lengthAdjust="spacingAndGlyphs">10.98</text>
<text x="515.00" y="219.80" font-size="5.6" fill="#1a1a1a" stroke="#1a1a1a" stroke-width="0.08" textLength="21.83" lengthAdjust="spacingAndGlyphs">$ per gal</text>
<text x="543.00" y="219.80" font-size="5.6" fill="#1a1a1a" stroke="#1a1a1a" stroke-width="0.08" textLength="3.15" lengthAdjust="spacingAndGlyphs">$</text>
<text x="569.80" y="219.80" font-size="5.6" fill="#1a1a1a" stroke="#1a1a1a" stroke-width="0.08" text-anchor="end" textLength="14.18" lengthAdjust="spacingAndGlyphs">21.98</text>
<text x="579.00" y="219.80" font-size="5.6" fill="#1a1a1a" stroke="#1a1a1a" stroke-width="0.08" textLength="26.39" lengthAdjust="spacingAndGlyphs">$ per 5 gal</text>
<text x="609.00" y="219.80" font-size="5.6" fill="#1a1a1a" stroke="#1a1a1a" stroke-width="0.08" textLength="3.15" lengthAdjust="spacingAndGlyphs">$</text>
<text x="631.60" y="219.80" font-size="5.6" fill="#1a1a1a" stroke="#1a1a1a" stroke-width="0.08" text-anchor="end" textLength="17.34" lengthAdjust="spacingAndGlyphs">104.00</text>
<line x1="406.30" y1="213.50" x2="634.30" y2="213.50" stroke="#777" stroke-width="0.6" />
<line x1="439.30" y1="205.60" x2="439.30" y2="221.70" stroke="#4d4d3d" stroke-width="1.0" />
<line x1="496.50" y1="205.60" x2="496.50" y2="221.70" stroke="#4d4d3d" stroke-width="1.0" />
<line x1="572.70" y1="205.60" x2="572.70" y2="221.70" stroke="#4d4d3d" stroke-width="1.0" />
<rect x="406.30" y="205.60" width="228.00" height="16.10" fill="none" stroke="#4d4d3d" stroke-width="1.1"/>
<rect x="406.30" y="240.10" width="33.00" height="9.00" fill="#ddd9c4" />
<rect x="406.30" y="240.10" width="33.00" height="9.00" fill="none" stroke="#4d4d3d" stroke-width="1.0"/>
<text x="407.50" y="247.30" font-size="5.6" fill="#1a1a1a" stroke="#1a1a1a" stroke-width="0.08" font-weight="bold" textLength="17.44" lengthAdjust="spacingAndGlyphs">Primer</text>
<rect x="439.30" y="249.10" width="100.50" height="8.30" fill="#ebf1de" />
<rect x="539.80" y="249.10" width="11.70" height="8.30" fill="#fdfde8" />
<text x="466.80" y="255.50" font-size="5.6" fill="#1a1a1a" stroke="#1a1a1a" stroke-width="0.08" text-anchor="end" textLength="6.31" lengthAdjust="spacingAndGlyphs">34</text>
<text x="468.60" y="255.50" font-size="5.6" fill="#1a1a1a" stroke="#1a1a1a" stroke-width="0.08" textLength="17.12" lengthAdjust="spacingAndGlyphs">Quarts</text>
<text x="499.00" y="255.50" font-size="5.6" fill="#1a1a1a" stroke="#1a1a1a" stroke-width="0.08" textLength="3.15" lengthAdjust="spacingAndGlyphs">$</text>
<text x="537.20" y="255.50" font-size="5.6" fill="#1a1a1a" stroke="#1a1a1a" stroke-width="0.08" text-anchor="end" textLength="17.34" lengthAdjust="spacingAndGlyphs">211.14</text>
<path d="M439.70 249.60 l2.6 0 l-2.6 2.6z" fill="#1f7a1f"/>
<path d="M496.90 249.60 l2.6 0 l-2.6 2.6z" fill="#1f7a1f"/>
<line x1="439.30" y1="257.40" x2="551.50" y2="257.40" stroke="#8a8a80" stroke-width="0.6" />
<rect x="439.30" y="257.40" width="100.50" height="9.80" fill="#ebf1de" />
<rect x="539.80" y="257.40" width="11.70" height="9.80" fill="#fdfde8" />
<text x="466.80" y="265.30" font-size="5.6" fill="#1a1a1a" stroke="#1a1a1a" stroke-width="0.08" text-anchor="end" textLength="3.15" lengthAdjust="spacingAndGlyphs">9</text>
<text x="468.60" y="265.30" font-size="5.6" fill="#1a1a1a" stroke="#1a1a1a" stroke-width="0.08" textLength="18.73" lengthAdjust="spacingAndGlyphs">Gallons</text>
<text x="499.00" y="265.30" font-size="5.6" fill="#1a1a1a" stroke="#1a1a1a" stroke-width="0.08" textLength="3.15" lengthAdjust="spacingAndGlyphs">$</text>
<text x="537.20" y="265.30" font-size="5.6" fill="#1a1a1a" stroke="#1a1a1a" stroke-width="0.08" text-anchor="end" textLength="17.34" lengthAdjust="spacingAndGlyphs">134.82</text>
<path d="M439.70 257.90 l2.6 0 l-2.6 2.6z" fill="#1f7a1f"/>
<path d="M496.90 257.90 l2.6 0 l-2.6 2.6z" fill="#1f7a1f"/>
<line x1="439.30" y1="267.20" x2="551.50" y2="267.20" stroke="#8a8a80" stroke-width="0.6" />
<rect x="439.30" y="267.20" width="100.50" height="8.70" fill="#ebf1de" />
<rect x="539.80" y="267.20" width="11.70" height="8.70" fill="#fdfde8" />
<text x="466.80" y="274.00" font-size="5.6" fill="#1a1a1a" stroke="#1a1a1a" stroke-width="0.08" text-anchor="end" textLength="3.15" lengthAdjust="spacingAndGlyphs">2</text>
<text x="468.60" y="274.00" font-size="5.6" fill="#1a1a1a" stroke="#1a1a1a" stroke-width="0.08" textLength="20.86" lengthAdjust="spacingAndGlyphs">5 Gallon</text>
<text x="499.00" y="274.00" font-size="5.6" fill="#1a1a1a" stroke="#1a1a1a" stroke-width="0.08" textLength="3.15" lengthAdjust="spacingAndGlyphs">$</text>
<text x="537.20" y="274.00" font-size="5.6" fill="#1a1a1a" stroke="#1a1a1a" stroke-width="0.08" text-anchor="end" textLength="17.34" lengthAdjust="spacingAndGlyphs">136.00</text>
<path d="M439.70 267.70 l2.6 0 l-2.6 2.6z" fill="#1f7a1f"/>
<path d="M496.90 267.70 l2.6 0 l-2.6 2.6z" fill="#1f7a1f"/>
<rect x="406.30" y="249.10" width="33.00" height="26.80" fill="#c4d79b" />
<text x="422.80" y="260.90" font-size="5.6" fill="#1a1a1a" stroke="#1a1a1a" stroke-width="0.08" font-weight="bold" text-anchor="middle" textLength="15.74" lengthAdjust="spacingAndGlyphs">1 coat</text>
<text x="422.80" y="269.10" font-size="5.6" fill="#1a1a1a" stroke="#1a1a1a" stroke-width="0.08" font-weight="bold" text-anchor="middle" textLength="19.54" lengthAdjust="spacingAndGlyphs">options</text>
<rect x="439.30" y="275.90" width="100.50" height="8.30" fill="#ebf1de" />
<rect x="539.80" y="275.90" width="11.70" height="8.30" fill="#fdfde8" />
<text x="466.80" y="282.30" font-size="5.6" fill="#1a1a1a" stroke="#1a1a1a" stroke-width="0.08" text-anchor="end" textLength="6.31" lengthAdjust="spacingAndGlyphs">68</text>
<text x="468.60" y="282.30" font-size="5.6" fill="#1a1a1a" stroke="#1a1a1a" stroke-width="0.08" textLength="17.12" lengthAdjust="spacingAndGlyphs">Quarts</text>
<text x="499.00" y="282.30" font-size="5.6" fill="#1a1a1a" stroke="#1a1a1a" stroke-width="0.08" textLength="3.15" lengthAdjust="spacingAndGlyphs">$</text>
<text x="537.20" y="282.30" font-size="5.6" fill="#1a1a1a" stroke="#1a1a1a" stroke-width="0.08" text-anchor="end" textLength="17.34" lengthAdjust="spacingAndGlyphs">422.28</text>
<path d="M439.70 276.40 l2.6 0 l-2.6 2.6z" fill="#1f7a1f"/>
<path d="M496.90 276.40 l2.6 0 l-2.6 2.6z" fill="#1f7a1f"/>
<line x1="439.30" y1="284.20" x2="551.50" y2="284.20" stroke="#8a8a80" stroke-width="0.6" />
<rect x="439.30" y="284.20" width="100.50" height="10.10" fill="#ebf1de" />
<rect x="539.80" y="284.20" width="11.70" height="10.10" fill="#fdfde8" />
<text x="466.80" y="292.40" font-size="5.6" fill="#1a1a1a" stroke="#1a1a1a" stroke-width="0.08" text-anchor="end" textLength="6.31" lengthAdjust="spacingAndGlyphs">18</text>
<text x="468.60" y="292.40" font-size="5.6" fill="#1a1a1a" stroke="#1a1a1a" stroke-width="0.08" textLength="18.73" lengthAdjust="spacingAndGlyphs">Gallons</text>
<text x="499.00" y="292.40" font-size="5.6" fill="#1a1a1a" stroke="#1a1a1a" stroke-width="0.08" textLength="3.15" lengthAdjust="spacingAndGlyphs">$</text>
<text x="537.20" y="292.40" font-size="5.6" fill="#1a1a1a" stroke="#1a1a1a" stroke-width="0.08" text-anchor="end" textLength="17.34" lengthAdjust="spacingAndGlyphs">269.64</text>
<path d="M439.70 284.70 l2.6 0 l-2.6 2.6z" fill="#1f7a1f"/>
<path d="M496.90 284.70 l2.6 0 l-2.6 2.6z" fill="#1f7a1f"/>
<line x1="439.30" y1="294.30" x2="551.50" y2="294.30" stroke="#8a8a80" stroke-width="0.6" />
<rect x="439.30" y="294.30" width="100.50" height="8.20" fill="#ebf1de" />
<rect x="539.80" y="294.30" width="11.70" height="8.20" fill="#fdfde8" />
<text x="466.80" y="300.60" font-size="5.6" fill="#1a1a1a" stroke="#1a1a1a" stroke-width="0.08" text-anchor="end" textLength="3.15" lengthAdjust="spacingAndGlyphs">3</text>
<text x="468.60" y="300.60" font-size="5.6" fill="#1a1a1a" stroke="#1a1a1a" stroke-width="0.08" textLength="20.86" lengthAdjust="spacingAndGlyphs">5 Gallon</text>
<text x="499.00" y="300.60" font-size="5.6" fill="#1a1a1a" stroke="#1a1a1a" stroke-width="0.08" textLength="3.15" lengthAdjust="spacingAndGlyphs">$</text>
<text x="537.20" y="300.60" font-size="5.6" fill="#1a1a1a" stroke="#1a1a1a" stroke-width="0.08" text-anchor="end" textLength="17.34" lengthAdjust="spacingAndGlyphs">204.00</text>
<path d="M439.70 294.80 l2.6 0 l-2.6 2.6z" fill="#1f7a1f"/>
<path d="M496.90 294.80 l2.6 0 l-2.6 2.6z" fill="#1f7a1f"/>
<rect x="406.30" y="275.90" width="33.00" height="26.60" fill="#c4d79b" />
<text x="422.80" y="287.60" font-size="5.6" fill="#1a1a1a" stroke="#1a1a1a" stroke-width="0.08" font-weight="bold" text-anchor="middle" textLength="15.74" lengthAdjust="spacingAndGlyphs">2 coat</text>
<text x="422.80" y="295.80" font-size="5.6" fill="#1a1a1a" stroke="#1a1a1a" stroke-width="0.08" font-weight="bold" text-anchor="middle" textLength="19.54" lengthAdjust="spacingAndGlyphs">options</text>
<line x1="406.30" y1="275.90" x2="551.50" y2="275.90" stroke="#4d4d3d" stroke-width="1.3" />
<line x1="439.50" y1="249.10" x2="439.50" y2="302.50" stroke="#4d4d3d" stroke-width="1.0" />
<line x1="468.50" y1="249.10" x2="468.50" y2="302.50" stroke="#505046" stroke-width="0.9" />
<line x1="496.50" y1="249.10" x2="496.50" y2="302.50" stroke="#505046" stroke-width="0.9" />
<line x1="539.50" y1="249.10" x2="539.50" y2="302.50" stroke="#4d4d3d" stroke-width="1.0" />
<rect x="406.30" y="249.10" width="145.20" height="53.40" fill="none" stroke="#4d4d3d" stroke-width="1.1"/>
<text x="552.50" y="255.50" font-size="5.6" fill="#d42a2a" stroke="#d42a2a" stroke-width="0.08" textLength="63.06" lengthAdjust="spacingAndGlyphs">mark your selection here</text>
<text x="545.65" y="265.00" font-size="5.6" fill="#1a1a1a" stroke="#1a1a1a" stroke-width="0.08" text-anchor="middle" textLength="2.69" lengthAdjust="spacingAndGlyphs">x</text>
<rect x="406.30" y="311.10" width="33.00" height="8.70" fill="#ddd9c4" />
<rect x="406.30" y="311.10" width="33.00" height="8.70" fill="none" stroke="#4d4d3d" stroke-width="1.0"/>
<text x="407.50" y="318.00" font-size="5.6" fill="#1a1a1a" stroke="#1a1a1a" stroke-width="0.08" font-weight="bold" textLength="13.41" lengthAdjust="spacingAndGlyphs">Paint</text>
<rect x="439.30" y="319.80" width="100.50" height="8.20" fill="#ebf1de" />
<rect x="539.80" y="319.80" width="11.70" height="8.20" fill="#fdfde8" />
<text x="466.80" y="326.10" font-size="5.6" fill="#1a1a1a" stroke="#1a1a1a" stroke-width="0.08" text-anchor="end" textLength="6.31" lengthAdjust="spacingAndGlyphs">22</text>
<text x="468.60" y="326.10" font-size="5.6" fill="#1a1a1a" stroke="#1a1a1a" stroke-width="0.08" textLength="17.12" lengthAdjust="spacingAndGlyphs">Quarts</text>
<text x="499.00" y="326.10" font-size="5.6" fill="#1a1a1a" stroke="#1a1a1a" stroke-width="0.08" textLength="3.15" lengthAdjust="spacingAndGlyphs">$</text>
<text x="537.20" y="326.10" font-size="5.6" fill="#1a1a1a" stroke="#1a1a1a" stroke-width="0.08" text-anchor="end" textLength="17.34" lengthAdjust="spacingAndGlyphs">241.56</text>
<path d="M439.70 320.30 l2.6 0 l-2.6 2.6z" fill="#1f7a1f"/>
<path d="M496.90 320.30 l2.6 0 l-2.6 2.6z" fill="#1f7a1f"/>
<line x1="439.30" y1="328.00" x2="551.50" y2="328.00" stroke="#8a8a80" stroke-width="0.6" />
<rect x="439.30" y="328.00" width="100.50" height="8.20" fill="#ebf1de" />
<rect x="539.80" y="328.00" width="11.70" height="8.20" fill="#fdfde8" />
<text x="466.80" y="334.30" font-size="5.6" fill="#1a1a1a" stroke="#1a1a1a" stroke-width="0.08" text-anchor="end" textLength="3.15" lengthAdjust="spacingAndGlyphs">6</text>
<text x="468.60" y="334.30" font-size="5.6" fill="#1a1a1a" stroke="#1a1a1a" stroke-width="0.08" textLength="18.73" lengthAdjust="spacingAndGlyphs">Gallons</text>
<text x="499.00" y="334.30" font-size="5.6" fill="#1a1a1a" stroke="#1a1a1a" stroke-width="0.08" textLength="3.15" lengthAdjust="spacingAndGlyphs">$</text>
<text x="537.20" y="334.30" font-size="5.6" fill="#1a1a1a" stroke="#1a1a1a" stroke-width="0.08" text-anchor="end" textLength="17.34" lengthAdjust="spacingAndGlyphs">131.88</text>
<path d="M439.70 328.50 l2.6 0 l-2.6 2.6z" fill="#1f7a1f"/>
<path d="M496.90 328.50 l2.6 0 l-2.6 2.6z" fill="#1f7a1f"/>
<line x1="439.30" y1="336.20" x2="551.50" y2="336.20" stroke="#8a8a80" stroke-width="0.6" />
<rect x="439.30" y="336.20" width="100.50" height="7.90" fill="#ebf1de" />
<rect x="539.80" y="336.20" width="11.70" height="7.90" fill="#fdfde8" />
<text x="466.80" y="342.20" font-size="5.6" fill="#1a1a1a" stroke="#1a1a1a" stroke-width="0.08" text-anchor="end" textLength="3.15" lengthAdjust="spacingAndGlyphs">2</text>
<text x="468.60" y="342.20" font-size="5.6" fill="#1a1a1a" stroke="#1a1a1a" stroke-width="0.08" textLength="20.86" lengthAdjust="spacingAndGlyphs">5 Gallon</text>
<text x="499.00" y="342.20" font-size="5.6" fill="#1a1a1a" stroke="#1a1a1a" stroke-width="0.08" textLength="3.15" lengthAdjust="spacingAndGlyphs">$</text>
<text x="537.20" y="342.20" font-size="5.6" fill="#1a1a1a" stroke="#1a1a1a" stroke-width="0.08" text-anchor="end" textLength="17.34" lengthAdjust="spacingAndGlyphs">208.00</text>
<path d="M439.70 336.70 l2.6 0 l-2.6 2.6z" fill="#1f7a1f"/>
<path d="M496.90 336.70 l2.6 0 l-2.6 2.6z" fill="#1f7a1f"/>
<rect x="406.30" y="319.80" width="33.00" height="24.30" fill="#c4d79b" />
<text x="422.80" y="330.35" font-size="5.6" fill="#1a1a1a" stroke="#1a1a1a" stroke-width="0.08" font-weight="bold" text-anchor="middle" textLength="15.74" lengthAdjust="spacingAndGlyphs">1 coat</text>
<text x="422.80" y="338.55" font-size="5.6" fill="#1a1a1a" stroke="#1a1a1a" stroke-width="0.08" font-weight="bold" text-anchor="middle" textLength="19.54" lengthAdjust="spacingAndGlyphs">options</text>
<rect x="439.30" y="344.10" width="100.50" height="8.30" fill="#ebf1de" />
<rect x="539.80" y="344.10" width="11.70" height="8.30" fill="#fdfde8" />
<text x="466.80" y="350.50" font-size="5.6" fill="#1a1a1a" stroke="#1a1a1a" stroke-width="0.08" text-anchor="end" textLength="6.31" lengthAdjust="spacingAndGlyphs">43</text>
<text x="468.60" y="350.50" font-size="5.6" fill="#1a1a1a" stroke="#1a1a1a" stroke-width="0.08" textLength="17.12" lengthAdjust="spacingAndGlyphs">Quarts</text>
<text x="499.00" y="350.50" font-size="5.6" fill="#1a1a1a" stroke="#1a1a1a" stroke-width="0.08" textLength="3.15" lengthAdjust="spacingAndGlyphs">$</text>
<text x="537.20" y="350.50" font-size="5.6" fill="#1a1a1a" stroke="#1a1a1a" stroke-width="0.08" text-anchor="end" textLength="17.34" lengthAdjust="spacingAndGlyphs">472.14</text>
<path d="M439.70 344.60 l2.6 0 l-2.6 2.6z" fill="#1f7a1f"/>
<path d="M496.90 344.60 l2.6 0 l-2.6 2.6z" fill="#1f7a1f"/>
<line x1="439.30" y1="352.40" x2="551.50" y2="352.40" stroke="#8a8a80" stroke-width="0.6" />
<rect x="439.30" y="352.40" width="100.50" height="8.30" fill="#ebf1de" />
<rect x="539.80" y="352.40" width="11.70" height="8.30" fill="#fdfde8" />
<text x="466.80" y="358.80" font-size="5.6" fill="#1a1a1a" stroke="#1a1a1a" stroke-width="0.08" text-anchor="end" textLength="6.31" lengthAdjust="spacingAndGlyphs">11</text>
<text x="468.60" y="358.80" font-size="5.6" fill="#1a1a1a" stroke="#1a1a1a" stroke-width="0.08" textLength="18.73" lengthAdjust="spacingAndGlyphs">Gallons</text>
<text x="499.00" y="358.80" font-size="5.6" fill="#1a1a1a" stroke="#1a1a1a" stroke-width="0.08" textLength="3.15" lengthAdjust="spacingAndGlyphs">$</text>
<text x="537.20" y="358.80" font-size="5.6" fill="#1a1a1a" stroke="#1a1a1a" stroke-width="0.08" text-anchor="end" textLength="17.34" lengthAdjust="spacingAndGlyphs">241.78</text>
<path d="M439.70 352.90 l2.6 0 l-2.6 2.6z" fill="#1f7a1f"/>
<path d="M496.90 352.90 l2.6 0 l-2.6 2.6z" fill="#1f7a1f"/>
<line x1="439.30" y1="360.70" x2="551.50" y2="360.70" stroke="#8a8a80" stroke-width="0.6" />
<rect x="439.30" y="360.70" width="100.50" height="7.70" fill="#ebf1de" />
<rect x="539.80" y="360.70" width="11.70" height="7.70" fill="#fdfde8" />
<text x="466.80" y="366.50" font-size="5.6" fill="#1a1a1a" stroke="#1a1a1a" stroke-width="0.08" text-anchor="end" textLength="3.15" lengthAdjust="spacingAndGlyphs">3</text>
<text x="468.60" y="366.50" font-size="5.6" fill="#1a1a1a" stroke="#1a1a1a" stroke-width="0.08" textLength="20.86" lengthAdjust="spacingAndGlyphs">5 Gallon</text>
<text x="499.00" y="366.50" font-size="5.6" fill="#1a1a1a" stroke="#1a1a1a" stroke-width="0.08" textLength="3.15" lengthAdjust="spacingAndGlyphs">$</text>
<text x="537.20" y="366.50" font-size="5.6" fill="#1a1a1a" stroke="#1a1a1a" stroke-width="0.08" text-anchor="end" textLength="17.34" lengthAdjust="spacingAndGlyphs">312.00</text>
<path d="M439.70 361.20 l2.6 0 l-2.6 2.6z" fill="#1f7a1f"/>
<path d="M496.90 361.20 l2.6 0 l-2.6 2.6z" fill="#1f7a1f"/>
<rect x="406.30" y="344.10" width="33.00" height="24.30" fill="#c4d79b" />
<text x="422.80" y="354.65" font-size="5.6" fill="#1a1a1a" stroke="#1a1a1a" stroke-width="0.08" font-weight="bold" text-anchor="middle" textLength="15.74" lengthAdjust="spacingAndGlyphs">2 coat</text>
<text x="422.80" y="362.85" font-size="5.6" fill="#1a1a1a" stroke="#1a1a1a" stroke-width="0.08" font-weight="bold" text-anchor="middle" textLength="19.54" lengthAdjust="spacingAndGlyphs">options</text>
<line x1="406.30" y1="344.10" x2="551.50" y2="344.10" stroke="#4d4d3d" stroke-width="1.3" />
<rect x="439.30" y="368.40" width="100.50" height="8.70" fill="#ebf1de" />
<rect x="539.80" y="368.40" width="11.70" height="8.70" fill="#fdfde8" />
<text x="466.80" y="375.20" font-size="5.6" fill="#1a1a1a" stroke="#1a1a1a" stroke-width="0.08" text-anchor="end" textLength="6.31" lengthAdjust="spacingAndGlyphs">64</text>
<text x="468.60" y="375.20" font-size="5.6" fill="#1a1a1a" stroke="#1a1a1a" stroke-width="0.08" textLength="17.12" lengthAdjust="spacingAndGlyphs">Quarts</text>
<text x="499.00" y="375.20" font-size="5.6" fill="#1a1a1a" stroke="#1a1a1a" stroke-width="0.08" textLength="3.15" lengthAdjust="spacingAndGlyphs">$</text>
<text x="537.20" y="375.20" font-size="5.6" fill="#1a1a1a" stroke="#1a1a1a" stroke-width="0.08" text-anchor="end" textLength="17.34" lengthAdjust="spacingAndGlyphs">702.72</text>
<path d="M439.70 368.90 l2.6 0 l-2.6 2.6z" fill="#1f7a1f"/>
<path d="M496.90 368.90 l2.6 0 l-2.6 2.6z" fill="#1f7a1f"/>
<line x1="439.30" y1="377.10" x2="551.50" y2="377.10" stroke="#8a8a80" stroke-width="0.6" />
<rect x="439.30" y="377.10" width="100.50" height="8.10" fill="#ebf1de" />
<rect x="539.80" y="377.10" width="11.70" height="8.10" fill="#fdfde8" />
<text x="466.80" y="383.30" font-size="5.6" fill="#1a1a1a" stroke="#1a1a1a" stroke-width="0.08" text-anchor="end" textLength="6.31" lengthAdjust="spacingAndGlyphs">16</text>
<text x="468.60" y="383.30" font-size="5.6" fill="#1a1a1a" stroke="#1a1a1a" stroke-width="0.08" textLength="18.73" lengthAdjust="spacingAndGlyphs">Gallons</text>
<text x="499.00" y="383.30" font-size="5.6" fill="#1a1a1a" stroke="#1a1a1a" stroke-width="0.08" textLength="3.15" lengthAdjust="spacingAndGlyphs">$</text>
<text x="537.20" y="383.30" font-size="5.6" fill="#1a1a1a" stroke="#1a1a1a" stroke-width="0.08" text-anchor="end" textLength="17.34" lengthAdjust="spacingAndGlyphs">351.68</text>
<path d="M439.70 377.60 l2.6 0 l-2.6 2.6z" fill="#1f7a1f"/>
<path d="M496.90 377.60 l2.6 0 l-2.6 2.6z" fill="#1f7a1f"/>
<line x1="439.30" y1="385.20" x2="551.50" y2="385.20" stroke="#8a8a80" stroke-width="0.6" />
<rect x="439.30" y="385.20" width="100.50" height="8.20" fill="#ebf1de" />
<rect x="539.80" y="385.20" width="11.70" height="8.20" fill="#fdfde8" />
<text x="466.80" y="391.50" font-size="5.6" fill="#1a1a1a" stroke="#1a1a1a" stroke-width="0.08" text-anchor="end" textLength="3.15" lengthAdjust="spacingAndGlyphs">4</text>
<text x="468.60" y="391.50" font-size="5.6" fill="#1a1a1a" stroke="#1a1a1a" stroke-width="0.08" textLength="20.86" lengthAdjust="spacingAndGlyphs">5 Gallon</text>
<text x="499.00" y="391.50" font-size="5.6" fill="#1a1a1a" stroke="#1a1a1a" stroke-width="0.08" textLength="3.15" lengthAdjust="spacingAndGlyphs">$</text>
<text x="537.20" y="391.50" font-size="5.6" fill="#1a1a1a" stroke="#1a1a1a" stroke-width="0.08" text-anchor="end" textLength="17.34" lengthAdjust="spacingAndGlyphs">416.00</text>
<path d="M439.70 385.70 l2.6 0 l-2.6 2.6z" fill="#1f7a1f"/>
<path d="M496.90 385.70 l2.6 0 l-2.6 2.6z" fill="#1f7a1f"/>
<rect x="406.30" y="368.40" width="33.00" height="25.00" fill="#c4d79b" />
<text x="422.80" y="379.30" font-size="5.6" fill="#1a1a1a" stroke="#1a1a1a" stroke-width="0.08" font-weight="bold" text-anchor="middle" textLength="15.74" lengthAdjust="spacingAndGlyphs">3 coat</text>
<text x="422.80" y="387.50" font-size="5.6" fill="#1a1a1a" stroke="#1a1a1a" stroke-width="0.08" font-weight="bold" text-anchor="middle" textLength="19.54" lengthAdjust="spacingAndGlyphs">options</text>
<line x1="406.30" y1="368.40" x2="551.50" y2="368.40" stroke="#4d4d3d" stroke-width="1.3" />
<line x1="439.50" y1="319.80" x2="439.50" y2="393.40" stroke="#4d4d3d" stroke-width="1.0" />
<line x1="468.50" y1="319.80" x2="468.50" y2="393.40" stroke="#505046" stroke-width="0.9" />
<line x1="496.50" y1="319.80" x2="496.50" y2="393.40" stroke="#505046" stroke-width="0.9" />
<line x1="539.50" y1="319.80" x2="539.50" y2="393.40" stroke="#4d4d3d" stroke-width="1.0" />
<rect x="406.30" y="319.80" width="145.20" height="73.60" fill="none" stroke="#4d4d3d" stroke-width="1.1"/>
<text x="552.50" y="326.10" font-size="5.6" fill="#d42a2a" stroke="#d42a2a" stroke-width="0.08" textLength="63.06" lengthAdjust="spacingAndGlyphs">mark your selection here</text>
<text x="545.65" y="358.50" font-size="5.6" fill="#1a1a1a" stroke="#1a1a1a" stroke-width="0.08" text-anchor="middle" textLength="2.69" lengthAdjust="spacingAndGlyphs">x</text>
<rect x="406.30" y="409.80" width="33.00" height="8.60" fill="#ddd9c4" />
<rect x="406.30" y="409.80" width="33.00" height="8.60" fill="none" stroke="#4d4d3d" stroke-width="1.0"/>
<text x="407.50" y="416.60" font-size="5.6" fill="#1a1a1a" stroke="#1a1a1a" stroke-width="0.08" font-weight="bold" textLength="14.6" lengthAdjust="spacingAndGlyphs">Labor</text>
<rect x="406.30" y="418.40" width="33.00" height="8.20" fill="#c4d79b" />
<rect x="439.30" y="418.40" width="133.40" height="8.20" fill="#ebf1de" />
<text x="407.50" y="424.70" font-size="5.6" fill="#1a1a1a" stroke="#1a1a1a" stroke-width="0.08" font-weight="bold" textLength="30.06" lengthAdjust="spacingAndGlyphs">Price per SF</text>
<text x="471.40" y="424.70" font-size="5.6" fill="#1a1a1a" stroke="#1a1a1a" stroke-width="0.08" textLength="3.15" lengthAdjust="spacingAndGlyphs">$</text>
<text x="493.40" y="424.70" font-size="5.6" fill="#1a1a1a" stroke="#1a1a1a" stroke-width="0.08" text-anchor="end" textLength="11.03" lengthAdjust="spacingAndGlyphs">3.00</text>
<text x="499.00" y="424.70" font-size="5.6" fill="#1a1a1a" stroke="#1a1a1a" stroke-width="0.08" textLength="3.15" lengthAdjust="spacingAndGlyphs">$</text>
<text x="569.80" y="424.70" font-size="5.6" fill="#1a1a1a" stroke="#1a1a1a" stroke-width="0.08" text-anchor="end" textLength="22.04" lengthAdjust="spacingAndGlyphs">6,386.00</text>
<path d="M496.90 418.90 l2.6 0 l-2.6 2.6z" fill="#1f7a1f"/>
<line x1="439.30" y1="418.40" x2="439.30" y2="426.60" stroke="#4d4d3d" stroke-width="0.8" />
<rect x="406.30" y="418.40" width="166.40" height="8.20" fill="none" stroke="#4d4d3d" stroke-width="1.1"/>
<text x="15.00" y="15.73" font-size="8.7" fill="#242424" stroke="#242424" stroke-width="0.18" textLength="13.3" lengthAdjust="spacingAndGlyphs">File</text>
<text x="47.30" y="15.73" font-size="8.7" fill="#242424" stroke="#242424" stroke-width="0.45" textLength="24.4" lengthAdjust="spacingAndGlyphs">Home</text>
<text x="85.70" y="15.73" font-size="8.7" fill="#242424" stroke="#242424" stroke-width="0.18" textLength="22.0" lengthAdjust="spacingAndGlyphs">Insert</text>
<text x="121.70" y="15.73" font-size="8.7" fill="#242424" stroke="#242424" stroke-width="0.18" textLength="21.0" lengthAdjust="spacingAndGlyphs">Draw</text>
<text x="156.70" y="15.73" font-size="8.7" fill="#242424" stroke="#242424" stroke-width="0.18" textLength="49.3" lengthAdjust="spacingAndGlyphs">Page Layout</text>
<text x="220.30" y="15.73" font-size="8.7" fill="#242424" stroke="#242424" stroke-width="0.18" textLength="36.7" lengthAdjust="spacingAndGlyphs">Formulas</text>
<text x="270.70" y="15.73" font-size="8.7" fill="#242424" stroke="#242424" stroke-width="0.18" textLength="18.3" lengthAdjust="spacingAndGlyphs">Data</text>
<text x="303.30" y="15.73" font-size="8.7" fill="#242424" stroke="#242424" stroke-width="0.18" textLength="28.4" lengthAdjust="spacingAndGlyphs">Review</text>
<text x="345.00" y="15.73" font-size="8.7" fill="#242424" stroke="#242424" stroke-width="0.18" textLength="20" lengthAdjust="spacingAndGlyphs">View</text>
<text x="379.00" y="15.73" font-size="8.7" fill="#242424" stroke="#242424" stroke-width="0.18" textLength="40" lengthAdjust="spacingAndGlyphs">Automate</text>
<text x="432.70" y="15.73" font-size="8.7" fill="#242424" stroke="#242424" stroke-width="0.18" textLength="19.0" lengthAdjust="spacingAndGlyphs">Help</text>
<rect x="47.50" y="18.80" width="24.80" height="1.40" fill="#107c41" rx="0.7"/>
<rect x="944.7" y="3.8" width="66.2" height="16" rx="3" fill="#ffffff" stroke="#c9c9c9" stroke-width="0.8"/>
<path d="M950.5 8.6 h7.6 v5.2 h-4.6 l-2 1.8 v-1.8 h-1 z" fill="none" stroke="#242424" stroke-width="0.8" stroke-linejoin="round"/>
<text x="961.30" y="15.13" font-size="8.7" fill="#242424" stroke="#242424" stroke-width="0.18" textLength="43.7" lengthAdjust="spacingAndGlyphs">Comments</text>
<rect x="1017.2" y="3.4" width="55.3" height="16.8" rx="3" fill="#107c41"/>
<path d="M1022.6 10.2 v5.6 h7.4 v-2.4 M1024.4 13.6 c0.4-2.6 2.2-3.6 4.6-3.6 M1027.4 8.2 l2 1.8 l-2 1.8" fill="none" stroke="#ffffff" stroke-width="0.8" stroke-linejoin="round"/>
<text x="1033.30" y="15.13" font-size="8.7" fill="#ffffff" stroke="#ffffff" stroke-width="0.18" textLength="23.4" lengthAdjust="spacingAndGlyphs">Share</text>
<path d="M1064.3 11.2 l1.5 1.5 l1.5 -1.5" fill="none" stroke="#ffffff" stroke-width="0.8"/>
<defs><filter id="sh" x="-2%" y="-10%" width="104%" height="130%"><feDropShadow dx="0" dy="0.8" stdDeviation="0.9" flood-color="#000" flood-opacity="0.24"/></filter></defs>
<rect x="6" y="23" width="1069" height="69.5" rx="5" fill="#ffffff" filter="url(#sh)"/>
<text x="18.40" y="88.47" font-size="7.7" fill="#3d3d3d" stroke="#3d3d3d" stroke-width="0.18" textLength="19.0" lengthAdjust="spacingAndGlyphs">Undo</text>
<text x="60.40" y="88.47" font-size="7.7" fill="#3d3d3d" stroke="#3d3d3d" stroke-width="0.18" textLength="32.8" lengthAdjust="spacingAndGlyphs">Clipboard</text>
<text x="187.60" y="88.47" font-size="7.7" fill="#3d3d3d" stroke="#3d3d3d" stroke-width="0.18" textLength="14.4" lengthAdjust="spacingAndGlyphs">Font</text>
<text x="363.50" y="88.47" font-size="7.7" fill="#3d3d3d" stroke="#3d3d3d" stroke-width="0.18" textLength="34.2" lengthAdjust="spacingAndGlyphs">Alignment</text>
<text x="527.80" y="88.47" font-size="7.7" fill="#3d3d3d" stroke="#3d3d3d" stroke-width="0.18" textLength="27.0" lengthAdjust="spacingAndGlyphs">Number</text>
<text x="663.10" y="88.47" font-size="7.7" fill="#3d3d3d" stroke="#3d3d3d" stroke-width="0.18" textLength="19.8" lengthAdjust="spacingAndGlyphs">Styles</text>
<text x="786.00" y="88.47" font-size="7.7" fill="#3d3d3d" stroke="#3d3d3d" stroke-width="0.18" textLength="15.7" lengthAdjust="spacingAndGlyphs">Cells</text>
<text x="906.30" y="88.47" font-size="7.7" fill="#3d3d3d" stroke="#3d3d3d" stroke-width="0.18" textLength="23.5" lengthAdjust="spacingAndGlyphs">Editing</text>
<text x="1000.00" y="88.47" font-size="7.7" fill="#3d3d3d" stroke="#3d3d3d" stroke-width="0.18" textLength="26.7" lengthAdjust="spacingAndGlyphs">Analysis</text>
<line x1="47.50" y1="27.00" x2="47.50" y2="88.00" stroke="#e3e3e3" stroke-width="0.8" />
<line x1="117.50" y1="27.00" x2="117.50" y2="88.00" stroke="#e3e3e3" stroke-width="0.8" />
<line x1="282.00" y1="27.00" x2="282.00" y2="88.00" stroke="#e3e3e3" stroke-width="0.8" />
<line x1="489.80" y1="27.00" x2="489.80" y2="88.00" stroke="#e3e3e3" stroke-width="0.8" />
<line x1="603.40" y1="27.00" x2="603.40" y2="88.00" stroke="#e3e3e3" stroke-width="0.8" />
<line x1="742.80" y1="27.00" x2="742.80" y2="88.00" stroke="#e3e3e3" stroke-width="0.8" />
<line x1="845.20" y1="27.00" x2="845.20" y2="88.00" stroke="#e3e3e3" stroke-width="0.8" />
<line x1="991.30" y1="27.00" x2="991.30" y2="88.00" stroke="#e3e3e3" stroke-width="0.8" />
<line x1="1034.70" y1="27.00" x2="1034.70" y2="88.00" stroke="#e3e3e3" stroke-width="0.8" />
<line x1="385.50" y1="29.00" x2="385.50" y2="72.00" stroke="#e3e3e3" stroke-width="0.8" />
<path d="M109.4 88.4 v-5.2 h5.2 M111.2 85.0 l3.2 3.2 M114.6 86.2 v2.2 h-2.2" fill="none" stroke="#555" stroke-width="0.7"/>
<path d="M274.9 88.4 v-5.2 h5.2 M276.7 85.0 l3.2 3.2 M280.1 86.2 v2.2 h-2.2" fill="none" stroke="#555" stroke-width="0.7"/>
<path d="M482.4 88.4 v-5.2 h5.2 M484.2 85.0 l3.2 3.2 M487.6 86.2 v2.2 h-2.2" fill="none" stroke="#555" stroke-width="0.7"/>
<path d="M595.9 88.4 v-5.2 h5.2 M597.7 85.0 l3.2 3.2 M601.1 86.2 v2.2 h-2.2" fill="none" stroke="#555" stroke-width="0.7"/>
<path d="M17.7 28.4 V32.3 H21.6 M18 32 C20.5 28.4 25.6 27.4 27.8 30.6 C29.2 32.8 26.4 35.4 21.6 38.8" fill="none" stroke="#3a3a3a" stroke-width="1.0" stroke-linecap="round" stroke-linejoin="round"/>
<path d="M34.10 32.35 l1.90 1.90 l1.90 -1.90" fill="none" stroke="#303030" stroke-width="1.0"/>
<path d="M26.9 45.9 V49.9 H23.1 M26.6 49.6 C24.4 46 19.5 45.3 17.6 48.3 C16.4 50.6 19 53.6 23.4 57.5" fill="none" stroke="#bdbdbd" stroke-width="1.0" stroke-linecap="round" stroke-linejoin="round"/>
<path d="M34.10 50.35 l1.90 1.90 l1.90 -1.90" fill="none" stroke="#c4c4c4" stroke-width="1.0"/>
<path d="M61 32 h4 l1-2 h4 l1 2 h3.6 v17 h-13.6 z" fill="#f4f4f4" stroke="#c6c6c6" stroke-width="0.8" stroke-linejoin="round"/>
<rect x="69.5" y="36.5" width="10" height="13" fill="#f8f8f8" stroke="#c6c6c6" stroke-width="0.8"/>
<text x="58.50" y="61.32" font-size="8.4" fill="#b9b9b9" stroke="#b9b9b9" stroke-width="0.18" textLength="19.5" lengthAdjust="spacingAndGlyphs">Paste</text>
<path d="M66.60 67.52 l1.60 1.60 l1.60 -1.60" fill="none" stroke="#c8c8c8" stroke-width="1.0"/>
<path d="M89.8 29.5 l4.4 6.6 M95.2 29.5 l-4.4 6.6" fill="none" stroke="#3a3a3a" stroke-width="0.8"/>
<circle cx="90.3" cy="37.6" r="1.5" fill="#4a8fd0"/><circle cx="94.7" cy="37.6" r="1.5" fill="#4a8fd0"/>
<path d="M87.5 46.5 h4.5 l1.2 1.2 v8.4 h-5.7 z M90.5 49.5 h4.5 l2.6 2.6 v5.6 h-7.1 z" fill="#ffffff" stroke="#3a3a3a" stroke-width="0.8" stroke-linejoin="round"/>
<path d="M104.40 51.12 l1.60 1.60 l1.60 -1.60" fill="none" stroke="#333333" stroke-width="1.0"/>
<path d="M87.4 69.6 L91.2 67.4 L94 71.2 L92.2 74.6 Z" fill="#f3b766" stroke="#e0963c" stroke-width="0.6" stroke-linejoin="round"/>
<path d="M91.4 68 L95.8 64.6 Q97.6 64.4 98 66.4 L94.4 71 Z" fill="#ffffff" stroke="#4a4a4a" stroke-width="0.9" stroke-linejoin="round"/>
<rect x="124.3" y="31.6" width="85" height="15.8" rx="2.5" fill="#ffffff" stroke="#c4c4c4" stroke-width="0.8"/>
<text x="125.60" y="42.60" font-size="8.6" fill="#242424" stroke="#242424" stroke-width="0.18" textLength="23.9" lengthAdjust="spacingAndGlyphs">Calibri</text>
<path d="M203.80 38.62 l1.60 1.60 l1.60 -1.60" fill="none" stroke="#333333" stroke-width="1.0"/>
<rect x="212" y="31.6" width="28.3" height="15.8" rx="2.5" fill="#ffffff" stroke="#c4c4c4" stroke-width="0.8"/>
<text x="213.40" y="42.60" font-size="8.6" fill="#242424" stroke="#242424" stroke-width="0.18" textLength="8.6" lengthAdjust="spacingAndGlyphs">11</text>
<path d="M234.40 38.62 l1.60 1.60 l1.60 -1.60" fill="none" stroke="#333333" stroke-width="1.0"/>
<text x="250.00" y="44.00" font-size="12" fill="#3a3a3a" stroke="#3a3a3a" stroke-width="0.18" text-anchor="middle">A</text>
<path d="M254.3 35.6 l1.4-1.4 l1.4 1.4" fill="none" stroke="#2b7cd3" stroke-width="0.75"/>
<text x="269.00" y="44.00" font-size="10" fill="#3a3a3a" stroke="#3a3a3a" stroke-width="0.18" text-anchor="middle">A</text>
<path d="M271.8 34.6 l1.3 1.3 l1.3-1.3" fill="none" stroke="#2b7cd3" stroke-width="0.75"/>
<text x="132.00" y="65.00" font-size="9" fill="#242424" stroke="#242424" stroke-width="0.18" font-weight="bold" text-anchor="middle">B</text>
<text x="149.80" y="65.00" font-size="9" fill="#3a3a3a" stroke="#3a3a3a" stroke-width="0.18" text-anchor="middle" font-family="'Liberation Serif', serif" style="font-style:italic">I</text>
<text x="167.70" y="64.60" font-size="8.6" fill="#3a3a3a" stroke="#3a3a3a" stroke-width="0.18" text-anchor="middle">U</text>
<line x1="164.40" y1="66.80" x2="171.00" y2="66.80" stroke="#3a3a3a" stroke-width="0.7" />
<path d="M180.20 61.12 l1.60 1.60 l1.60 -1.60" fill="none" stroke="#333333" stroke-width="1.0"/>
<line x1="188.70" y1="54.50" x2="188.70" y2="70.00" stroke="#e0e0e0" stroke-width="0.8" />
<rect x="194" y="56.6" width="9.8" height="9.8" fill="none" stroke="#3a3a3a" stroke-width="0.9"/>
<line x1="198.90" y1="56.60" x2="198.90" y2="66.40" stroke="#3a3a3a" stroke-width="0.8" />
<line x1="194.00" y1="61.50" x2="203.80" y2="61.50" stroke="#3a3a3a" stroke-width="0.8" />
<path d="M211.00 61.12 l1.60 1.60 l1.60 -1.60" fill="none" stroke="#333333" stroke-width="1.0"/>
<line x1="220.00" y1="54.50" x2="220.00" y2="70.00" stroke="#e0e0e0" stroke-width="0.8" />
<path d="M226.5 60.5 l3.6-3.6 l3.6 3.6 l-3.6 3.6 z" fill="none" stroke="#3a3a3a" stroke-width="0.8"/>
<path d="M233.5 58.8 l1.2 2.4" stroke="#2b7cd3" stroke-width="0.9"/>
<rect x="225.00" y="65.20" width="10.50" height="1.60" fill="#e6e6e6" />
<path d="M241.90 61.12 l1.60 1.60 l1.60 -1.60" fill="none" stroke="#333333" stroke-width="1.0"/>
<text x="258.40" y="64.40" font-size="9" fill="#3a3a3a" stroke="#3a3a3a" stroke-width="0.18" text-anchor="middle">A</text>
<rect x="252.80" y="65.60" width="11.20" height="1.80" fill="#d20f1e" />
<path d="M270.40 61.12 l1.60 1.60 l1.60 -1.60" fill="none" stroke="#333333" stroke-width="1.0"/>
<line x1="292.20" y1="34.10" x2="302.20" y2="34.10" stroke="#4a4a4a" stroke-width="0.85" />
<line x1="293.70" y1="36.80" x2="300.70" y2="36.80" stroke="#4a4a4a" stroke-width="0.85" />
<line x1="292.20" y1="39.50" x2="302.20" y2="39.50" stroke="#4a4a4a" stroke-width="0.85" />
<line x1="310.50" y1="36.20" x2="320.50" y2="36.20" stroke="#4a4a4a" stroke-width="0.85" />
<line x1="312.00" y1="39.00" x2="319.00" y2="39.00" stroke="#4a4a4a" stroke-width="0.85" />
<line x1="310.50" y1="41.80" x2="320.50" y2="41.80" stroke="#4a4a4a" stroke-width="0.85" />
<rect x="325.4" y="31.3" width="16.6" height="16" rx="2.2" fill="#fafafa" stroke="#8c8c8c" stroke-width="0.8"/>
<line x1="329.00" y1="35.50" x2="338.60" y2="35.50" stroke="#d8d8d8" stroke-width="0.8" />
<line x1="329.00" y1="39.00" x2="338.60" y2="39.00" stroke="#4a4a4a" stroke-width="0.85" />
<line x1="330.50" y1="41.65" x2="337.10" y2="41.65" stroke="#4a4a4a" stroke-width="0.85" />
<line x1="329.00" y1="44.30" x2="338.60" y2="44.30" stroke="#4a4a4a" stroke-width="0.85" />
<text transform="rotate(-45 352.2 37.6)" x="352.20" y="39.60" font-size="6.2" fill="#3a3a3a" stroke="#3a3a3a" stroke-width="0.1" text-anchor="middle">ab</text>
<path d="M352.6 44.6 L359.6 36.8 M356.8 37 L359.8 36.6 L359.6 39.6" fill="none" stroke="#2b88d8" stroke-width="0.85"/>
<path d="M364.40 38.72 l1.60 1.60 l1.60 -1.60" fill="none" stroke="#333333" stroke-width="1.0"/>
<line x1="292.20" y1="57.40" x2="302.20" y2="57.40" stroke="#4a4a4a" stroke-width="0.85" />
<line x1="292.20" y1="60.10" x2="299.20" y2="60.10" stroke="#4a4a4a" stroke-width="0.85" />
<line x1="292.20" y1="62.80" x2="302.20" y2="62.80" stroke="#4a4a4a" stroke-width="0.85" />
<line x1="292.20" y1="65.50" x2="299.20" y2="65.50" stroke="#4a4a4a" stroke-width="0.85" />
<line x1="310.60" y1="57.40" x2="320.60" y2="57.40" stroke="#4a4a4a" stroke-width="0.85" />
<line x1="312.10" y1="60.10" x2="319.10" y2="60.10" stroke="#4a4a4a" stroke-width="0.85" />
<line x1="310.60" y1="62.80" x2="320.60" y2="62.80" stroke="#4a4a4a" stroke-width="0.85" />
<line x1="312.10" y1="65.50" x2="319.10" y2="65.50" stroke="#4a4a4a" stroke-width="0.85" />
<line x1="328.60" y1="57.40" x2="338.60" y2="57.40" stroke="#4a4a4a" stroke-width="0.85" />
<line x1="331.60" y1="60.10" x2="338.60" y2="60.10" stroke="#4a4a4a" stroke-width="0.85" />
<line x1="328.60" y1="62.80" x2="338.60" y2="62.80" stroke="#4a4a4a" stroke-width="0.85" />
<line x1="331.60" y1="65.50" x2="338.60" y2="65.50" stroke="#4a4a4a" stroke-width="0.85" />
<line x1="343.70" y1="55.00" x2="343.70" y2="70.00" stroke="#e0e0e0" stroke-width="0.8" />
<line x1="349.40" y1="57.40" x2="359.80" y2="57.40" stroke="#4a4a4a" stroke-width="0.85" />
<line x1="349.40" y1="65.50" x2="359.80" y2="65.50" stroke="#4a4a4a" stroke-width="0.85" />
<line x1="355.00" y1="60.20" x2="359.80" y2="60.20" stroke="#4a4a4a" stroke-width="0.85" />
<line x1="355.00" y1="62.90" x2="359.80" y2="62.90" stroke="#4a4a4a" stroke-width="0.85" />
<path d="M353.6 61.5 h-4 M349.6 61.5 l1.5-1.4 M349.6 61.5 l1.5 1.4" fill="none" stroke="#2b7cd3" stroke-width="0.85"/>
<line x1="367.40" y1="57.40" x2="377.80" y2="57.40" stroke="#4a4a4a" stroke-width="0.85" />
<line x1="367.40" y1="65.50" x2="377.80" y2="65.50" stroke="#4a4a4a" stroke-width="0.85" />
<line x1="373.00" y1="60.20" x2="377.80" y2="60.20" stroke="#4a4a4a" stroke-width="0.85" />
<line x1="373.00" y1="62.90" x2="377.80" y2="62.90" stroke="#4a4a4a" stroke-width="0.85" />
<path d="M367.4 61.5 h4 M371.4 61.5 l-1.5-1.4 M371.4 61.5 l-1.5 1.4" fill="none" stroke="#2b7cd3" stroke-width="0.85"/>
<text x="398.60" y="38.50" font-size="6.4" fill="#3a3a3a" stroke="#3a3a3a" stroke-width="0.12" text-anchor="middle">ab</text>
<text x="395.60" y="44.30" font-size="6.4" fill="#3a3a3a" stroke="#3a3a3a" stroke-width="0.12" text-anchor="middle">c</text>
<path d="M401.8 39.4 c1.6 1 1.2 3.8-1.2 4.6 h-1 M399.4 44 l1.3-1.2 M399.4 44 l1.3 1.1" fill="none" stroke="#2b88d8" stroke-width="0.85"/>
<text x="406.70" y="42.60" font-size="8.6" fill="#242424" stroke="#242424" stroke-width="0.18" textLength="37.3" lengthAdjust="spacingAndGlyphs">Wrap Text</text>
<rect x="392.60" y="56.40" width="10.60" height="9.80" fill="#dcebf8" />
<rect x="392.6" y="56.4" width="10.6" height="9.8" fill="none" stroke="#2e6da4" stroke-width="0.9"/>
<line x1="392.60" y1="58.80" x2="403.20" y2="58.80" stroke="#2e6da4" stroke-width="0.6" />
<line x1="392.60" y1="63.80" x2="403.20" y2="63.80" stroke="#2e6da4" stroke-width="0.6" />
<line x1="395.20" y1="56.40" x2="395.20" y2="66.20" stroke="#2e6da4" stroke-width="0.6" />
<line x1="400.60" y1="56.40" x2="400.60" y2="66.20" stroke="#2e6da4" stroke-width="0.6" />
<path d="M394.6 61.3 h6.6 M394.6 61.3 l1.2-1.1 M394.6 61.3 l1.2 1.1 M401.2 61.3 l-1.2-1.1 M401.2 61.3 l-1.2 1.1" fill="none" stroke="#2e6da4" stroke-width="0.7"/>
<text x="407.00" y="64.90" font-size="8.6" fill="#242424" stroke="#242424" stroke-width="0.18" textLength="60" lengthAdjust="spacingAndGlyphs">Merge &amp; Center</text>
<path d="M476.40 60.92 l1.60 1.60 l1.60 -1.60" fill="none" stroke="#333333" stroke-width="1.0"/>
<rect x="496.6" y="31.6" width="101.4" height="16" rx="2.5" fill="#ffffff" stroke="#c4c4c4" stroke-width="0.8"/>
<text x="497.80" y="42.60" font-size="8.6" fill="#242424" stroke="#242424" stroke-width="0.18" textLength="26.7" lengthAdjust="spacingAndGlyphs">General</text>
<path d="M592.20 38.62 l1.60 1.60 l1.60 -1.60" fill="none" stroke="#333333" stroke-width="1.0"/>
<text x="503.80" y="65.80" font-size="11.2" fill="#3a3a3a" text-anchor="middle" textLength="5" lengthAdjust="spacingAndGlyphs">$</text>
<path d="M516.20 61.28 l1.30 1.30 l1.30 -1.30" fill="none" stroke="#333" stroke-width="1.0"/>
<text x="533.10" y="66.00" font-size="11.5" fill="#3a3a3a" text-anchor="middle" textLength="9" lengthAdjust="spacingAndGlyphs">%</text>
<path d="M549.6 60.2 a2.1 2.1 0 1 1 4.2 0.2 c0 2.4-1.2 4.4-3.2 5.6 l-0.5-0.6 c1-0.8 1.6-1.7 1.8-2.9 a2.1 2.1 0 0 1 -2.3 -2.3z" fill="#303030"/>
<line x1="561.60" y1="54.50" x2="561.60" y2="70.00" stroke="#e0e0e0" stroke-width="0.8" />
<text x="575.60" y="61.80" font-size="6.4" fill="#3a3a3a" stroke="#3a3a3a" stroke-width="0.05" text-anchor="middle">0</text>
<text x="572.80" y="67.20" font-size="6.4" fill="#3a3a3a" stroke="#3a3a3a" stroke-width="0.05" text-anchor="middle">.00</text>
<path d="M566 59.6 h5 M566 59.6 l1.6-1.5 M566 59.6 l1.6 1.5" fill="none" stroke="#2b7cd3" stroke-width="0.8"/>
<text x="591.20" y="61.80" font-size="6.4" fill="#3a3a3a" stroke="#3a3a3a" stroke-width="0.05" text-anchor="middle">.00</text>
<text x="594.20" y="67.20" font-size="6.4" fill="#3a3a3a" stroke="#3a3a3a" stroke-width="0.05" text-anchor="middle">0</text>
<path d="M584.6 65 h5 M589.6 65 l-1.6-1.5 M589.6 65 l-1.6 1.5" fill="none" stroke="#2b7cd3" stroke-width="0.8"/>
<rect x="629.40" y="31.00" width="10.70" height="4.70" fill="#f0868e" />
<rect x="629.40" y="35.70" width="5.10" height="5.10" fill="#6aaee8" />
<rect x="629.40" y="40.80" width="10.70" height="5.10" fill="#f0868e" />
<rect x="626.2" y="30.8" width="19.4" height="15.2" fill="none" stroke="#404040" stroke-width="0.8"/>
<line x1="629.40" y1="30.80" x2="629.40" y2="46.00" stroke="#404040" stroke-width="0.55" />
<line x1="634.60" y1="30.80" x2="634.60" y2="46.00" stroke="#404040" stroke-width="0.55" />
<line x1="640.10" y1="30.80" x2="640.10" y2="46.00" stroke="#404040" stroke-width="0.55" />
<line x1="642.90" y1="30.80" x2="642.90" y2="46.00" stroke="#404040" stroke-width="0.55" />
<line x1="626.20" y1="35.70" x2="645.60" y2="35.70" stroke="#404040" stroke-width="0.55" />
<line x1="626.20" y1="40.80" x2="645.60" y2="40.80" stroke="#404040" stroke-width="0.55" />
<text x="614.50" y="60.40" font-size="8.6" fill="#242424" stroke="#242424" stroke-width="0.18" textLength="42.6" lengthAdjust="spacingAndGlyphs">Conditional</text>
<text x="611.50" y="71.70" font-size="8.6" fill="#242424" stroke="#242424" stroke-width="0.18" textLength="40.8" lengthAdjust="spacingAndGlyphs">Formatting</text>
<path d="M655.50 67.53 l1.40 1.40 l1.40 -1.40" fill="none" stroke="#333" stroke-width="1.0"/>
<rect x="680.00" y="35.70" width="13.50" height="10.30" fill="#6aaee8" />
<rect x="673" y="30.8" width="20.5" height="15.2" fill="none" stroke="#404040" stroke-width="0.8"/>
<line x1="680.00" y1="30.80" x2="680.00" y2="46.00" stroke="#404040" stroke-width="0.55" />
<line x1="686.80" y1="30.80" x2="686.80" y2="46.00" stroke="#404040" stroke-width="0.55" />
<line x1="673.00" y1="35.70" x2="693.50" y2="35.70" stroke="#404040" stroke-width="0.55" />
<line x1="673.00" y1="40.80" x2="693.50" y2="40.80" stroke="#404040" stroke-width="0.55" />
<path d="M683 45.2 l10.2-9.6 l1.6 1.6 l-9.6 10.2 z" fill="#ffffff" stroke="#505050" stroke-width="0.6" stroke-linejoin="round"/>
<path d="M679.6 48.8 c0.2-2.2 1.2-3.6 3.2-3.8 l1.6 1.8 c-0.4 1.6-2.4 2.4-4.8 2z" fill="#4a9be0"/>
<text x="665.00" y="60.40" font-size="8.6" fill="#242424" stroke="#242424" stroke-width="0.18" textLength="36.2" lengthAdjust="spacingAndGlyphs">Format as</text>
<text x="669.90" y="71.70" font-size="8.6" fill="#242424" stroke="#242424" stroke-width="0.18" textLength="19.1" lengthAdjust="spacingAndGlyphs">Table</text>
<path d="M692.40 67.53 l1.40 1.40 l1.40 -1.40" fill="none" stroke="#333" stroke-width="1.0"/>
<rect x="714.20" y="33.20" width="14.50" height="8.00" fill="#6aaee8" />
<rect x="711.2" y="30.8" width="20.3" height="15.2" fill="none" stroke="#404040" stroke-width="0.8"/>
<line x1="714.20" y1="30.80" x2="714.20" y2="46.00" stroke="#404040" stroke-width="0.55" />
<line x1="728.70" y1="30.80" x2="728.70" y2="46.00" stroke="#404040" stroke-width="0.55" />
<line x1="711.20" y1="33.20" x2="731.50" y2="33.20" stroke="#404040" stroke-width="0.55" />
<line x1="711.20" y1="41.20" x2="731.50" y2="41.20" stroke="#404040" stroke-width="0.55" />
<path d="M721.2 45.2 l10.2-9.6 l1.6 1.6 l-9.6 10.2 z" fill="#ffffff" stroke="#505050" stroke-width="0.6" stroke-linejoin="round"/>
<path d="M717.8 48.8 c0.2-2.2 1.2-3.6 3.2-3.8 l1.6 1.8 c-0.4 1.6-2.4 2.4-4.8 2z" fill="#4a9be0"/>
<text x="713.70" y="60.40" font-size="8.6" fill="#242424" stroke="#242424" stroke-width="0.18" textLength="14.0" lengthAdjust="spacingAndGlyphs">Cell</text>
<text x="706.80" y="71.70" font-size="8.6" fill="#242424" stroke="#242424" stroke-width="0.18" textLength="20.8" lengthAdjust="spacingAndGlyphs">Styles</text>
<path d="M731.40 67.53 l1.40 1.40 l1.40 -1.40" fill="none" stroke="#333" stroke-width="1.0"/>
<rect x="753.2" y="31" width="20" height="14.8" fill="none" stroke="#3a3a3a" stroke-width="0.8"/>
<line x1="759.87" y1="31.00" x2="759.87" y2="45.80" stroke="#3a3a3a" stroke-width="0.6" />
<line x1="766.53" y1="31.00" x2="766.53" y2="45.80" stroke="#3a3a3a" stroke-width="0.6" />
<line x1="753.20" y1="35.93" x2="773.20" y2="35.93" stroke="#3a3a3a" stroke-width="0.6" />
<line x1="753.20" y1="40.87" x2="773.20" y2="40.87" stroke="#3a3a3a" stroke-width="0.6" />
<rect x="755.00" y="36.00" width="20.00" height="4.90" fill="#6fb0e6" />
<path d="M758 33.2 L752.6 38.45 L758 43.7" fill="none" stroke="#6fb0e6" stroke-width="1.4" stroke-linejoin="round"/>
<text x="753.00" y="61.40" font-size="8.6" fill="#242424" stroke="#242424" stroke-width="0.18" textLength="20.9" lengthAdjust="spacingAndGlyphs">Insert</text>
<path d="M761.90 68.12 l1.60 1.60 l1.60 -1.60" fill="none" stroke="#333333" stroke-width="1.0"/>
<rect x="784" y="31" width="20" height="14.8" fill="none" stroke="#3a3a3a" stroke-width="0.8"/>
<line x1="790.67" y1="31.00" x2="790.67" y2="45.80" stroke="#3a3a3a" stroke-width="0.6" />
<line x1="797.33" y1="31.00" x2="797.33" y2="45.80" stroke="#3a3a3a" stroke-width="0.6" />
<line x1="784.00" y1="35.93" x2="804.00" y2="35.93" stroke="#3a3a3a" stroke-width="0.6" />
<line x1="784.00" y1="40.87" x2="804.00" y2="40.87" stroke="#3a3a3a" stroke-width="0.6" />
<rect x="786.60" y="36.00" width="9.40" height="4.90" fill="#6fb0e6" />
<path d="M796 35.4 L799.2 38.45 L796 41.5 z" fill="#6fb0e6"/>
<path d="M797.4 34.4 l7.6 8.4 M805 34.4 l-7.6 8.4" stroke="#d13438" stroke-width="0.85"/>
<text x="782.00" y="61.40" font-size="8.6" fill="#242424" stroke="#242424" stroke-width="0.18" textLength="23.7" lengthAdjust="spacingAndGlyphs">Delete</text>
<path d="M792.60 68.12 l1.60 1.60 l1.60 -1.60" fill="none" stroke="#333333" stroke-width="1.0"/>
<rect x="815" y="31" width="19.8" height="14.8" fill="none" stroke="#3a3a3a" stroke-width="0.8"/>
<line x1="821.60" y1="31.00" x2="821.60" y2="45.80" stroke="#3a3a3a" stroke-width="0.6" />
<line x1="828.20" y1="31.00" x2="828.20" y2="45.80" stroke="#3a3a3a" stroke-width="0.6" />
<line x1="815.00" y1="35.93" x2="834.80" y2="35.93" stroke="#3a3a3a" stroke-width="0.6" />
<line x1="815.00" y1="40.87" x2="834.80" y2="40.87" stroke="#3a3a3a" stroke-width="0.6" />
<rect x="821.60" y="36.00" width="6.60" height="4.90" fill="#6fb0e6" />
<rect x="815.50" y="36.00" width="19.00" height="4.90" fill="#a9d1f4" opacity="0.5"/>
<line x1="819.50" y1="28.20" x2="831.00" y2="28.20" stroke="#2b7cd3" stroke-width="0.9" />
<text x="811.90" y="60.70" font-size="8.6" fill="#242424" stroke="#242424" stroke-width="0.18" textLength="25.9" lengthAdjust="spacingAndGlyphs">Format</text>
<path d="M823.20 68.12 l1.60 1.60 l1.60 -1.60" fill="none" stroke="#333333" stroke-width="1.0"/>
<path d="M863.8 29.8 h-8.3 l4.2 4.6 l-4.2 4.6 h8.3" fill="none" stroke="#3a3a3a" stroke-width="0.9"/>
<text x="868.00" y="37.50" font-size="8.6" fill="#242424" stroke="#242424" stroke-width="0.18" textLength="34.6" lengthAdjust="spacingAndGlyphs">AutoSum</text>
<path d="M912.00 33.07 l1.50 1.50 l1.50 -1.50" fill="none" stroke="#333" stroke-width="1.0"/>
<rect x="854.3" y="47.8" width="10.8" height="9" fill="#ffffff" stroke="#3a3a3a" stroke-width="0.8"/>
<rect x="854.30" y="47.80" width="10.80" height="1.50" fill="#3a3a3a" />
<path d="M859.7 49.2 v5.6 M857.8 53 l1.9 1.9 l1.9 -1.9" fill="none" stroke="#2b7cd3" stroke-width="0.8"/>
<text x="868.00" y="55.50" font-size="8.6" fill="#242424" stroke="#242424" stroke-width="0.18" textLength="10" lengthAdjust="spacingAndGlyphs">Fill</text>
<path d="M881.30 51.43 l1.40 1.40 l1.40 -1.40" fill="none" stroke="#333" stroke-width="1.0"/>
<path d="M855 71.5 l5.5-5.5 l3.5 3.5 l-5.5 5.5 z" fill="#ffffff" stroke="#b146c2" stroke-width="1"/>
<path d="M855 71.5 l2.7-2.7 l3.5 3.5 l-2.7 2.7 z" fill="#c986d6"/>
<text x="868.00" y="73.50" font-size="8.6" fill="#242424" stroke="#242424" stroke-width="0.18" textLength="18.6" lengthAdjust="spacingAndGlyphs">Clear</text>
<path d="M890.50 69.43 l1.40 1.40 l1.40 -1.40" fill="none" stroke="#333" stroke-width="1.0"/>
<text x="929.80" y="37.60" font-size="11.2" fill="#3f8fd8" text-anchor="middle" textLength="7.4" lengthAdjust="spacingAndGlyphs">A</text>
<text x="929.80" y="47.60" font-size="11.2" fill="#3a3a3a" text-anchor="middle" textLength="6.6" lengthAdjust="spacingAndGlyphs">Z</text>
<path d="M934.8 34 h11.1 l-4.1 4.8 v5.8 h-2.6 v-5.8 z" fill="none" stroke="#3a3a3a" stroke-width="0.95" stroke-linejoin="round"/>
<text x="924.00" y="60.60" font-size="8.6" fill="#242424" stroke="#242424" stroke-width="0.18" textLength="24" lengthAdjust="spacingAndGlyphs">Sort &amp;</text>
<text x="923.30" y="71.40" font-size="8.6" fill="#242424" stroke="#242424" stroke-width="0.18" textLength="18.2" lengthAdjust="spacingAndGlyphs">Filter</text>
<path d="M944.40 67.33 l1.40 1.40 l1.40 -1.40" fill="none" stroke="#333" stroke-width="1.0"/>
<circle cx="971.6" cy="35.8" r="7" fill="none" stroke="#3a3a3a" stroke-width="0.95"/>
<line x1="966.60" y1="40.90" x2="959.00" y2="48.60" stroke="#3a3a3a" stroke-width="1.0" />
<text x="956.70" y="60.60" font-size="8.6" fill="#242424" stroke="#242424" stroke-width="0.18" textLength="24.6" lengthAdjust="spacingAndGlyphs">Find &amp;</text>
<text x="954.00" y="71.40" font-size="8.6" fill="#242424" stroke="#242424" stroke-width="0.18" textLength="22.2" lengthAdjust="spacingAndGlyphs">Select</text>
<path d="M979.20 67.33 l1.40 1.40 l1.40 -1.40" fill="none" stroke="#333" stroke-width="1.0"/>
<rect x="1002.3" y="27" width="22.2" height="22.6" fill="#ffffff" stroke="#3a3a3a" stroke-width="0.8"/>
<line x1="1002.30" y1="29.60" x2="1024.50" y2="29.60" stroke="#3a3a3a" stroke-width="0.6" />
<line x1="1008.00" y1="29.60" x2="1008.00" y2="49.60" stroke="#9a9a9a" stroke-width="0.5" />
<line x1="1013.50" y1="29.60" x2="1013.50" y2="49.60" stroke="#9a9a9a" stroke-width="0.5" />
<line x1="1019.00" y1="29.60" x2="1019.00" y2="49.60" stroke="#9a9a9a" stroke-width="0.5" />
<line x1="1002.30" y1="35.00" x2="1024.50" y2="35.00" stroke="#9a9a9a" stroke-width="0.5" />
<line x1="1002.30" y1="40.50" x2="1024.50" y2="40.50" stroke="#9a9a9a" stroke-width="0.5" />
<line x1="1002.30" y1="45.00" x2="1024.50" y2="45.00" stroke="#9a9a9a" stroke-width="0.5" />
<circle cx="1012.4" cy="36.6" r="6.5" fill="#ffffff" stroke="#3a3a3a" stroke-width="0.95"/>
<rect x="1008.60" y="35.20" width="2.40" height="4.40" fill="#9a9a9a" />
<rect x="1011.1" y="32.6" width="2" height="7" fill="#ffffff" stroke="#555" stroke-width="0.5"/>
<rect x="1013.30" y="34.20" width="2.60" height="5.40" fill="#4a9be0" />
<line x1="1017.00" y1="41.60" x2="1024.20" y2="49.00" stroke="#3a3a3a" stroke-width="1.0" />
<text x="999.20" y="60.60" font-size="8.6" fill="#242424" stroke="#242424" stroke-width="0.18" textLength="28.8" lengthAdjust="spacingAndGlyphs">Analyze</text>
<text x="1005.00" y="71.40" font-size="8.6" fill="#242424" stroke="#242424" stroke-width="0.18" textLength="17.5" lengthAdjust="spacingAndGlyphs">Data</text>
<path d="M1061.8 81 l3.3 3.3 l3.3-3.3" fill="none" stroke="#424242" stroke-width="0.9"/>
<rect x="6.5" y="99.3" width="69.4" height="13.3" rx="2" fill="#ffffff"/>
<text x="7.60" y="109.22" font-size="8.4" fill="#242424" stroke="#242424" stroke-width="0.18" textLength="15.5" lengthAdjust="spacingAndGlyphs">Y28</text>
<path d="M66.80 104.47 l2.60 2.60 l2.60 -2.60" fill="none" stroke="#333" stroke-width="1.0"/>
<circle cx="83.7" cy="103.2" r="0.7" fill="#424242"/>
<circle cx="83.7" cy="106.2" r="0.7" fill="#424242"/>
<circle cx="83.7" cy="109.2" r="0.7" fill="#424242"/>
<rect x="91.1" y="99.3" width="49.6" height="13.3" rx="2" fill="#ffffff"/>
<path d="M96 102.5 l7 7 M103 102.5 l-7 7" stroke="#c8c8c8" stroke-width="0.8"/>
<path d="M111.2 106.4 l2.8 2.8 l6.6-6.6" fill="none" stroke="#c8c8c8" stroke-width="0.8"/>
<text x="133.20" y="109.80" font-size="9.6" fill="#3a3a3a" stroke="#3a3a3a" stroke-width="0.18" text-anchor="middle" textLength="9.4" lengthAdjust="spacingAndGlyphs" font-family="'Liberation Serif', serif" style="font-style:italic">fx</text>
<rect x="145.4" y="99.3" width="929.6" height="13.3" rx="2" fill="#ffffff"/>
<path d="M1066.00 104.53 l2.50 2.50 l2.50 -2.50" fill="none" stroke="#333" stroke-width="1.0"/>
<path d="M1071 126.6 l3-4 l3 4 z" fill="#606060"/>
<rect x="1071.5" y="130.5" width="5.6" height="429" rx="2.8" fill="#747474"/>
<path d="M1071 571.5 l3 4 l3-4 z" fill="#606060"/>
<rect x="0.00" y="578.70" width="1080.00" height="15.50" fill="#eeeeee" />
<rect x="0.00" y="594.20" width="1080.00" height="14.80" fill="#f4f4f4" />
<line x1="0.00" y1="594.40" x2="1080.00" y2="594.40" stroke="#fafafa" stroke-width="0.6" />
<path d="M12.5 583.6 l-2 2.5 l2 2.5" fill="none" stroke="#c4c4c4" stroke-width="0.9"/>
<path d="M25 583.6 l2 2.5 l-2 2.5" fill="none" stroke="#c4c4c4" stroke-width="0.9"/>
<rect x="47.80" y="578.70" width="41.10" height="13.60" fill="#ffffff" />
<rect x="47.80" y="591.60" width="41.10" height="0.90" fill="#2f8a55" />
<text x="50.90" y="589.20" font-size="8.6" fill="#217346" stroke="#217346" stroke-width="0.18" font-weight="bold" textLength="34.1" lengthAdjust="spacingAndGlyphs">Smooth</text>
<text x="94.00" y="589.40" font-size="8.6" fill="#3d3d3d" stroke="#3d3d3d" stroke-width="0.18" textLength="35" lengthAdjust="spacingAndGlyphs">Textured</text>
<text x="139.50" y="589.40" font-size="8.6" fill="#3d3d3d" stroke="#3d3d3d" stroke-width="0.18" textLength="34.5" lengthAdjust="spacingAndGlyphs">Masonry</text>
<text x="184.00" y="589.40" font-size="8.6" fill="#3d3d3d" stroke="#3d3d3d" stroke-width="0.18" textLength="20" lengthAdjust="spacingAndGlyphs">Stain</text>
<line x1="134.00" y1="580.50" x2="134.00" y2="591.00" stroke="#d4d4d4" stroke-width="0.7" />
<line x1="179.00" y1="580.50" x2="179.00" y2="591.00" stroke="#d4d4d4" stroke-width="0.7" />
<line x1="209.00" y1="580.50" x2="209.00" y2="591.00" stroke="#d4d4d4" stroke-width="0.7" />
<circle cx="230.2" cy="586.6" r="4.6" fill="none" stroke="#555" stroke-width="0.8"/>
<path d="M227.6 586.6 h5.2 M230.2 584 v5.2" stroke="#555" stroke-width="0.9"/>
<circle cx="647.7" cy="583.6" r="0.6" fill="#555"/>
<circle cx="647.7" cy="586.6" r="0.6" fill="#555"/>
<circle cx="647.7" cy="589.6" r="0.6" fill="#555"/>
<path d="M662.6 583.6 l-3.4 3 l3.4 3 z" fill="#606060"/>
<rect x="666.8" y="583.9" width="379" height="5.4" rx="2.7" fill="#747474"/>
<path d="M1060.5 583.6 l3.4 3 l-3.4 3 z" fill="#606060"/>
<text x="5.00" y="605.15" font-size="8.2" fill="#3d3d3d" stroke="#3d3d3d" stroke-width="0.18" textLength="19.7" lengthAdjust="spacingAndGlyphs">Ready</text>
<circle cx="42.4" cy="598.3" r="1.0" fill="none" stroke="#333" stroke-width="0.8"/>
<path d="M38.4 599.8 Q40.5 598.9 41.6 599.6 M43.3 599.6 Q44.6 598.8 46.6 599.6 M40.9 600.2 L40.3 606.6 M43.4 602.4 L46.4 606.2 M46.4 602.4 L43.4 606.2" fill="none" stroke="#333" stroke-width="0.85" stroke-linecap="round"/>
<text x="50.60" y="605.15" font-size="8.2" fill="#3d3d3d" stroke="#3d3d3d" stroke-width="0.18" textLength="79.4" lengthAdjust="spacingAndGlyphs">Accessibility: Investigate</text>
<rect x="798.4" y="597.6" width="9.4" height="7" rx="0.8" fill="none" stroke="#3d3d3d" stroke-width="0.8"/>
<circle cx="805.6" cy="604" r="2" fill="#ffffff" stroke="#3d3d3d" stroke-width="0.7"/>
<text x="810.50" y="604.95" font-size="8.2" fill="#3d3d3d" stroke="#3d3d3d" stroke-width="0.18" textLength="52.8" lengthAdjust="spacingAndGlyphs">Display Settings</text>
<rect x="875.80" y="594.30" width="27.80" height="14.70" fill="#e0e0e0" />
<rect x="884.4" y="597.5" width="9" height="8" fill="none" stroke="#3d3d3d" stroke-width="0.8"/>
<line x1="887.40" y1="597.50" x2="887.40" y2="605.50" stroke="#3d3d3d" stroke-width="0.6" />
<line x1="890.40" y1="597.50" x2="890.40" y2="605.50" stroke="#3d3d3d" stroke-width="0.6" />
<line x1="884.40" y1="600.17" x2="893.40" y2="600.17" stroke="#3d3d3d" stroke-width="0.6" />
<line x1="884.40" y1="602.83" x2="893.40" y2="602.83" stroke="#3d3d3d" stroke-width="0.6" />
<rect x="913.8" y="597.5" width="8.8" height="8" fill="none" stroke="#3d3d3d" stroke-width="0.8"/><path d="M916.4 598.5 v6 M920 598.5 v6" stroke="#3d3d3d" stroke-width="0.8"/>
<path d="M941.4 597.5 h8.8 v8 h-8.8 z M943.8 597.5 v3.4 h4 v-3.4" fill="none" stroke="#3d3d3d" stroke-width="0.8"/>
<line x1="964.80" y1="601.60" x2="968.40" y2="601.60" stroke="#555" stroke-width="0.7" />
<line x1="973.60" y1="601.60" x2="1042.50" y2="601.60" stroke="#8a8a8a" stroke-width="0.7" />
<rect x="991.6" y="598.2" width="3.6" height="7" rx="0.6" fill="#606060"/>
<line x1="1008.00" y1="599.80" x2="1008.00" y2="603.40" stroke="#606060" stroke-width="0.6" />
<path d="M1046.5 601.6 h5 M1049 599.1 v5" stroke="#555" stroke-width="0.7"/>
<text x="1061.00" y="605.15" font-size="8.2" fill="#3d3d3d" stroke="#3d3d3d" stroke-width="0.18" textLength="14" lengthAdjust="spacingAndGlyphs">60%</text>
</svg>
</body></html>
